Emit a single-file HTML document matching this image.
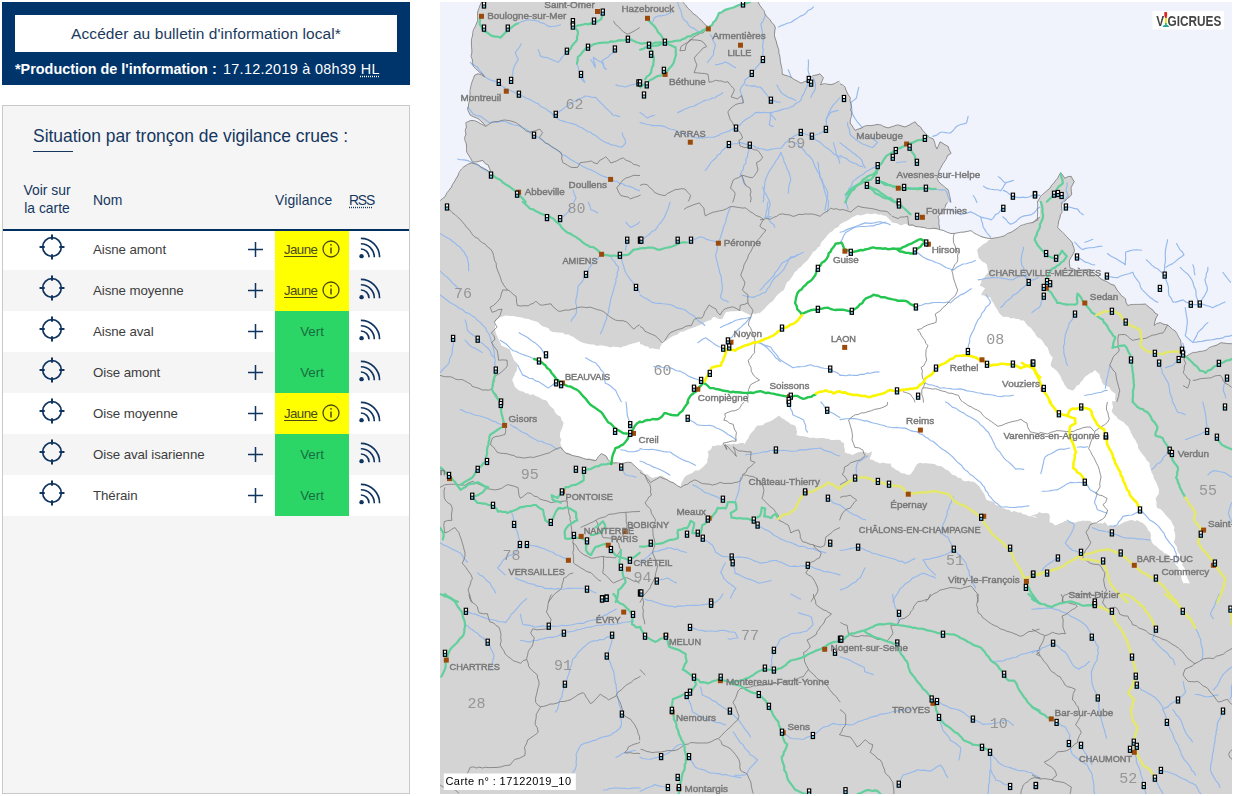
<!DOCTYPE html>
<html lang="fr"><head><meta charset="utf-8"><title>Vigicrues</title>
<style>
html,body{margin:0;padding:0;background:#fff;}
body{width:1234px;height:796px;position:relative;overflow:hidden;font-family:"Liberation Sans",sans-serif;color:#0a2f5c;}
.hd{position:absolute;left:2px;top:2px;width:408px;height:83px;background:#00356b;}
.btn{position:absolute;left:13px;top:13px;width:382px;height:37px;background:#fff;color:#1c3a5e;font-size:15.5px;line-height:37px;text-align:center;letter-spacing:0.08px;}
.prod{position:absolute;left:13px;top:58px;color:#fff;font-size:14.4px;line-height:18px;white-space:nowrap;letter-spacing:0.13px;}
.prod b{letter-spacing:0}
.prod abbr{text-decoration:underline dotted;text-underline-offset:2px}
.pan{position:absolute;left:2px;top:105px;width:406px;height:687px;background:#f5f5f5;border:1px solid #c9c9c9;}
.ttl{position:absolute;left:30px;top:19px;font-size:17.45px;line-height:22px;color:#16375f;white-space:nowrap;}
.bar{position:absolute;left:30px;top:44.5px;width:40px;height:1.5px;background:#16375f;}
.th{position:absolute;font-size:13.9px;line-height:18px;color:#16375f;white-space:nowrap;}
.hl{position:absolute;left:0;top:123px;width:406px;height:2px;background:#00305f;}
.row{position:absolute;left:0;width:406px;height:41px;}
.row.w{background:#fff}
.row .nm{position:absolute;left:90px;top:0;line-height:42px;letter-spacing:-0.08px;font-size:13.3px;color:#3d3d3d;white-space:nowrap;}
.row .vg{position:absolute;left:272px;top:0;width:74px;height:41px;text-align:center;line-height:42px;font-size:13.3px;}
.vg.j{background:#ffff00;color:#4a4a12;}
.vg.v{background:#2bd566;color:#176d3f;}
.vg.j u{text-underline-offset:2px;letter-spacing:-0.6px}
.row svg{position:absolute;}
</style></head><body>
<div class="hd"><div class="btn">Accéder au bulletin d'information local*</div>
<div class="prod"><b>*Production de l'information :</b><span style="margin-left:6.300px;letter-spacing:0.3px">17.12.2019 à 08h39 <abbr>HL</abbr></span></div></div>
<div class="pan">
<div class="ttl">Situation par tronçon de vigilance crues :</div><div class="bar"></div>
<div class="th" style="left:18px;top:76px;text-align:center;width:52px;white-space:normal;line-height:17.5px">Voir sur la carte</div>
<div class="th" style="left:90px;top:85px">Nom</div>
<div class="th" style="left:272px;top:85px;letter-spacing:0.15px">Vigilance</div>
<div class="th" style="left:346px;top:85px;text-decoration:underline dotted;text-underline-offset:2px;letter-spacing:-1.2px">RSS</div>
<div class="row w" style="top:123px"><svg style="left:35.800px;top:5.400px" width="26" height="26" viewBox="0 0 26 26" fill="none" stroke="#0f3460" stroke-width="1.7"><circle cx="13" cy="13" r="9.300"/><path d="M13 1.300v3.700M13 21v3.700M1.300 13h3.700M21 13h3.700" stroke-linecap="round" stroke-width="2"/></svg><div class="nm">Aisne amont</div><svg style="left:244px;top:12px" width="17" height="17" viewBox="0 0 17 17" stroke="#0f3460" stroke-width="1.5"><path d="M8.5 1v15M1 8.500h15"/></svg><div class="vg j"><u>Jaune</u> <svg style="position:relative;vertical-align:-4px;margin-left:1px" width="18" height="18" viewBox="0 0 18 18" fill="none" stroke="#4a4a12" stroke-width="1.3"><circle cx="9" cy="9" r="8"/><path d="M9 7.500v6" stroke-width="1.5"/><circle cx="9" cy="4.800" r="0.900" fill="#4a4a12" stroke="none"/></svg></div><svg style="left:354.500px;top:7.500px" width="23" height="23" viewBox="0 0 24 24" fill="none" stroke="#0f3460" stroke-width="1.700"><circle cx="3.700" cy="20" r="2.300" fill="#0f3460" stroke="none"/><path d="M3 12.500a8.500 8.500 0 0 1 8.500 8.500M3 7a14 14 0 0 1 14 14M3 1.500a19.500 19.500 0 0 1 19.500 19.500"/></svg></div>
<div class="row" style="top:164px"><svg style="left:35.800px;top:5.400px" width="26" height="26" viewBox="0 0 26 26" fill="none" stroke="#0f3460" stroke-width="1.7"><circle cx="13" cy="13" r="9.300"/><path d="M13 1.300v3.700M13 21v3.700M1.300 13h3.700M21 13h3.700" stroke-linecap="round" stroke-width="2"/></svg><div class="nm">Aisne moyenne</div><svg style="left:244px;top:12px" width="17" height="17" viewBox="0 0 17 17" stroke="#0f3460" stroke-width="1.5"><path d="M8.5 1v15M1 8.500h15"/></svg><div class="vg j"><u>Jaune</u> <svg style="position:relative;vertical-align:-4px;margin-left:1px" width="18" height="18" viewBox="0 0 18 18" fill="none" stroke="#4a4a12" stroke-width="1.3"><circle cx="9" cy="9" r="8"/><path d="M9 7.500v6" stroke-width="1.5"/><circle cx="9" cy="4.800" r="0.900" fill="#4a4a12" stroke="none"/></svg></div><svg style="left:354.500px;top:7.500px" width="23" height="23" viewBox="0 0 24 24" fill="none" stroke="#0f3460" stroke-width="1.700"><circle cx="3.700" cy="20" r="2.300" fill="#0f3460" stroke="none"/><path d="M3 12.500a8.500 8.500 0 0 1 8.500 8.500M3 7a14 14 0 0 1 14 14M3 1.500a19.500 19.500 0 0 1 19.500 19.500"/></svg></div>
<div class="row w" style="top:205px"><svg style="left:35.800px;top:5.400px" width="26" height="26" viewBox="0 0 26 26" fill="none" stroke="#0f3460" stroke-width="1.7"><circle cx="13" cy="13" r="9.300"/><path d="M13 1.300v3.700M13 21v3.700M1.300 13h3.700M21 13h3.700" stroke-linecap="round" stroke-width="2"/></svg><div class="nm">Aisne aval</div><svg style="left:244px;top:12px" width="17" height="17" viewBox="0 0 17 17" stroke="#0f3460" stroke-width="1.5"><path d="M8.5 1v15M1 8.500h15"/></svg><div class="vg v">Vert</div><svg style="left:354.500px;top:7.500px" width="23" height="23" viewBox="0 0 24 24" fill="none" stroke="#0f3460" stroke-width="1.700"><circle cx="3.700" cy="20" r="2.300" fill="#0f3460" stroke="none"/><path d="M3 12.500a8.500 8.500 0 0 1 8.500 8.500M3 7a14 14 0 0 1 14 14M3 1.500a19.500 19.500 0 0 1 19.500 19.500"/></svg></div>
<div class="row" style="top:246px"><svg style="left:35.800px;top:5.400px" width="26" height="26" viewBox="0 0 26 26" fill="none" stroke="#0f3460" stroke-width="1.7"><circle cx="13" cy="13" r="9.300"/><path d="M13 1.300v3.700M13 21v3.700M1.300 13h3.700M21 13h3.700" stroke-linecap="round" stroke-width="2"/></svg><div class="nm">Oise amont</div><svg style="left:244px;top:12px" width="17" height="17" viewBox="0 0 17 17" stroke="#0f3460" stroke-width="1.5"><path d="M8.5 1v15M1 8.500h15"/></svg><div class="vg v">Vert</div><svg style="left:354.500px;top:7.500px" width="23" height="23" viewBox="0 0 24 24" fill="none" stroke="#0f3460" stroke-width="1.700"><circle cx="3.700" cy="20" r="2.300" fill="#0f3460" stroke="none"/><path d="M3 12.500a8.500 8.500 0 0 1 8.500 8.500M3 7a14 14 0 0 1 14 14M3 1.500a19.500 19.500 0 0 1 19.500 19.500"/></svg></div>
<div class="row w" style="top:287px"><svg style="left:35.800px;top:5.400px" width="26" height="26" viewBox="0 0 26 26" fill="none" stroke="#0f3460" stroke-width="1.7"><circle cx="13" cy="13" r="9.300"/><path d="M13 1.300v3.700M13 21v3.700M1.300 13h3.700M21 13h3.700" stroke-linecap="round" stroke-width="2"/></svg><div class="nm">Oise moyenne</div><svg style="left:244px;top:12px" width="17" height="17" viewBox="0 0 17 17" stroke="#0f3460" stroke-width="1.5"><path d="M8.5 1v15M1 8.500h15"/></svg><div class="vg j"><u>Jaune</u> <svg style="position:relative;vertical-align:-4px;margin-left:1px" width="18" height="18" viewBox="0 0 18 18" fill="none" stroke="#4a4a12" stroke-width="1.3"><circle cx="9" cy="9" r="8"/><path d="M9 7.500v6" stroke-width="1.5"/><circle cx="9" cy="4.800" r="0.900" fill="#4a4a12" stroke="none"/></svg></div><svg style="left:354.500px;top:7.500px" width="23" height="23" viewBox="0 0 24 24" fill="none" stroke="#0f3460" stroke-width="1.700"><circle cx="3.700" cy="20" r="2.300" fill="#0f3460" stroke="none"/><path d="M3 12.500a8.500 8.500 0 0 1 8.500 8.500M3 7a14 14 0 0 1 14 14M3 1.500a19.500 19.500 0 0 1 19.500 19.500"/></svg></div>
<div class="row" style="top:328px"><svg style="left:35.800px;top:5.400px" width="26" height="26" viewBox="0 0 26 26" fill="none" stroke="#0f3460" stroke-width="1.7"><circle cx="13" cy="13" r="9.300"/><path d="M13 1.300v3.700M13 21v3.700M1.300 13h3.700M21 13h3.700" stroke-linecap="round" stroke-width="2"/></svg><div class="nm">Oise aval isarienne</div><svg style="left:244px;top:12px" width="17" height="17" viewBox="0 0 17 17" stroke="#0f3460" stroke-width="1.5"><path d="M8.5 1v15M1 8.500h15"/></svg><div class="vg v">Vert</div><svg style="left:354.500px;top:7.500px" width="23" height="23" viewBox="0 0 24 24" fill="none" stroke="#0f3460" stroke-width="1.700"><circle cx="3.700" cy="20" r="2.300" fill="#0f3460" stroke="none"/><path d="M3 12.500a8.500 8.500 0 0 1 8.500 8.500M3 7a14 14 0 0 1 14 14M3 1.500a19.500 19.500 0 0 1 19.500 19.500"/></svg></div>
<div class="row w" style="top:369px"><svg style="left:35.800px;top:5.400px" width="26" height="26" viewBox="0 0 26 26" fill="none" stroke="#0f3460" stroke-width="1.7"><circle cx="13" cy="13" r="9.300"/><path d="M13 1.300v3.700M13 21v3.700M1.300 13h3.700M21 13h3.700" stroke-linecap="round" stroke-width="2"/></svg><div class="nm">Thérain</div><svg style="left:244px;top:12px" width="17" height="17" viewBox="0 0 17 17" stroke="#0f3460" stroke-width="1.5"><path d="M8.5 1v15M1 8.500h15"/></svg><div class="vg v">Vert</div><svg style="left:354.500px;top:7.500px" width="23" height="23" viewBox="0 0 24 24" fill="none" stroke="#0f3460" stroke-width="1.700"><circle cx="3.700" cy="20" r="2.300" fill="#0f3460" stroke="none"/><path d="M3 12.500a8.500 8.500 0 0 1 8.500 8.500M3 7a14 14 0 0 1 14 14M3 1.500a19.500 19.500 0 0 1 19.500 19.500"/></svg></div>
<div class="hl"></div>
</div>
<svg class="map" width="792" height="792" viewBox="440 2 792 792" style="position:absolute;left:440px;top:2px;overflow:hidden;will-change:transform">
<rect x="440" y="2" width="792" height="792" fill="#d4d4d4"/>
<path d="M440 2 481.5 2 477.7 12.1 477.2 20.8 473.9 29.6 471.4 42.2 471.4 56 473.2 66.1 477.7 70.3 484.7 76.9 477.7 73.6 474.2 74.9 471.4 84.9 469.6 97.5 468.1 110 470.2 115.6 477.7 118.3 485.7 126.4 477.7 122.1 470.7 120.1 466.4 123.1 465.1 137.7 467.1 152.8 472.7 162.3 482.7 161 487.7 165.3 491 172.9 485.2 168.3 477.7 164.8 471.4 162.8 463.9 166.6 457.6 175.4 451.3 186.7 445 196.7 440 201Z" fill="#f0f3fc"/>
<path d="M682.7 2 690.3 10.8 699 18.3 707.8 27.1 715.4 20.8 719.1 13.3 727.9 9 739.2 5 750.6 2Z" fill="#f0f3fc"/>
<path d="M758.1 2 765.6 14.6 775.7 27.1 774.4 34.7 778.2 47.2 780.7 62.3 782 73.6 790.8 77.4 800.8 82.9 808.3 79.9 813.4 75.6 819.6 73.6 823.4 77.4 820.9 84.2 831 84.2 840 81.9 840 2Z" fill="#f0f3fc"/>
<path d="M840 2 1040 2 1040 202 950.6 202 948 189.2 940.5 184.2 936.7 177.9 940.5 167.8 945.5 159 950.6 152.8 948 146.5 940.5 141.4 936.7 149 933 138.9 926.7 135.2 922.9 130.1 915.4 122.1 905.3 126.4 897.8 125.1 887.7 127.6 877.7 124.4 863.9 126.4 855.1 130.1 850.1 122.6 851.3 112.6 850.1 97.5 845 87.4 840 83.7Z" fill="#f0f3fc"/>
<path d="M1032 2 1232 2 1232 202 1032 202Z" fill="#f0f3fc"/>
<path d="M1060.9 172.9 1064.7 177.9 1070.9 175.9 1074.7 181.6 1070.9 187.9 1072.2 194.2 1064.7 202 1037 202 1043.3 194.2 1049.6 187.9 1055.9 180.4Z" fill="#d4d4d4"/>
<path d="M494 322.6 496 320.7 497.6 319 500.6 317 503.5 316.2 505.5 315.6 508.1 315.8 509.9 316 513.6 315.9 515.6 316.6 517.2 317 520.8 317.3 523.2 317.9 524.6 318.4 528.5 318.9 530.9 320 533.4 320.8 535.4 321.2 538.2 322.2 539.9 324.2 542.9 326.5 546 327.3 548.8 328.6 549.8 330.6 552.6 331.9 556.3 332.3 557.6 332.5 560.7 332.7 563 332.7 564.9 334.6 568.8 334.5 570.7 336.1 573.7 337 576.4 339.2 578.4 340.6 580.8 341.9 583.2 342.8 585.5 343.6 588.7 344.1 591.1 344.6 593.9 344.6 596 345.7 598.2 345.7 600.1 345.2 602.6 345.4 606.5 346.2 608.2 346.8 610.5 347.5 613.3 346.6 615.8 346.9 618.5 347.1 620.3 347.8 624.1 346.1 625.1 346.2 629.1 344.5 631.1 343.9 632.8 343.5 636.9 342.6 639.8 341.4 640.1 344.2 642.3 344.4 645 346.3 648.2 346.5 649.4 348.4 652.9 348.3 655.6 349 657.9 348.9 660 349.7 659.8 346.9 661 346 662 342.1 663.5 340.8 666.6 340.5 667.6 339.4 669.5 338.3 672.5 336.3 675.3 335.3 677.2 334.7 679.9 332.1 683.4 331.4 685.9 330.4 687.1 329.8 689.9 328.7 693.4 327.5 695.9 326.8 698.4 325.6 700.4 324.8 703.1 324.1 704.6 322.3 708.3 320.8 710.9 319.9 713.1 317.1 715.7 317.3 718.2 318.7 720 319.2 722.3 319.1 724.3 315 726 312 729.8 311.4 732.1 311.3 734.7 311.2 738.4 311 741 310.7 743.5 311.7 745.6 313.1 748.3 313.9 751 315.8 753.1 313.5 756.1 313.9 758.3 312.8 759.2 313.5 762.7 310.5 765 308.3 766.6 306.3 768.4 304.5 770 302.9 772.3 301.6 774 299.5 775.7 297.1 777.5 294.7 779.4 293.2 781.8 291.3 783.7 290.2 785 287.6 785.9 284.6 787.1 281.9 789.1 280.7 791.1 278 793.4 274.7 794.2 272.6 796.4 271.1 798.7 268.2 801.1 266.8 803.2 263.9 805.1 262.4 807.7 260 809.9 257 811.2 255.1 812.9 252 816 250.2 817.7 247.5 820.2 246 820.8 243.3 822 241.5 824.4 238.9 826.7 236.3 827.1 235.4 829.7 232.7 832.8 230.9 834.7 228.6 836.2 228 838.9 226.6 839.7 224.4 843 222.5 845.4 221.5 847.5 220.4 850.5 218.4 852.3 217.2 855.2 215.9 857.6 214.7 860.3 215.5 863.7 214.7 865.6 213.9 867.9 213.5 870.9 214.3 873.3 213.7 875.4 213.5 878.3 214.8 881 214.5 883.6 215.7 885.6 215.7 888.1 218 889.3 219.3 892.3 222.4 893.6 222.8 897.3 223.4 900.7 225.5 903.5 224.4 905.4 223.7 909 225.2 910.2 225.8 913.6 226 916.5 227.3 918.9 226.8 920.1 227.1 922.7 228 926 228.1 928.9 227.9 930.1 228.2 933.5 228.9 937.1 229.3 938.9 228.8 938.7 229.2 942.7 230.1 945.6 230.8 948.1 232.3 949.8 233.6 952.5 233.4 955.8 233.2 957.8 232.2 960.9 231.7 963.3 232.4 965.9 231.9 967.4 231.4 970.7 230.8 972.4 231.8 975.4 233.4 978 234.7 979.8 235.9 981.7 237.3 984.3 238.1 987.3 238.3 991.4 238.7 988.3 240.6 986.3 242.7 983.5 244.1 981.2 245.9 978.4 248.2 977.1 249.9 977.6 252 978 254.4 978.7 258 979.8 259.1 982.2 261.6 984.9 262.7 986.8 264.6 987.5 267.7 987.9 269.9 988.2 272.4 986.4 274.6 984 278 981.3 279.6 981.3 282.8 979.6 285.6 982.6 287.1 985.1 288.2 982.5 292.1 981 294.9 984 295.4 985.4 296.3 987.5 297.2 990.3 297 991.3 300.2 993.4 302.7 994.5 305.3 996.1 307.8 997.7 310.3 998.8 312.6 1000.4 314.4 1003.3 317.1 1005.8 316.8 1008.8 316.9 1010.6 318.5 1013.6 318 1016 319.1 1018.8 319 1020.9 320.6 1024 320.4 1024.6 321.6 1026.7 324.4 1028.3 326.2 1031.1 328.1 1032.5 330.2 1034.9 333 1036 335.6 1038.1 337.7 1039.6 338.6 1039.9 338.3 1042.1 340.5 1044.1 343.5 1045.2 345.6 1047.5 347.2 1048.4 350.1 1049.5 353.4 1050.6 355.3 1052.6 357.6 1052.2 359.6 1050.9 363.2 1050.8 365.7 1051.7 366.9 1054.3 368.7 1056.4 370.4 1057.9 372.2 1059.9 375.3 1061.1 377.6 1061.9 379.9 1063.4 381.9 1064.3 384.4 1065.6 385.9 1067.1 388.6 1070.7 390 1073.1 390.5 1075.6 387.7 1076.2 386.1 1079.1 384.8 1080.7 382 1082.8 380.2 1083.9 378.1 1085.5 376.5 1088.3 374.4 1090.6 372.8 1092.6 372.4 1094.7 370.1 1096.8 371.8 1099 373.8 1099.6 374.6 1100.4 378.6 1101.5 379.7 1102.1 382.6 1103.8 385 1106.3 385.7 1109.3 387.3 1111.3 390.8 1113.4 392.3 1115.7 394.1 1115.2 397.4 1115 399.5 1116.1 401.3 1112 401.2 1112.5 404.6 1113.1 407.4 1111.8 410.1 1112 412.1 1114.3 415.1 1116.2 416.3 1118 419.1 1120.7 420.4 1123.8 422.3 1125.6 424.4 1128.3 426.4 1129 428.4 1130.3 430.6 1130.6 432.3 1132 434.4 1133.1 436.9 1135.4 440 1136.5 442.5 1137.9 444.8 1138.1 448 1139.5 450.3 1140.7 452.1 1143.2 455.3 1144.5 456.4 1145.6 458.2 1147.1 461 1149.4 462.4 1149.5 465 1150.1 468.1 1151.8 470.1 1151.2 472.1 1153.3 475.2 1153.7 477.9 1154.6 479.6 1156.5 483.1 1157 484.3 1158.6 488.2 1158.9 490.1 1158.8 493.7 1156.3 497.3 1155.6 499.3 1156.7 502.2 1156.4 504.6 1157.1 508 1160.4 508.9 1162.5 511.1 1164.9 513.9 1167 516.6 1169 518.4 1171.1 520.7 1172.1 523.3 1172.8 524.6 1174.5 527.6 1173.8 530.5 1174.8 532.6 1175.3 535.7 1175.1 538.3 1174.5 540.3 1173.9 542.2 1175.9 545.6 1177.2 547.3 1177.2 550 1178.6 553.3 1180.5 554.9 1180.5 558.1 1182 560.4 1182.6 563.2 1182.1 565 1184.6 568.3 1185.2 570.8 1185.8 572.7 1186.8 575.1 1187.4 578.6 1188.4 579.9 1189.8 583.4 1185.2 583.1 1183.6 583.6 1181.9 580.1 1181.3 577.3 1181 574.8 1179.8 573.5 1178.6 570.7 1178.4 567.6 1176 565 1174.9 563 1172.8 560.5 1170.8 558.4 1169 555.7 1166 553.6 1164.1 553.2 1162.4 551 1160.2 550 1157.6 547.6 1155.9 545.8 1154.3 545.2 1151.9 542.6 1151.6 541 1150.7 538.3 1151 535.2 1150.2 532.2 1147.9 530.1 1147.3 527.9 1144.8 524.8 1142.3 522.8 1139.9 521.7 1136.9 520.1 1135.6 521.2 1131.8 520.1 1129.8 520.2 1127.4 521.3 1124.5 521.8 1123.2 522.8 1120.3 524.2 1117 525.9 1114.3 524.8 1113.1 526.6 1110.6 526.6 1107.4 525.2 1105 522 1102.5 523.7 1100.4 523.1 1097.2 523.4 1095.2 523.6 1092.9 523.2 1090.4 521.1 1087.8 520.8 1084.2 520.7 1083 520.4 1080 521.2 1077.8 521.5 1074.8 522.7 1072.9 521.9 1069.2 522 1068 521.3 1065.1 520.8 1062.1 522.7 1060.3 523.3 1056.7 524.9 1054.6 525.3 1052.8 523.3 1049.9 522.6 1049.5 520.2 1049.9 516.3 1048.8 513.4 1046.7 512.9 1044.5 513 1041.8 513.3 1039.4 511.9 1036.8 514.1 1034.3 514.7 1031.2 515.8 1034.5 517.4 1037.1 517.4 1040.1 517.8 1037.6 517.5 1033.4 516.1 1030.8 516.2 1027.8 516.1 1026.5 514.7 1023 514.3 1020.8 512.4 1017.8 512.6 1016.5 511.8 1013.7 510.9 1011.5 511.9 1009.1 509.7 1006.3 509.4 1003.8 508.3 1001.5 507 998.7 505.7 995.4 504.7 994 502 990.4 500.9 986.3 499.7 985.3 496.8 984.2 493.8 982.8 491.9 981.1 489.4 979.4 486.5 977.4 484.7 976 483.2 973.2 481.6 971.2 481.8 968.5 480.7 965.8 481.4 962.7 480.5 961 477.9 957.8 477.7 956 475.7 952.3 474.8 950.3 472.4 948.3 470.5 945.7 469.4 942.5 467.1 941.2 466.2 937.3 465.8 935 464.2 933.6 464 929.9 463.5 928.2 463.5 925 463.1 923.5 463.4 919.9 462.7 917.2 464.1 915.4 466.7 913.6 470.3 912 472.2 910.9 474.2 907.6 475 904.9 473.4 902.8 473.4 900.6 472.8 898.8 470.9 895.7 469.7 894.5 468.6 891.6 466.9 890.5 463.3 888.2 463.8 885.8 463.2 882.6 462.5 879.9 463.4 878.3 462.6 875.7 461.8 873.1 460 869.5 459.3 871.3 454.9 872 451.5 870.4 452.3 867.6 453.5 865.4 452 862.1 451.7 860.6 451.7 858.3 452.2 854.9 453.8 852 455.2 850.7 454 847.5 453.5 844.7 452.2 844.9 449.4 844.1 446.9 844.2 443.3 841.6 441.9 840.3 440.2 840.6 439.9 836.7 439.8 834.1 440 830.6 439.9 828.7 438.7 826.2 438.8 823.3 437.9 821.6 438.1 818.7 438 816.3 438.5 813.5 437.4 810.7 438.1 807.7 437.3 805.4 436.5 803.6 436.3 799.9 436.1 796.3 435.1 797.1 431.9 796.5 429.5 795.9 426.7 793.9 425.1 790.5 424.3 789 422.5 785.6 420.6 784.2 419.2 782 418.2 778.8 415.4 777 417 773.4 419.4 770.5 421.3 768.1 422 764.8 423.3 763.1 425 760.7 425.5 757.4 425.4 755.3 427.8 754.2 430.1 752.5 431.4 750 434.6 748.7 437 748.6 438.3 746.3 440.8 744.8 444 743.5 443.1 740.6 442.8 738.7 443.7 735.9 444.3 733.7 443.5 730.8 444.5 728.2 444 724.8 445.1 722.4 444 720.4 445.7 718.6 445 714.7 445.9 712.5 445.8 711 449.2 707.7 451.6 708.3 453.3 708.5 456.6 707.3 459.6 707.3 462.8 705.6 464.3 703.5 466.6 700.6 468.9 698.4 470.4 695.2 470.4 692.7 472.7 690 473.9 686.6 475.6 684.4 477.3 682.7 480.7 680.9 483.7 680.8 486.8 676.9 485.4 675.2 483.5 672.9 482.1 670.5 481.6 668 479.4 665.8 478.5 661.9 475.6 660.5 476.1 657.8 476.8 655.4 477 652.9 478 649.8 476.6 647.9 474.4 644.5 473.9 642.7 471.6 640.5 469 639.6 471.1 638 469.2 635.2 467 634.2 465.4 630.5 461.8 629.1 462.5 626.3 462.3 623.7 462.8 621.1 463.2 618.5 464 616 462.3 613.1 462.5 610.1 463.1 608.6 459.7 607.5 457.4 605.6 455.6 603.9 454.7 600.3 453.6 599.8 455.6 597.9 457.4 595.9 460.1 593.7 458.9 590 458.6 588.9 458.2 585.7 458.7 583.5 458.6 581.3 457.3 578.6 456.6 576.5 455.9 573.8 455.7 570.2 453.8 567.6 452.6 565.2 452.3 563.3 449.7 562.5 448 560.3 444.1 560.5 442 561.3 439.6 560 436.9 560 434.5 560.2 432.3 561.5 429.7 562.6 426.7 562.9 425.4 563.6 422.8 561.7 420.2 560.5 416.5 557.6 415.3 555.3 412.7 553.7 409.1 551.1 407 549.2 405.1 547.2 401.2 551.2 401.9 547.6 401.7 545.5 399.9 542.6 399.4 539.8 397.7 537.9 396.8 535.6 396.1 533.4 394.2 529.7 394.9 528.3 393.3 526.2 393.5 522.6 391.2 520.6 391.2 518.4 389.9 515.2 387.2 514.4 385.8 513.2 382.3 512.2 380.5 513 377.7 514.8 374.8 514.7 373.6 516.9 370.5 517 367.3 518 365.1 516.9 362.9 514.3 360.5 512.6 357 512.1 355.5 510.9 353.1 509.8 349.5 506.8 348.1 504.1 346.8 501.6 345.7 500.2 342.6 498.6 339.3 496.6 335.1 495.8 332.7 494.9 329.5 495 326.9 495 324.9 494.6 322.9Z" fill="#ffffff"/>
<path d="M948 202 943 209.5 938 217.1 939.5 229.4 950.6 233.4 960.6 232.2 970.7 230.9 979.4 235.9 990.8 238.4 1000.8 237.2 1010.9 232.2 1020.9 225.9 1033.5 222.1 1040 217.1 1040 202Z" fill="#f0f3fc"/>
<path d="M1032 202 1037.5 202 1037.5 219.6 1032 223.4Z" fill="#f0f3fc"/>
<path d="M1062.2 202 1061.6 212.1 1057.1 227.1 1064.7 234.7 1072.2 242.2 1074.7 251 1069.7 259.8 1069.7 267.3 1077.2 271.1 1089.8 269.8 1099.8 277.4 1107.4 282.4 1114.9 284.9 1118.7 292.5 1125 298.7 1127.5 305 1137.5 305 1145.1 303.8 1150.1 307.5 1157.6 315.1 1153.9 325.1 1160.1 322.6 1167.7 325.1 1175.2 331.4 1180.2 340.2 1182.8 350.2 1185.3 356.5 1192.8 352.8 1202.9 351.5 1212.9 346.5 1220.4 342.7 1232 344 1232 202Z" fill="#f0f3fc"/>
<g fill="none" stroke="#95b9ec" stroke-width="1.15" stroke-linejoin="round" stroke-linecap="round">
<path d="M517.9 23.4 521.7 21.6 525 20.7 528.4 19.5 530.7 20.3 534.5 20.5 537.9 21 540.2 22.5 544.4 23.6 547.1 25.6 550.3 26.6 554 26.3 557.7 25.7 560.5 24.8"/>
<path d="M470.2 62.3 472.4 64.5 475.6 66 478.1 67.8 479 69.9 481.5 72.3 483.3 74.8 485.6 77.3 487.9 78.8 491.5 80.4 494.6 81.1 497.8 82.5 500.5 84.4 503.2 86.9 506.5 88.8 508.9 89.8 512.2 91.3 514.9 92.6 517.9 93.7 519.9 95.1 522.9 96.2 526.4 98.2 529.8 99.4 532.7 101.1 535.6 102.7 538.5 103.9 540.1 106 542.8 107.5 545.9 108.7 548.3 111.1 550.6 112.1 553.2 115 555.1 116.8 557.7 118.7 560.1 120.3 563.8 121.4 566.6 122.3 569.6 123 572.5 123.6 576 124.8 579 126.7 582.1 127.7 584.3 129.5 587.9 131.6 590.5 132.2 592.9 134.3 595.8 135.7 598.2 137.6 601 139.9 603 141.1 605.8 142.6 608.3 143.2 611.3 144.9 614.7 145.2 618 146.4 621.3 147.2 623.4 145.7 625.7 142.9 625 139.4 622.9 136.3 622.3 132.8"/>
<path d="M511.1 80.4 511.8 76.9 512.8 73.8 513.1 69.9 514.5 66 515.8 63.4 518.4 59.4 516.5 55.9 515.3 52.3 517.3 49.9 519.8 46.5 521.2 43.8"/>
<path d="M555.8 114.3 559.2 111.7 562.3 109.6 565.3 107.1 568.4 105.7 570.5 104.1 573.4 102 576.2 100.2 578.9 98.7 582.6 97.8 585.2 96 589.1 96.5 592.8 97.5 595.6 97.4 598.4 100.4 600.9 103 603.1 104.9 605.7 107.9 607.8 109.7 610.6 112.4 612.9 115 616.3 115.6 619.5 116.6"/>
<path d="M538 49.7 539.7 53.1 540.1 55.9 543.4 57.1 547.1 57.6 550.2 59 554.5 60.8 558.1 62.3 560.5 59.9 562.1 57.1 564.6 54.7 567.3 52.3"/>
<path d="M581 74.4 583.1 78.6 584.8 82.5 582.5 80.4 580.5 77.1 579.8 73.9 578.7 70.2 578.2 66.7 576.5 63.4"/>
<path d="M590.8 59.8 592.8 62.5 593.6 64.4 595.3 67.5 594.9 63.5 593.8 61.1 593.4 57.2 596 59.3 598.7 61 601.3 62.2 603 64.3 604.1 67.7 606.3 69.5 604 67 603.4 63.7 602 60.7 605.4 58.5 608.1 56.9 610.6 54.3 613.7 52.7"/>
<path d="M467.6 107.5 470.4 110.2 473.2 114.1 476.2 115.5 479.9 116.1 483.1 118.1 486.7 120.7 490.1 123 493 121.8 496.8 122.4 499.5 121.6 502.6 121.3 505.8 121.7 508.3 122.9 510.9 123.9 514.2 125 517.4 125.5 519.9 126.1 522.8 127.9 525.9 129 528.9 131.1 531.2 133.8 534.3 135.3 537.1 136.6 539.6 138.5 542.9 140.4 545.6 142.8 548.5 144.2 550.3 145.8 553.4 147.9 555.4 149 557.7 150.8 560.8 153 562.6 154.8 565.6 155.8 568.6 158 570.6 159.5 573.5 161.1 575.4 162.3 579.1 163.9 582.1 166.1 584.8 167.3 587.2 168.8 591.2 169.9 593.2 171.1 596.7 172.7 599.6 174.4 601.7 175.8 604.7 176.6 608.3 178.1 611 179.5 614.1 181.1 617.2 181.3 619.4 183.5 622.8 183.8 625.4 185.8 629.4 186.4 633.3 187.8 635.9 189.5 639.6 190.6"/>
<path d="M615.9 84.9 618.7 85.9 622.1 86.2 625.4 87 628.7 85.7 632.4 84.7 634.9 84.3 638.4 82.4"/>
<path d="M457.6 159 460.4 159.7 464.1 159.9 467.7 160.6 470.7 162.1 474.9 164 478 165.4 480.8 167.3 483.6 169.4 487.2 170.8 489.9 173.2"/>
<path d="M573.2 190.4 574.4 194.4 576.1 198 573.7 202.4"/>
<path d="M762.9 59.5 760.8 62.4 758.6 64.9 756.3 67.4 754 70.6 752 73.3 750 76 747.8 77.7 745.1 79.7 744.4 83.3 741.7 86.4 740.1 89.8 740.9 92.9 742.1 96.1 742.3 99.4 742.8 102"/>
<path d="M765.6 14.6 764.3 18 762.7 21.6 760.9 24.2 761.6 27.9 762.1 30.9 762.4 34.1 763.4 37.2 763.4 40.6 762.8 44.1 762.5 47.3 763.4 49.7 762.7 53.5 763.4 56.7 763.2 59.2"/>
<path d="M813.4 7 811 9.3 808 10.5 806.2 12.9 803.6 15 799.9 16.4 797 18.6 793.9 20.3 791.3 22.3 787.4 23.2 784.3 24.6 780.9 25.7 778.7 27.1"/>
<path d="M808.3 59.8 808.5 63 808.3 66.7 808.1 70.6 809.1 74.2 809 77.2 807.9 80 807.4 83.7 806.9 86.7 805.4 89.5 804 93.4 802 96.3 800.9 100.1 798.8 102 795.7 103.5 793.8 105.7 790.9 107 786.9 108.8 784.4 108.7 780.5 110.1 777.1 111.1 774.2 111.8 771 113 770.3 115.3 770.4 119.1 769.6 122.1 769.3 124.9 773.2 126.6"/>
<path d="M840 97.5 838.3 99.5 835.6 102.7 833.3 104.9 831.3 108 829.6 111.1 828.6 113.3 827.1 117.1 826.4 119.6 826.4 123.6 826.4 125.9 826.2 128.9 823.1 131.5 819 133.7 816.3 134.7 811.7 136 808 135 804.3 133.8 800.6 132.9 797.3 134.6 794.4 136.1 791.3 138 788.5 140.7 785.6 142.4 783.5 145.1 781.2 148.2 777.7 148.3 774.9 148.8 771.6 149.1 768.3 150.1 765.9 150.1 762.5 148.8 759.7 148.6 755.9 147.5 753.4 145.7 750.1 145.6 746.5 144.4 743.9 143.6 740 142.4 736.9 143.7 733.1 143.8 729.3 144.8"/>
<path d="M640 122.6 642.9 123.3 646.6 124.3 649.2 124.7 653.1 125.6 656.1 125.6 658.9 125.5 661.6 125.9 664.6 126.6 668.1 128.2 670.9 129.2 674.5 129.8 676.8 131.4 680.5 133.1 683.7 133.2 686.4 134.4 688.9 135.7 692.1 136.3 694.8 137.3 698.1 138.1 701.5 137.9 703.9 138 707 137.2 710.5 137.2 713.8 137.1 716.4 136.2 719 135.1 722.2 133.2 725.4 132.3 729 131.1 732.4 129.1 736.5 128.4 738.2 125.9 740.4 124.6 742.8 121.7 745.3 119.8 748.2 117.9 750.4 116.9 753.2 114.7 755.2 112.6 759 112.4 762 112.8 764.3 112.2 767.7 112.8 771.2 112.2"/>
<path d="M677.7 112.6 680.4 111.4 683.9 109.5 687.3 108.3 690 107 694 106.3 696.7 104.6 700 103 703.5 101.1 706.1 100 709.4 99.8 712.1 98.1 715.1 97.7 717.6 95.8 720.9 94.2 722.8 92.6"/>
<path d="M749.8 145.2 749 148 748.7 151.4 747.7 153.6 747.5 156.7 745.7 159.4 746 163.1 743.7 165.6 743.3 169.4 741.3 172 740.3 175 742.7 178.5 743.4 182.1 745.3 185.3"/>
<path d="M705.3 170.3 707.3 167.8 709.3 165.1 711 162.3 713.1 160.3 715.9 158.3 717.2 155.3 720.2 153.7 721.8 151 724.5 148.6 726.2 146.8 729 144.4"/>
<path d="M763.1 202 763.8 199.4 763.5 196.1 764.2 193.5 764 190.1 764.6 186.6 764.6 183.4 765.2 180.5 766.1 178 767.3 175.5 768.8 171.9 770.8 169 772.3 166.9 774 164.3 776 160.7 777.6 158.9 779.4 155.6 781.1 152.5"/>
<path d="M795.8 142.7 797.9 144.5 800 146.7 802.7 149 804.9 151.5 806.4 154 808.8 155.5 811.2 158.2 812.8 160.5 813.7 163.1 814.9 166.3 816.5 169.5 817.6 171.6 819.5 174.5 820.8 178.3 821.9 181.4 822.9 183.7 823.6 187 824.4 190.5 825.3 193.1 826.2 196.3 827.5 198.9 828.7 202"/>
<path d="M811.9 136.2 813.8 137.6 816.3 140.4 819.3 141.5 821.5 143.6 823.8 145.9 826.1 147.6 829.2 149.6 831.4 151.4 833.9 154.1 837.6 155.8 840.3 157.9"/>
<path d="M677.7 2 678.2 4.6 679.4 7.5 681.1 11.2 681.7 14.5 682.3 16.7 684.1 20.1 687 21.9 688.3 24.6 690.7 27.2 694 28.4 696.9 30.7 700.5 32.4"/>
<path d="M745.5 84.9 748.5 85.7 751.3 86.1 755 85.9 757.9 87.2 760.1 87 762.6 89.5 764.6 92.2 766.9 94.8 769 98.2 771.4 100.5 773.8 100.6 777.5 102.2 780.3 102.1"/>
<path d="M788.2 69.8 789.8 73.4 791.3 77.5"/>
<path d="M652.6 22.1 654.6 17.6 658.6 15.8 661.8 15.8 665.5 15 668.6 13.7 672.8 11.6"/>
<path d="M710.4 34.7 712.4 37.7 713.2 41 715.3 44.3 714.6 48.5 713.6 51.2 713.4 55 711.6 57.1 709.4 59.9 707.6 62.3"/>
<path d="M715.4 64.8 718.6 64.4 722.5 63.3 725 61.9 729.3 63.7 732.7 66.2 735.6 67.6"/>
<path d="M776.9 84.9 778.6 88.2 780.7 92 783.2 94.3 785.5 95.5 787.9 97.2 791.8 98.4 795.9 100.4"/>
<path d="M769.4 112.6 771.4 115 774 117.9 775.6 119.6"/>
<path d="M640 112.6 643 114.4 644.9 116.1 647.5 118 651.2 116.1 654.7 115.3"/>
<path d="M810.9 97.5 812.4 93.7 814.7 90.7 815.4 87.4 815.4 83.7 814.6 80.9 813.1 77.5"/>
<path d="M825.9 120.1 827.1 117.5 829.1 114.8 830.6 112.4 835 111.1 838.1 110.4"/>
<path d="M780.7 152.8 782.4 156.3 783.6 159 784.1 162 786 165.4 786.9 168.7 788.7 171.8 789.6 174.8 790.5 177.8 790.6 180.9 789.6 183.4 788.7 186.9 788.7 190.5 788.3 193.1"/>
<path d="M833.5 142.7 834.4 146.3 835.4 149.6 836.1 153.1 836.8 155.7 839.1 159.9 839.6 163.2"/>
<path d="M858.8 87.4 857.9 90.7 857.2 94.1 856.4 98 853.7 100.4 850.8 102.5 851.4 105.4 851.9 109.8 852.1 113.1 853.8 116.4 855.4 119 857.5 122.2 860 124.9 862.2 127.7"/>
<path d="M968.1 116.3 967.4 119.8 966.4 123 963.7 123.9 961.5 124.2 958.1 125.5 955.6 127.3 953.3 130.5 950.3 133 947.2 132.9 943.6 132.2 940.3 132.2 936.8 135.1 932.8 136.4"/>
<path d="M998.3 176.6 1000.5 178.2 1003.1 181.1 1005.7 183.3 1004.3 185.1 1003 187.6 1000.6 190.8 997.7 189.8 994.2 189.6 990.8 189.2 987.1 188.4 983.5 186.2"/>
<path d="M1003.3 190.4 1006.8 191.9 1009.5 194.3 1012.4 195.7 1016 197.1 1019.7 197.6 1022.8 197.1 1025.4 197.6 1029 197 1031.8 195.5 1034.7 194.9 1039.8 195.4"/>
<path d="M1013.4 180.4 1009.4 181.6 1005.6 182.8"/>
<path d="M973.2 195.5 975.2 198.5 976.9 202.5"/>
<path d="M840 142.7 842.9 145.1 845.2 146.5 847.2 148.5 850.2 150.5 852.3 152.5 855 154 857.1 156 860 158.1 862.2 160.8 862.9 164.3 865.4 167.8"/>
<path d="M840 155.3 842.6 157 846.5 158.5 849.3 161.1 852.9 162.9 856.5 163.8 858.8 165.7 862.8 166.8"/>
<path d="M847.5 122.6 847.6 125.3 849 128.5 849.8 131.8 850.2 134.7 852.9 137 855.4 139.4 857.3 140.6 860.5 142.8 863.3 144.2 866.2 145.2 870 146.8 872.6 147.5 874.8 145.3 877.6 142.4 874.9 140.5 872.4 137.7"/>
<path d="M896.5 162.8 900.8 162 905.8 161.7"/>
<path d="M935.5 189.2 938.9 189.8 942.6 189.8 945.4 190 947 193.1 947.9 196.1 949.1 199.1 950.8 202.4"/>
<path d="M1067.2 182.9 1066.9 187.1 1065.9 190.2 1068.2 196 1065.5 198.9 1062 202.5"/>
<path d="M440 233.4 443.6 235.8 447.2 237.7 450.4 239.5 452.7 241.6 455.3 243.3 457.9 245.8 460.3 247.2 461.6 249.5 464.4 252.3 465.3 254.6 467.2 257.2 467.7 260.6 468.6 264.1 468.5 267.7 468.7 270.6"/>
<path d="M440 271.1 442.9 273.7 444.9 275.6 448 277.8 450.4 280.3 452.2 282.9 455.1 285.2 457.5 287.5 460.1 289.9"/>
<path d="M440 295 443 297 445.1 298.8 447.3 300.2 449.9 302.5 453.8 304.4 456.7 306.2 459.2 308.4 462.6 309.5 465.4 312.4 469.1 313.5 472.5 316.1 475.1 317.8 477.3 320.1 480.3 322.4 482.8 325.4 485.3 327.6 487 331.5 489.1 334 490.1 337.3 491.1 341 492.2 343.5 492.8 346.6 494 350.5 494.3 353.6 494.5 356.8 495.2 360.4 494.7 363 495.3 366.7 495.8 370.5"/>
<path d="M465.1 320.1 466.2 323.3 466.9 327.3 467.5 330.1 469.9 332.8 472.9 335 475.1 336.6 477.5 339.1 479.7 341.5 482.5 343.4 485.5 346.1 487.9 348.2 490.2 350.8 491.4 354.8 494.2 357.4"/>
<path d="M453.1 338.4 453.5 342.4 453.1 346 452.3 348.9 452.2 352.3 451.6 355.5 449.7 358.5 449.3 362.2 447.6 364.9 445 367.4 442.4 370 439.7 373.1"/>
<path d="M465.1 340.2 467.8 343.2 469.7 345.5 472.6 347.2 476.5 349.1 479.8 351 482.2 352.5"/>
<path d="M560.1 218.6 563.1 216.8 565.7 214.2 568.1 211.8 571 208.2"/>
<path d="M588.2 202 589.9 205.9 590.9 209.8 594.3 210.9 597.8 213.1"/>
<path d="M601.6 254.3 599 256.6 597.8 259 594.6 260.7 593.1 263 591.3 265.2 588.8 268.5 587.9 271.6 585.5 274.6 584.4 276.8 583.4 279.6 581.4 282.7 579.4 284.5 577.9 287.1 577.8 289.9 577.2 293 576.9 296 576 299.4 575.6 302.7 576.6 305.9 576.5 309.3 576.4 312.8 574.9 315.9 572.4 318.5 571.1 321.2"/>
<path d="M610.9 257.3 612.5 259.8 615 262.2 616.1 264.7 618.6 266.9 618.3 269.8 617.1 272.8 617.2 276 615.9 278.9 615.9 282 614.5 285.9 614.1 288 612.9 292 612.3 294.4 611.1 297.6 610.4 301 610 303.7 609.2 307.1 608.7 309.8 608.7 312.2 607 315.4 606.6 319 605.1 321.9 604.5 324.1 603.3 327.3 602.3 330.4 600.4 333.8"/>
<path d="M627.2 240.2 627 243 626 246.5 625.5 250.2"/>
<path d="M619.9 255.3 620.8 258.1 622.1 260.9 622.7 263.4 623.9 266.7 624.4 269.6 625.6 272.3 627.3 275.3 629.3 277.9 630.7 280 632.7 282.2 634.7 285.4 636.2 287.8 638.4 289.6 639.6 292.7"/>
<path d="M519.1 332.7 522.5 334.7 525.5 336.3 528.3 338 530.1 339.5 532.8 341.6 535.4 343.1 537.7 345.1 540.4 347.7 542.3 350.3 543.6 352.8 546.1 355"/>
<path d="M500.3 340.2 503 341.9 505.8 343.8 508 345.8 510.6 348.6 513.2 350.7 515.8 351.2 518.9 353 522.2 354.3 525.9 355.6 528.2 356.2 531.4 357.8 534.5 358.6"/>
<path d="M517.9 365.3 519.2 368.4 521 371.7 522.6 374.9 526.5 376.6 529.1 378.2 532.7 378.6 535.5 380.9 539 381.8 542.2 384.1 544.5 385.5 548.2 388.1 550.4 386.4 553.8 384.1 556.5 382.4"/>
<path d="M585.7 357.8 589.4 359.9 592.6 361.7 596.2 363.2 597.4 365.1 599.5 367.4 601.1 370.3 603.6 372.4 604.3 375.8 604.5 379.1 605.4 383.3 608.4 384.5 611.4 386.8 613.6 388.7 615.6 390.3 616.9 393.3 618.3 396 619.7 398.7 621.3 401.7"/>
<path d="M625.9 222.1 628.1 224.9 630.9 227.5 633.6 225.9 637.3 224.1 639.6 221.8"/>
<path d="M691 240.2 694.4 239.6 696.8 238.3 700.6 236.7 703.8 237.7 706.6 239.4 710 240.2 714.8 241.3 718 243.6 717.3 246.8 717.3 250.2 715.7 254.1 715.9 256.8 716.6 259.8 717.6 263.7 717.9 265.6 719.1 269.4 719.5 272 720.6 275 721.5 277.7 721.4 281.3 722.2 284.6 722.4 287.6 722.1 291.2 721 294.2 720.4 297.1 722.7 299.7 725.3 300.4 728.2 302.1"/>
<path d="M670.2 202 669.1 205.3 668.2 208.2 666.9 211.6 665.8 213.8 664.8 216.8 662.8 219.6 661.6 221.8 658.7 224.7 657 227.6 655.3 229.9 652.1 231.4 649.6 234.2 646.4 236.4 644.1 238.2 641.6 240.5"/>
<path d="M730.5 207 729.2 210.2 728.1 212.9 727.2 215.7 726.3 218.7 725.8 222.2 724.6 224.6 723.2 227.8 722.4 231.5 721.4 234.5 720.5 237.5 719.1 240.6 718.1 243.2"/>
<path d="M640 295 643.5 297.4 646.4 298.5 650 300.9 652.1 302.4 655.9 303.2 660.2 303.4 662.7 303.8 666.3 304 670.7 304.7 673.1 305.6 675.9 307.4 679.1 308.4 682.4 309 684.8 309.7 688.3 312.6 689.7 313.7 693.2 315.5 695.6 317.6 697.5 320 700 322.1 702.8 323.6 704.8 325.5"/>
<path d="M803.3 252.3 800.5 253.7 797.1 255.3 794.4 256.6 790.8 256.8 788.5 260.1 787 263.5 785.2 266.4 783.5 269.9 780.6 272.8 778.6 274.9 775.8 276.8 773.1 279.9 770.9 283.5 769.8 286.3 767.2 288.9 765.7 292.3 762.2 293.2 759.7 294.7 756.5 296 753.3 297.4 749.4 296.9 746.3 296.2 742.8 295.2"/>
<path d="M697.8 342.7 699.9 341.2 702.9 339 705.8 337.8 708.3 339.8 710.5 341.1 713.2 343.1 715.3 344.7 719.1 346.8 723.3 347.8"/>
<path d="M720.4 327.6 723.8 325.8 726.4 324.7 730 323.1 732.5 322 735.7 320.3 738.1 319.8 741.4 318.9 745.1 318.5 747.5 318 750.8 317.1 747.6 320.3 745.9 322.7 743.3 324.8 740.4 327.6 737.9 329.7 736.2 331.5 733.7 334.3 732.4 336.7 729.8 338.6 728.2 341"/>
<path d="M758.1 342.7 761.4 343.4 764.4 345.1 768 346.1 771 347.2 772.9 350.7 774.5 352.4 777.1 355.3 778.3 357.6 780.7 360.1 783.5 361.9 787.4 364.2 790.6 366.2 793 367.8 797.3 366.8 799.9 366.8 804.4 366.5 807.9 365.4 810.9 364.8 814 366.2 817 366.2 820.6 367.6 824 368.2 827.4 368.5 830 369 833.1 371.2 837.1 372.8 840.3 375.1"/>
<path d="M653.8 366.6 657 367 660 366.8 663.2 367.5 666.5 368 670.2 367.9 673.2 368.9 676.2 370.7 679.9 371.1 682.5 372.4 685 373.6 687.8 375.8 690.8 377.1 693.8 378.4 697.6 379.5 701.1 380.7"/>
<path d="M768.1 202 767.2 205.3 767.4 208.3 766.2 211.5 766.1 214.2 765.1 217.4 770.9 216.6"/>
<path d="M828.4 202 828.4 205.2 828 208.7 827.3 211.9"/>
<path d="M840 232.2 843.6 231.5 846.1 229.9 849.2 228.6 853.1 227.4 856.1 226.3 858.7 225.2 861.7 224.1 865.2 222.9 868 223.1 870.6 223.4 874.1 222.9 877.4 222 880.5 221.8 883.2 222.6 887.5 223.4 890.2 224.8"/>
<path d="M914.9 251 918.1 253.2 920.2 254.8 922.6 256.8 925.8 258.6 929.2 259.9 932.2 260.7 935.8 262.5 939.3 263.5 942.3 265.2 945.7 267.5 949.6 268.8 953.1 270.2 955.9 268 957.7 266.7 961.1 265 963.1 264 966.2 263.7 969.2 262.7 972.2 262 975.4 260.5"/>
<path d="M915.9 307 919.4 305.5 921.7 305.3 925.5 303.5 928.5 303.8 931.4 302.9 934.3 302.5 937.2 302.5 940.4 302.5 943.6 302.7 947.6 302 950.7 302.8 953.4 300.2 955.3 298.4 958 296.8 960.6 294.9 964.2 293.4 967.5 291.2 971.2 288.7"/>
<path d="M967.9 351.5 968 347.9 968.7 344.5 969.7 341.5 969.6 338.4 971.1 334.7 972 332.7 974.2 328.9 975 326 976.3 323.3 978.1 319.6 980.5 317.2 981.6 313.7 984.3 310.7 985.8 307.2 988.8 305.1 990.6 302.4 989.5 300 987.5 297.2 986.1 294.7"/>
<path d="M840 375.4 842.5 375.4 846.4 375.8 849.3 374.9 851.7 375.2 854.7 375.4 857.7 375.4 860.7 374.3 864.2 374.3 867.2 372.9 870.1 373.2 874.6 372.1 879.1 371.9"/>
<path d="M922.9 382.9 925.4 383.2 928.5 384.6 932.1 385 935.1 386 938.1 386.9 940 388.2 943.8 387.8 946.7 388.3 950.7 388.6 953.4 389.3 957.2 389.1 960.4 388.9 963.7 389.6 966.9 390.9 970.8 391.3 974.5 392 977.1 392.7 980.2 393 983.9 394.1 987.3 394.4 990.5 394.7 994.2 395.3 997.2 396.3 1001.1 396.7 1003.8 395.9 1006.8 396 1009.7 395.9 1013.4 395.2"/>
<path d="M950.6 209.5 953.7 211.7 957.5 212.4 960.9 214.8 963.5 213.3 967.5 212.9 970.5 211.9 974.4 213.5 977.7 215.5 981.1 217.1 984.1 217.9 987.7 218.5 991.2 219.9 993.5 217.9 995.3 214.6 998.6 213.2 1000.3 210.5 1003.7 207.9"/>
<path d="M980.7 217.1 981.5 220.7 982.7 223.9 983 226.7 984.9 229.6 986.6 232.5 988.4 234.7 990.8 237.1"/>
<path d="M1040 207 1037.1 209 1034.5 212.6 1031.5 214.6 1027.7 215.4 1024.2 215.9 1021.1 217 1018.8 218.7 1016.4 221.2 1013.7 222.9 1010.6 224.3 1008.2 222.5 1006.3 219.7 1002.8 216.8"/>
<path d="M978.2 279.9 981.8 279.3 985.6 278.4 988.5 278.3 992 277.4 995.3 277.7 998.9 277.8 1002.4 278.4 1006.3 278.7 1009.4 279.7 1013 279.7 1016.3 277.7 1020.6 276.3 1023.5 274.8 1025.7 277.5 1027 279.6 1028.3 282.3 1031.6 280.3 1035.5 279.1 1038.3 277.5"/>
<path d="M1023.4 247.2 1023.2 250.2 1022.1 253.1 1021.7 256.1 1021 259.4 1021.4 261.9 1021.7 265.1 1023.6 267.5 1023.9 271.2 1025.9 274 1027 276.8 1027.3 279.3 1028.2 282.8"/>
<path d="M1000.8 307.5 1003.1 305.5 1005.5 302.1 1008 300.3 1011.4 297.6 1013.1 295.1 1016.3 293.7 1018.5 291.8 1020.6 289.5 1023.4 287.5 1026.5 284.5 1029 282.5"/>
<path d="M840.4 242.4 842.5 238.9 843.5 236 845.7 232.4 849.2 230.5 852.1 228.8 855 227.2 858.9 226.8 861.7 226.5 864.9 226.5 867.1 226.2 871.1 225.8 873.8 225.8 877 224.4 879.2 224.1 882.7 222.7 885.4 222.1"/>
<path d="M762.5 187.1 763.8 190.1 765.1 192.7 767.2 196.6 768.6 199.6 770 202.5 770 205.7 768.7 208.5 768.9 211.3 768.4 214.5 767.8 217.7 769.1 220 770.8 222.6 773.7 224.5 774.8 227.4"/>
<path d="M817.8 162 818.6 165.3 818.5 168.2 819.2 170.6 819.7 173.6 819.8 177.3 822.1 179.6 823 183.4 824.6 186.3 826.7 189.7 827.5 191.9 827.7 195.8 826.8 199.3 826.4 202.4 825.6 205.8 825 210.1"/>
<path d="M878.1 165.8 874.5 167.2 871.8 168.4 868.6 170.2 865.8 171.8 863.2 174.3 860.5 175.8 857.6 177.7 855.2 179.6 852.5 181.6 851.6 185.5 849.5 188.1 847.5 191.9 845.1 194.5 846 197.2 846.4 200.3 846.4 204.1 847.5 206.8 848.1 209.4"/>
<path d="M760 290.1 762.4 288.1 764.6 285.2 767.4 282.4 770 279.7 771.7 277.9 773.9 275.5 775.2 272.3 777.5 270.2 778.8 267.9 780.6 265.2 782.3 262.9 785.7 261.1 788.7 259.4 791.4 257.7 794.9 256.9 797.5 254.5"/>
<path d="M760 342.9 762.4 344.5 765.6 346.5 767.7 348.3 770 350.9 771.6 352.5 774.2 355.6 775.6 357.7 777.9 359.3 780.4 361.6"/>
<path d="M1065.9 207 1070.1 207.3 1074 208.4 1077.7 209.1 1079.9 212.4 1083.2 214.8"/>
<path d="M1074.7 242.2 1076.8 244.3 1079.7 247.5 1082.4 249.6 1085.7 248.4 1089.3 247.8 1092.8 247.6 1095.1 247.2 1099.1 246.4 1102.1 246.3"/>
<path d="M1084.8 242.2 1088 241.3 1092.8 239.3"/>
<path d="M1077 257 1079.9 258.5 1082.7 260.2 1084.6 261.9 1088.6 263 1091.8 264.5 1094.6 264.9"/>
<path d="M1106.9 276.1 1110.2 276.7 1113.6 277.4 1117.8 277.6 1120.7 276 1124.6 274.7 1128.8 273.7 1132.8 272.2 1133.7 274.8 1135.3 277.4 1137.5 280.4 1139.6 283 1140.4 287 1142.1 289.6 1145.2 292.7 1147.4 294.9 1150.5 297.7 1152.8 299.3 1155.1 301.1 1157.9 302.2"/>
<path d="M1107.4 253.5 1110.7 256 1113.8 257.4 1117.5 259.6 1119.6 260.9 1122.7 262.7 1125.3 264.8 1125.3 261.2 1125.8 258.8 1125.5 255.9 1125.7 252 1129.4 250.9 1133 250 1136.9 249.7 1141.6 250.2"/>
<path d="M1146.3 259.8 1149.3 262.4 1151.8 265.1 1155.2 267.7 1158 269.1 1160.2 271.2 1162.5 273.1 1164.3 274.6 1165.4 278.8 1166.7 281.6 1167.8 284.5 1168.5 287.9 1168.4 291.2 1169 295.4 1171.3 298.3 1172.8 302 1175.8 302.1 1179 301.1 1183 299.9 1185.8 302 1187.9 302.7 1191.1 304.4 1193.9 304.6 1196.9 304.6 1200.1 303.5 1203.1 304.4 1206.7 305.6 1209.1 306.2 1212.8 307.7 1215.7 306.1 1219.1 304.7 1222.2 303.3 1225.1 302"/>
<path d="M1167.7 239.7 1166.9 243.3 1166.2 245.9 1165.8 248.7 1165.3 252.2 1165.3 255.9 1165.5 259.1 1165.4 261.9 1164.6 265 1164.6 268.2 1164.4 272 1164.6 275.4"/>
<path d="M1176.5 243.5 1178.3 246.8 1179.8 249.6 1182.4 252 1184 254.7 1181.6 256.8 1177.8 259.3 1175 261.9 1172.3 263.9 1169 265.3 1166 267.3"/>
<path d="M1180.2 267.3 1183 270.1 1185.2 272.1 1188.2 274.5 1190.4 277.7 1192.1 280.2 1193.3 283.8 1194.2 287.1 1195.8 290 1196 292.9 1196.1 296.1 1197.4 299.3 1197.6 303"/>
<path d="M1192.8 264.8 1194 268 1194.2 271.6 1194.9 274.9"/>
<path d="M1207.9 267.3 1207.7 270.9 1206.4 273.2 1206.1 276.8 1204.9 279.7 1205.7 283.2 1207.1 286.4 1207.4 290.1 1206.1 292.7 1204.5 295.8 1202.5 298.6 1201 301.5 1199.7 304.1"/>
<path d="M1223 272.4 1224.9 275.2 1226.9 277.7 1228.7 280 1230.5 282.2"/>
<path d="M1185.3 307.5 1185.6 310.2 1186.2 314 1186.6 316.3 1187.1 319.1 1187.4 322.7 1186.8 326.1 1186.6 328.7 1186.2 331.6 1185.2 335.6 1187.7 338.1 1190.2 340.2 1192.7 342.4 1195.8 342.3 1198.4 341.6 1202.2 341.4 1204.7 340.6 1208.4 340.1 1210.7 340 1214.3 339.4 1216.9 338.6 1219.6 338.6 1222.9 337.9 1225.5 336.3 1228.5 336.4 1232 335.3"/>
<path d="M1207.9 322.6 1205.1 324.9 1202.5 328.2 1200.2 330.2 1197.6 332.9 1196.7 335.6 1194.7 339.1 1192.8 342.5"/>
<path d="M1185.3 352.8 1184 349.2 1183.8 346.4 1182.8 343.2"/>
<path d="M1075 314.1 1073.4 317.4 1071.9 320.2 1069.2 323.1 1068.7 325.2 1067.8 328.3 1066.3 331.8 1065.2 335.1 1065 338.2 1064.4 340.7 1064.7 343.3 1063.5 346.4 1063.8 350.2 1063.9 353.3 1064.7 356.2 1065.7 359 1066.1 362.3 1067.5 365.3"/>
<path d="M1032 312.6 1034 311 1036.6 308.9 1039 307.7 1040.8 304.9 1041.4 301.3 1043.1 299.5 1043.8 295.9"/>
<path d="M1159.1 363.1 1160.3 366.7 1161.8 369.2 1162.2 373.2 1164.7 376.7 1166 379.4 1168.2 383 1168.9 386.1 1169.5 389 1169.8 392.8 1170.8 395.2 1172.1 398.5 1172.5 402.2"/>
<path d="M1178.7 359.5 1175.5 362.4 1173.2 365.2 1168.6 366.6 1165.3 367.7"/>
<path d="M1227 378.1 1226 381.1 1224 384.8 1223.5 387.9 1223.4 391.1 1224.9 394.5 1225.8 397.9"/>
<path d="M1084.8 395.5 1088.3 394.7 1092 394.2 1094.5 393.5 1097.9 392.8 1101.3 392.2 1104.8 390.6 1107.2 390.4"/>
<path d="M1109.9 365.3 1109.4 368.4 1108.2 371.9 1108 374.9 1107.2 378.3 1106.2 380.8 1106.1 384.6 1105.3 388.3"/>
<path d="M460.1 409.5 463.5 410.9 466.8 412.6 469.5 412.8 472.8 414.3 476.3 415.5 479.3 415.7 482.4 416.7 484.8 417.5 488.5 418.7 491.6 420.6 495.6 421.8 498.2 423.5 501 424.5 504.3 425.3"/>
<path d="M510.4 424.6 513.3 426.6 516.8 428.1 519.6 430.6 522.7 432.5 526.4 433.6 529.6 436.3 532.5 438.1 535.4 439.6 538.3 441.2 541.7 441.2 544.2 442.8 547.5 444 550.1 444.4 553.2 446.4 555.4 448.3 557.8 449.5"/>
<path d="M514.1 524.4 513.9 521.6 513.4 517.9 512.7 515.4 510.8 510.8"/>
<path d="M514.1 524.4 515.4 527.5 516.5 530 517.6 532.7 518.4 536.9 519.8 540.7 519.8 544.8 518.2 547.2 516.6 550.5 515.4 553.3 512.5 554.4 509 555.8 505.8 557.8 503.1 560.2 501.6 562.5 500.1 565 497.4 567.8 499.9 570.1 502.4 572.3 505.1 574.9"/>
<path d="M526.9 544.5 530.8 545.3 534.2 545.9 537.5 546.4 540.3 547.6 543.4 548.5 546.4 549.7 550.1 551.5 552.9 552.3 555.9 554.8 559.7 555.7 561.9 557.1 565.6 558.5 567.9 560.6"/>
<path d="M440 542.7 443 544.6 447 546.2 449.8 547.8 453.9 549.9 456.3 551.1 460.2 552.9 462.5 555.8 463.4 557.6 465.4 560 467.6 562.3"/>
<path d="M515.4 577.9 519 579.7 522.2 580.9 524.6 581.4 528.1 583.3 531.1 583.9 533.4 584.1 536.3 585.9 539.5 586.4 542.5 586.8 545 588.4 549.1 588.6 551.4 588.4 554.2 589.2 557.7 588.6 561 589 564 589.2 567.2 588.2 569.8 588.4 572.9 588.3 577 588.2 580.1 588.2 583.1 588.3 586.8 589.4 590.1 590 592.9 591.7 596.1 592.7"/>
<path d="M625.9 402 626.5 405.5 626.8 408.4 626.9 411.1 627.3 415.1 628.3 418.5 629.3 420.9 630.6 425.1"/>
<path d="M621.2 467.1 622.9 470 624.1 472.8 625.6 474.8 629.6 475.7 632.7 476.1 636.2 477.2"/>
<path d="M640 449.7 637.5 450.9 634 451.7 630.7 451.8 627.5 451.6 624.7 450.2 620.5 449.8"/>
<path d="M477.7 572.9 480.1 575.2 482.9 576.4 485.2 578.8 487.3 581.1 490 582.9 491.7 586.8 494 589.4 495.6 592.9"/>
<path d="M687.7 418.3 690.6 420.5 694.4 422.5 697.3 424.9 700.7 425.2 704.1 425.5 706.3 425.5 709.8 425.4 713 426 715.7 427.8 718.7 428.7 722.4 430.6 725.7 432.7 727.7 434.4 730.9 435.9 733.1 437.4 735.8 439.9"/>
<path d="M640 448.5 642.8 449.2 645.7 449.5 649.2 449.6 652.3 449.2 654.6 449.7 658.2 450.4 661.2 451 663.6 451.6 667.4 451.9 670.3 452 673.2 454.3 676.9 456.6 679.3 458.1 682.8 459.7 686 461.1 688.6 461.8 692.1 463.4 695.4 465.3"/>
<path d="M640 461 643.9 462.2 646.8 464 650.4 465.2 653.1 466.9 656.8 468.2 660.5 469.8 663.9 471.6 666.5 473 669.8 475.1"/>
<path d="M788.2 402 789.8 405.6 790.5 408.6 792.3 411.8 792.8 414.8 796.3 416.5 799.8 418 803.6 419.9 804.2 422.2 805.7 425.5 805.8 429.5 807.5 432.1"/>
<path d="M820.9 402 823.5 404.8 824.7 407.9 826.7 410.2 830.6 412.2 833.4 413.5 836.9 415.8 839.9 417.5"/>
<path d="M745.5 454.8 748.9 454.3 751.6 454.1 754.1 453.7 757.4 453.3 760.1 452.7 764 451.7 766.7 451.9 770 450.5 772.8 450.3 775.6 450.3 779.8 450.7 783.2 450.3 787.5 450.7 790.9 451.2 793.7 451.2 796.9 451 799.7 449.9 802.9 449.9 805.4 449.9 808.6 449.4 811.5 448.9 814.4 448.7 818.2 448.3 820.4 448 823.6 450.1 827 451.1 830.9 452.1 833.2 453.5 836.8 455.2 839.7 456"/>
<path d="M740.5 477.4 740.3 480.5 739.7 483.8 739.2 487.1 739 490 738.1 493 736.9 496.5 735.9 499.2 735.1 502.4"/>
<path d="M692.8 484.9 696.3 486.4 699.2 488.3 702.6 490.5 705 492.6 707.9 493.3 710.8 494.6 713.8 495.6 717.3 497.1 720.1 498.4 722.7 499.2"/>
<path d="M702.8 538.2 705.6 540.5 708.3 542 710.4 543.7 712.5 545 714.5 549.3 715.6 552.3 719 554.3 722.4 556.4 727.5 556.7 732 557.2 735.6 557.3 738.9 556.9 741.5 557.2 745.7 557.6 748.9 558.3 751.3 559.5 755 561.1 757.2 561.7 760.5 563.3 763.6 562.6 767.2 562.3 769.7 561.1 772.5 560.7 776.1 560.2 778.6 561.7 781.5 562.4 784.4 563.7 788.1 565.7 790.9 566.5 794.5 566.1 797.8 566.5 801.1 565.8 804.4 566.1 807.4 565.3 811.5 566.5 814 568 817.1 569.1 821.1 570.3 824 571.7 827 571.6 830.2 572.3 834 573.3 837.3 574.1 840 575"/>
<path d="M757.6 525.1 760 526.4 762.8 528.3 765.9 529.9 768.1 530.7 770.9 532.5 773.5 535 777.2 536.7 780.4 538.9 783.4 540 787.2 541.7 790.1 542.2 793.2 543.6 796.3 544.9 799.1 546.4 802.1 546.2 804.9 546.7 807.5 548.2 810.7 548.8 813.4 548.6 816.3 550.5 819.4 551.1 823.3 552.1 825.9 553"/>
<path d="M732.7 562.8 733.3 566.1 734.6 569.3 735.1 573.4 738.7 574.4 742.5 576.5 745.3 578 748.9 579.1 751.8 580 755.3 581.4 758.6 583.1 761.1 582.7 764.8 582 768.1 581.3 771 580.5"/>
<path d="M725.4 562.8 723.5 566.2 721.9 569.7 720.6 572.4 722.8 575.4 723.7 578.2 725.8 580.4 728.1 582.6 730.4 584.1 732.6 585.7 735.9 588.4 734 590.9 731.9 595.1 730.5 598.2"/>
<path d="M827.9 498.2 830.7 499.9 833.1 502.8 836.2 503.9 839.6 505"/>
<path d="M640 562.8 643 561.2 645.3 558.6 648 556.6 650 554.5 652.2 552.5 655.6 551.3 658.3 551.1 661.1 549.9 664.7 549.1 667.9 547.9 671.1 548 674.4 549.5 677.1 549.1 679.9 550.7 682.8 551.5 686.3 552.5"/>
<path d="M656.8 581.1 660.4 579.8 664.1 579 668 578 670.6 579.9 673.4 581.5 676.5 583"/>
<path d="M840 419.6 843.5 419.1 845.9 418.7 848.6 418.8 851.6 418.5 854.7 418.6 858 419.2 861.2 420 864.5 420.9 867.1 420.9 870.2 422.1 873.1 423 877.1 423.7 880.5 424.7 884.1 425.5 886.9 426.7 890.3 427.3 893.5 427.8 896.8 427.4 899.3 427.7 902.2 428.1 905.1 428.1 908.1 429.4 911.2 430.9 913.9 431.4 917.6 431.9 919.9 433.7 922.7 434.6 925.6 437.2 928.4 438.6 930.5 440.7 933 441.3 935.8 443.8 937.6 445.3 940.1 447.6 942.8 449.4 945.2 450.7 948.2 453 950.2 454.9 952.6 456.8 954.6 459 956.8 461.6 959.5 463.7 961.7 465.5 963.2 468 965.2 469.9 967.9 471.8 970.2 474.5 973.4 476.3 975.2 478.1 978.3 480.7 980.6 482.4 982.7 485.3 984.4 487 985.6 490.5 987.7 492.4 988.8 495.4 990.7 497.4 993 500.1 995.3 502.4 997.9 504.1 1000.7 506.7 1004.3 507 1006.6 506.8 1009.7 507.5 1012.9 507.5 1015.7 507.4 1019.2 506.7 1022 506.9 1025.4 506.3 1028.9 505.9"/>
<path d="M945.5 402 948.1 403.3 950.2 405.1 952.6 407.4 956.1 408.2 958.3 410.3 960.9 411.8 964 413.1 966.3 415.2 969.2 416.6 972.8 418.5 975.4 420 978.6 422.4 980.5 424.9 983.7 427.3 986 430.2 988.6 432.5 990 435.6 991.5 437.9 992.9 441 994.4 444.1 995.6 447 997.6 449.8 1000 452.2 1001.4 454.5 1003.7 457.7 1005.9 460.1 1008.7 462.1 1011.4 464.5 1013.7 466.9 1015.6 469.1 1019.5 468.7 1023.8 469.4"/>
<path d="M855.1 478.1 855.7 474.8 856.4 472.1 856.1 469.1 856.6 465.7 857.8 462 861.3 460.3 864.4 457.9 867.7 456"/>
<path d="M840 505 843 507.3 845.6 509.3 847 510.3 850 512.6 853.3 514.5 856.6 515.6 858.9 516.7 861.6 518.7 865.5 519.8"/>
<path d="M840 550.2 843.3 550.2 846.3 549.5 849.4 548.9 852.4 548.1 854.6 547.6 858 546.7 861.5 548.3 864.1 549.4 867.2 550.9 869.8 551.7 872.6 553.2 875.6 553.7 878.8 554.7 881.2 555.6 884 556.3 887.4 557.2 890 558 893.1 558.8 896 559.7 899.1 561.3 902 561.3 905 563.3 908.6 561.9 912.2 559.8 915 558.6"/>
<path d="M953.8 549.2 952.5 546.5 950.9 543.4 949 540.1 948.1 537.3 945.4 536.1 943.4 534.5 940.4 532.9 941.3 530.2 942.2 526.6 943.5 523.4 944.9 520.5 945.8 518 947 515 947.2 511 948.9 508.4 949.4 505.1 951.1 502.3 953.4 497.1"/>
<path d="M953.8 549.2 951.2 551.4 948.2 553.3 945.1 554.8 942.4 555.5 939.1 556.6 936.5 557.4 932.9 558 929.4 559.1 926 559.4 922.9 560 925 562.6 926.5 565.7 928.4 568.2 930.1 569.8 933.3 572.8 935.3 575"/>
<path d="M953.8 549.2 956 551.3 957.3 553.6 960.2 555.5 961.8 558.2 963.9 560.2 965.8 563 966.5 565.4 967.4 568.3 969.1 571.4 969.4 575.3 971.1 577.9 972.3 581.6 973.8 584.6 975.6 587.9"/>
<path d="M865.1 567.8 863.4 571.1 861.9 574.4 860.4 577.8 857.8 579.3 855.5 582.1 853.1 583 849.6 585.5 847.3 587.3 843.6 588.7 840.4 589.9"/>
<path d="M892.8 602 893.9 599.2 895.7 596.3 897.3 593.9 899.2 590.5 900.5 588.4 903 586.4 905.5 583.6 908.4 582.2 910.5 580.4 912.7 577.9 916.6 576.5 919.9 574.6 923 573.2 925.8 573.9 929.6 575.8 932.9 576.6 935.3 577.9"/>
<path d="M1040.8 473.6 1041.8 470 1042.6 466.5 1043.3 463.6 1043.9 460 1045 457.1 1047.8 455 1051 453.8 1054.2 452.1 1057.2 450.1 1060.2 449 1063.6 449.4 1066.5 448.7 1069.7 448"/>
<path d="M1042.1 491.2 1045.5 491.2 1048.5 491 1050.9 490.6 1054.2 490 1056.8 489.9 1060.6 487.9 1063.5 486.3 1067 483.9 1070.2 482.4 1073.1 482.6 1075.8 482.7 1078.6 482.3 1081.8 482.6 1084.3 482.2 1087 484.6 1088.4 486.9 1090.1 489.8 1093.3 491.6 1097.2 493.3 1096.3 496.8 1095.1 500.1 1094.4 502.6 1096.3 506.1 1097.3 509.7 1101 511 1103.6 512 1106.9 513.1"/>
<path d="M1140 510 1137.6 512.2 1135.2 513.2 1132.1 515 1129.2 515.2 1126.4 515.6 1123 516.4 1120.8 519.6 1118.8 521.9 1117.2 524.7 1114 526.3 1109.9 525.9"/>
<path d="M1140 510 1142.9 512.5 1145 514.6 1147.7 517.7 1149.7 519.9 1152.9 521.8 1155.4 523.5 1157.9 525.6 1159.6 527.6 1161.5 530.3 1164.1 533.4 1165.5 537.3 1167.5 539.8 1169.9 543.2 1171.4 544.9 1173.9 547.6 1174.7 550.2 1176.1 553.2 1176.4 556 1177.4 559.8 1177.2 562.9"/>
<path d="M1077.2 447.2 1081 446.8 1083.7 447.4 1087.7 446.7"/>
<path d="M1151.3 469.8 1154.2 467.6 1156.6 464.3 1160 462.6 1162 460.3 1163.5 456.9 1166.3 454.9 1167.4 452.5 1169.8 450.3"/>
<path d="M1185.3 439.7 1188.6 438.5 1191.4 437.5 1194.9 436 1198.2 435 1200.6 433.9 1203.9 432.2 1207 431.8"/>
<path d="M1172.7 402 1174.6 405.5 1176.1 409 1177.7 412.2 1181.8 413 1185.2 414.8"/>
<path d="M1202.9 402 1203.5 405 1204.2 408.3 1205.3 412.6 1205.6 414.8 1206.2 418.8 1206.2 422.1 1207 425.1 1206.4 428.1 1207.2 431.5"/>
<path d="M1207.9 474.9 1210.4 472.6 1213.4 470.7 1215.8 470.9 1218.8 471.5 1222.9 472.2 1225 472.8 1228.5 475.3 1231.5 477"/>
<path d="M1232 502.5 1230.3 506.1 1229.6 508.9 1228.3 513.1 1229.3 516.3 1230.5 519.1 1232.2 522.4"/>
<path d="M1092.3 527.6 1096 529.1 1098.7 530.4 1102.5 530.9 1105.6 531.5 1108.3 531.9 1112 533.4 1115.9 534.5 1119.3 535.9 1122.6 537.3 1125.4 537.9 1128.8 538.1 1131.8 538.1 1134.4 538.2 1137.9 539.1 1140.8 538.7 1144 539.5 1146.8 539.6 1149.8 540.1"/>
<path d="M1067.2 520.1 1069.3 521.6 1071.9 522.9 1074.4 524.9 1073.4 528.7 1071.7 532.2 1070.1 535.2 1068.5 537.8 1066.8 540.4 1065.2 543.2 1067.2 545.3 1069.4 547.7 1072.5 550.2 1074.8 550.8 1077.6 552 1081.1 552.1"/>
<path d="M1057.9 558 1055.2 559.4 1052.2 561.7 1050 563 1047.2 564.9 1044.3 567.4 1041.9 570.5"/>
<path d="M465.9 611.3 469 612.4 471.9 613.6 474.5 613.9 477.7 615.1 481 616.6 483.6 617.4 487 618.7 490.6 619.6 492.9 619.8 496.6 620.8 499 621.7 502.4 621.8 505.5 622.6 507.5 620.2 509.5 617.9 510.6 615.1 513.4 612.5 515.4 610.3 517.9 607.3 520.4 604.4 523.1 601.6 526.7 598.5"/>
<path d="M465.1 624.2 467.8 626 469.8 628.4 472.4 629.7 474.9 631.7 477.9 633.5 479.9 636.1 483.2 638 485.4 640.5 487.9 641.8 489.6 644.8 490.8 648.5 492.2 651.3 493.9 654.7 493.7 657.8 492.9 660.1 492.3 663.3 491.3 666.7 490.6 669.3"/>
<path d="M520.4 614.1 521 617.4 521.8 620.4 522.8 624.5 525.6 624.9 529.5 625.4 532.2 626.1 535.4 627.2 538.3 626.6 542.4 625.9 545.5 626.3 548.9 626.7 551.7 626.1 555 626.4 558.9 626 562.4 625.3 565.1 625.8 569.2 625.2 572.4 624.8 576.2 623.8 579.6 623.3 583.3 623.4 586.3 621.6 589.5 620.8 592.2 620.2 595.3 619.6 597.4 619.3 601.3 617.5 603.4 615.9 607.1 614.4 609.3 612.6 612.6 611.2 616.2 608.9"/>
<path d="M520.4 640.5 523.8 640.7 527.5 641.8 530.2 641.8 533.7 640.5 536.9 640.5 541 639 543.2 639 546.1 637.7 549.6 637.3 552.2 637.4 555.7 636.7 557.9 636 561.2 634 564.2 633.6 567.2 631.9 570.6 631.8 574.1 631 577.3 629.7 580.2 629.2 584.2 628.3 586.8 627.2 589.8 627.1 592.9 626.5 595.7 625.5 598.6 625.3 602 625.2 604.3 624.3 608.3 624.1 611.3 624.6 614.4 624.3 617 624 620.1 623.4 623.6 622.2 626.9 622.2 629.8 621.6 633 621.6"/>
<path d="M564.9 684.2 566.5 681.4 567.4 678.1 568.2 675.4 569.4 672.1 569.9 668.3 571.4 665.2 571.9 662.5 572.7 659.1 575.5 657 576.6 654.6 579.1 651.4 581.1 649.7 583 647.8 586.2 645.2 587.8 643.4 591.1 641.5 594.1 640.9 597.4 640.8 599.8 639.5 603.6 639.7 606.2 637.4 609.3 636.6 612 635.3"/>
<path d="M564.9 684.2 564.2 687.1 563 690.7 562.2 693.7 561.9 696.9 560.1 699.5 559.1 702.6 558.6 705.3 557.4 709.5 555.4 712.2"/>
<path d="M606.8 656.1 608.2 652.9 608.9 650.7 609.9 647.4 611.1 644.2 611.8 641.8 611.9 637.9 612.1 635.2"/>
<path d="M606.8 656.1 608.7 659.2 610.3 662.7 611.5 666.6 613 669.8 614 672.9 614.3 676 614.6 678.4 615.1 682 616.1 684.7 616.3 688.2 616.9 692.5 616.7 695.6 618.4 699.4 618.5 702 619.6 705.4 620.6 708.4 621.4 710.5 622 713.6 621.1 717.5 621.2 720.5 621.5 724 620.7 727 618.9 729 616.2 731.5 613.6 732.7 611.3 734.8 608.4 735.9 604.8 736.6 602 737.2 599.1 738.4 595.9 740.1 592.8 740.6 589.9 741.9 586.4 742.9 584.1 743.4 580.9 745 579.4 747.7 577.5 751.1 576 754.7 576.6 758.7 576.1 761.4 576.4 765.2 575.5 768.9 572.9 772.3"/>
<path d="M615.9 757.3 619 756 622.3 753.5 625.9 752.6 629.4 751.6 632.1 751 635.5 750.3"/>
<path d="M603.3 790 606.8 789.8 610.1 788.5 612.4 788.2 616 787.8 618.7 788.2 622 788.1 625.7 788.5 628.8 788.8 632 788.1 635.9 787.8 640.2 788"/>
<path d="M645 599 647.9 600.4 651 600.5 654 601.7 657.2 602.7 659.8 603.7 663.5 604.9 666.5 605.6 668.8 605.9 672.7 606.5 674.9 607.1 678.1 606.1 681.4 606.1 684.4 606 687.5 605.2 690 605.5 693.4 605.3 697.7 605.3 700.5 605.1 704 604.5 707.7 604.1 710.6 603.8 714.4 602.9 717.6 600.7 719.9 598.6 722.9 594"/>
<path d="M690 627.4 692.7 627.9 696.6 629.5 698.9 630.2 702.4 630.4 704.8 631.4 707.9 631 710.8 631 714.4 631.3 717.4 631.1 720.2 630.5 723.4 630.4 726.9 631 729 631.9 732.6 632 735.3 632.5 737.8 638 734.1 638.3 730.8 639.3 728.1 638.7"/>
<path d="M790.8 594 794.5 596.1 797.4 597.8 800.6 599"/>
<path d="M798.3 612.8 801 613.6 805 614.9 807.3 615.2 811.3 617 812.1 620.4 813 624.6 810.8 627.2 808.4 629.3 806.3 631.3 802.4 632 799.6 632.9 797.1 633 793.6 633.4 790.9 633.8 787.1 636.3 783.6 637.4 780.2 639.3 778.7 642.3 777.6 644.7 775.8 647.7 773.6 650.6 773.4 653.3 772.1 657 771.5 660.7 771.8 664.1 770.4 666.9"/>
<path d="M700.3 687 701.5 690.5 702.3 695 705.4 696.3 709.4 698 712.6 700.6 715.9 701.6 718 704 721.3 706.1 723.7 707.8 726.6 709.5 729.4 710.9 732.1 713.6 735 716.3 738.1 719.5 740 721.9 742.2 725 743.9 727.6 745.1 729.4 747.7 732.4 749 734.4 750.6 737"/>
<path d="M686.7 695.5 687.9 698.4 689.4 701.9 690.6 704.1 691.8 708.1 692.3 711.7 695.3 713.5 698.6 715.5 702.1 716.9 705 718.5 707.6 720 711.1 720.2 713.2 721 716.4 722.7 719.5 722.6 722.3 723.8 725.5 724.9"/>
<path d="M733 732.2 735.2 734.4 736.8 737.6 738.4 739.3 740.1 742.5 743.1 744.6 744.6 747.8 746.6 749.9 748.8 752 750.1 754.7 753.3 756.2 755.6 758.5 757.7 759.8 755.2 762.6 753.1 765 750.5 767.4 748.5 770.1 747.6 772.8 745.9 774.6 742.3 775.1 738.8 775.3 735.1 775.2"/>
<path d="M689 756.6 690.3 759 692.4 762.4 693.6 764.4 695.1 767 698.5 768.7 701.8 769.4 704.5 770.1 707.1 771.7 710.4 772.9 713.2 773 716.7 773.6 719.4 773.5 722.4 774.9 725.9 774.5 728.2 775.5 731.7 776.2 733.9 776.4 737.5 777.1 741 777.6"/>
<path d="M661.1 756.6 664.2 754.7 667.4 753.8 670 751.8 672.7 749.9 674.7 747.6 677.7 745.2 680.5 744.3 683.6 744.7"/>
<path d="M640 757.3 642.9 758.5 646.3 759 650.5 759.3 653.6 758.3 657.8 757.4 660.8 756.1"/>
<path d="M782 732.2 785.4 734.3 787.9 736.1 791 738.5 794.6 738.7 797.4 738.8 800.8 739.3 804.3 739.1 807 737.3 810.3 736.2 812.9 735.2 816.1 733.2 818 731.6 820.7 729.1 823.8 726.9 827.2 726.5 830.1 724.9 833 723.4 836.8 724.2 840.3 724.6"/>
<path d="M640 791.2 643 790 645.7 788.5 648.8 787.2 652.2 786.2 654.6 784.6 658.3 785.9 661.8 786.5 664.2 786.8 668.2 787.5"/>
<path d="M892.8 594 892.8 597.3 894 601.2 894.3 604.2 895.2 607.7 897.8 610.8 899 613 898.7 616.4 898.1 620.7 898.1 623.7"/>
<path d="M840 656.8 842.7 657.8 846.7 659 849.6 660.1 853 662 856 663.5 858.1 664.6 861.3 665.9 864.1 667.2 864.8 671.6 869.4 673.3 873.2 674.6"/>
<path d="M840 724.7 842.7 724.5 846.8 724.5 849.3 724.9 853.1 724.6 855.3 723.5 858 721.6 861.3 720.8 864.9 719.5 867.8 718.8 870.3 717.3 873.3 716.6 876.9 715.9 880.4 714.1 883.5 713.9 887.1 713.3 890.6 712.5 893.8 711.2 896.8 711.1 900.6 710.5 903.5 710.3 906.8 710.1 909.9 709.5"/>
<path d="M937 701.5 940.1 702.7 942.3 704.3 945.5 705.6 947.9 706.8 950.9 708.4 953.8 708.8 957.2 709.5 960.8 710.9 963.5 712.4 966.4 714.9 969.6 717.4 972.8 719.3 976.1 720.6 980.1 722.6 983.2 724.6 985.8 724 990 723.9 992.9 723.5 996 723.1 999.5 722.2 1003 720.6 1005.3 719.7 1008.8 721.3 1010.7 723.3 1013.4 725.2"/>
<path d="M939 717.4 939.6 721 940.7 723.5 941.9 726.5 942.9 730.1 944.5 732.1 946.9 734.8 948.9 736.8 950.1 740 953.2 741.9 955.5 743.2 957.9 745.3 960.5 747.5 960.8 750 960 754.1 959.7 756.2 958.9 760"/>
<path d="M990 752.3 992 755 993.8 757.2 996.5 759.8 998.4 762.6 1001.3 764.4 1003.4 765.7 1007.4 767 1009.5 767.4 1012.7 768.6 1015.8 769.6 1018.8 770.8 1021.5 770.5 1025 771 1028.4 772.3 1031.3 772.6 1034.3 775 1036.9 776.1 1040.5 778.9"/>
<path d="M990 752.3 990.5 755.3 990.5 759.2 990.8 762.5 990.8 766.8 990.8 769.8 992.2 773.5 994.5 776.9 995.9 780.2 998.9 780.8 1001.3 782.1 1004.2 784.2 1007.6 784.7 1010 786.2"/>
<path d="M898.8 784.2 900 781.5 901.4 778.3 902.9 775 906.2 774.3 908.9 773.2 911.5 772.3 915.2 771.1 917.5 769.7 921.1 770.4 923.9 770.1 926.8 770.6 930.4 771.1 933.5 769.2 937 766.8 940.6 765 942.4 767.6 944.6 771.4 945.8 774.6 947.8 777.3"/>
<path d="M1040 650.5 1036.4 650.9 1032.5 651.2 1029.9 652.3 1026.1 653.5 1022.3 654 1019.4 655.3 1016.3 657.3 1012.4 657.8 1009.3 658.9 1005.9 659.2 1003.7 661 999.5 661.1 996.1 661.2 993 662.2"/>
<path d="M990 769.9 989.8 773.3 989.9 775.6 989.3 779.1 989.6 782 988.5 785 988.6 788.4 988.3 791.1 987.7 794"/>
<path d="M1032 609.1 1034.5 609.2 1038.6 608.4 1040.9 608.6 1044.3 608.3 1047 608.1 1050.6 608 1053.3 608.8 1056.4 609.6 1059.7 610.4 1061.9 611.9 1065.7 613 1068 614.1 1070.7 616.2 1074 617.8 1077.2 619.4 1080.2 621.1 1082.4 622.8 1084.9 624.5 1086.9 626.6 1088.6 629.7 1090.8 633.3 1092.1 637.4 1094.5 640.1 1096.2 644 1098.4 647.1 1097.7 649.9 1098.3 653.5 1097.2 656.3 1097.2 659.7 1095.8 662 1094 665.1 1092.4 669.2 1091.3 672.3 1091.5 674.7 1091.6 678.2 1091.7 681.1 1092.2 684 1093.6 688.2 1095.1 691.4 1096.9 694.2 1097.3 697.6 1098.1 701 1098.9 705.2 1098.8 708.1 1100.2 711.8 1100.2 715.2 1101 718.2 1101.7 721.2 1102.6 724.2 1103.5 727 1104.7 731.2 1105.5 734.7 1106.5 738.1"/>
<path d="M1032 653 1035.1 650.9 1039.2 650.2 1041.8 648 1044.4 647.2 1047.1 646 1050.8 644.4 1053.3 643.7 1056.1 645 1059.1 647 1061.6 650 1064.9 651.9 1067.1 654.5 1068.7 657.7 1070.5 660.7 1072.3 664.3 1075.1 667.3 1078.9 669.3 1081.7 667 1084.7 666 1087.3 663.4 1089.3 661.5"/>
<path d="M1155.9 629.2 1154.7 632.5 1154 635.6 1152.2 639.2 1155.2 641.6 1157.7 644.7 1160.4 647.3 1162.4 649.2 1165.4 651.5 1168.1 654 1169.9 657 1173.1 659.4 1175 664.7"/>
<path d="M1136.8 685.2 1139.1 687.2 1141.9 690.3 1145.6 691.8 1148.3 693.4 1151.6 695.2 1155.1 697.5 1157.2 699.6 1159.4 702.1 1161.3 705 1162.8 707 1163.1 710 1164.7 713.2 1165.5 715.7 1166.6 718.9 1166.7 722.5 1168.5 724.9 1170 728.9 1171.7 732 1172.9 734.7 1174.1 738.3 1175.7 741.7 1178 745 1178.9 747.9 1180.6 751.1 1181.3 754.5 1182.9 757.1 1184.6 760.2 1187 762.5 1188.7 764.7 1190.5 767.3 1191.6 770.3 1194 771.9 1195.4 775.1"/>
<path d="M1162.7 709.6 1165.7 707.6 1168.2 706.6 1169.9 704.5 1172.4 702.7 1175.8 701.1 1177.6 699.9 1180.8 697 1183.4 694.9 1185.6 691.9 1184.5 688.5 1183.9 685.3 1183.2 681.5"/>
<path d="M1172.7 709.6 1174.5 711.7 1176 714.5 1178.8 717.2 1180.3 719.3 1181.8 722.3 1183 726 1183.9 728.6 1185.5 732.2 1186.8 734.2 1188.8 737.2 1191.4 740 1192.4 742"/>
<path d="M1195.3 627.9 1196.4 630.2 1198.3 633.4 1199.1 636.5 1200.8 639.3 1200.7 642 1201.3 645.5 1202.5 648.3 1202.5 651.3 1202.8 655.1 1201.9 659.6"/>
<path d="M1219.2 594 1217.9 597.4 1216.1 601.1 1214.9 604.6 1213.9 607.1 1212 610.3 1210.4 614.1 1213.3 618.7"/>
<path d="M1223 711.1 1221.4 713.8 1220.7 716.5 1219.5 719.3 1217.7 722.4 1217.2 724.6 1217.2 727.9 1216.1 731.6 1216.1 734.2 1215.1 737 1215.1 741.2 1214.5 743.7 1213.7 747.5 1213.4 751.6 1212.4 754.3 1212.2 757.7 1211.9 760.3 1211 763.4 1210.6 767.3 1210.4 769.6 1211.6 773.4 1213.7 776.9 1215.7 780.3 1217.5 782.4 1219.3 785.1 1219.9 787.5"/>
<path d="M1232 666.9 1228.9 669 1225.9 671.9 1223.2 674.4 1220.8 678 1219.7 680.8 1217.8 684.8 1215.7 687.5 1213.3 690"/>
<path d="M1195.3 694.5 1198.6 694.6 1201.7 695.5 1204.4 696.6 1208.2 696.8 1211.4 696.4 1214.9 695.4 1218.1 694.9"/>
<path d="M1056.6 722.4 1059.5 723.8 1061.9 725.9 1065.1 726.8 1066.6 729.3 1068.1 732.5 1069.9 734.8 1069.3 738.7 1069.2 744 1070.2 747.3 1071.1 751.3 1072.3 754.4 1074.7 756.3 1076.7 757.9 1080 760.2 1082.1 761.5 1084.8 763.3 1087.6 765.4 1088.7 768.6 1091 772.1 1092.4 774.7 1092.3 777.7 1093.3 780.9 1093.7 784.1 1094.1 787.7 1093.9 791.1 1094.7 793.8"/>
<path d="M1081 745.3 1082.2 748.4 1084.4 751.8 1086.4 754.7 1087.9 758.4 1090.5 761.7 1092.1 764.7"/>
<path d="M1134.3 752.3 1135.3 755.2 1136.4 758.1 1136.3 762.1 1137.5 764.4 1139.1 767.9 1140.4 771.3 1140.9 774.9 1142.5 778.7 1142.7 782.2 1144.2 785.1 1145 790.1 1146.1 794.4"/>
<path d="M1160.9 770.4 1163.7 771.1 1167.2 771.7 1169.4 772.5 1173.1 773.7 1176.4 775.3 1179.4 777 1182.7 778.8 1185.5 779.6 1189.1 782 1191.7 783.1 1195.8 785.3 1197.1 787.6 1199.1 791.5 1200.6 793.6"/>
<path d="M1154.9 778.2 1156.2 781.3 1158.1 784.6 1159.5 787.9 1161.3 790.6 1163.1 793.7"/>
<path d="M1232 684.5 1231.3 688 1231.6 690.2 1231.5 693.5 1231.2 696.6 1230.1 699.1"/>
</g>
<g fill="none" stroke="#727272" stroke-width="0.75" stroke-linejoin="round">
<path d="M481.5 2 479.8 5.9 478.9 8.5 477.5 12.2 477.6 16.2 477.7 20.4 476.3 24.1 475.1 26.8 473.4 29.7 472.8 32.4 472.5 36 471.5 39.1 471.4 42 471.5 46.2 471.8 49.5 471.9 52.3 471 56.3 472.4 59.8 472.4 62.3 473.4 66.5 475.3 68.4 477.8 70.6 479.6 72.5 483 74.6 484.4 76.7"/>
<path d="M484.7 76.9 481.2 74.8 478 73.7 474.5 75.4 473.4 78.5 472.2 81.4 471.1 85.2 470.5 88 470 90.6 470 94.8 469.7 97.7 469.7 100.5 468.7 103.5 468.3 107 467.5 109.5 470.2 115.1 473.8 116.9 478 118.6 480.8 120.9 483.3 123.2 485.3 125.8"/>
<path d="M485.7 126.4 483.4 125.1 480.8 123.8 477.2 121.7 474.2 120.6 470.8 120.5 465.8 122.6 466.4 127.1 465.2 130.4 466 134.4 464.7 137.1 464.9 140.6 466.2 143.2 466.6 147.2 466.5 149.3 466.7 152.2 468.8 155.5 470.9 158.8 472.5 162.1 476.1 162 478.9 161.3 482.8 160.4 485 163.5 488.2 165 489.7 168.8 491.4 173.2"/>
<path d="M491 172.9 488 170.8 484.7 168.8 480.9 167 478.1 164.4 474.4 163.5 471.2 163 467.6 164.4 463.6 167 461.5 169 459.2 172.2 457.8 175.9 456.3 178.2 455 180.7 452.6 184.3 451.4 187.2 449.1 190.1 446.9 192.9 444.9 196.9 442.9 198.3 440.2 200.6"/>
<path d="M485.7 126.4 488.4 124.6 491.1 122.7 494 121.8 498.4 121.5 501.8 120.4 504.9 120 509.2 120.6 511.9 121.3 515.3 122.4 517.5 123.7 520.9 126.2 522.3 127.4 525.6 130.7 529.4 132.1 534.6 131 539.8 129.1 542.6 132.6 539.6 137.3 542.4 140.2 545.6 143.1 548.8 144.4 551.5 146.5 553.9 147.9 557.8 150.3 560.9 152.6 562 155.8 561.7 159 562.9 162.6 567.5 165.2 570.5 167.1 574 167.6 577.7 167.3 580.4 162.6 583.8 162.2 587.4 161.8 591.3 161 594 162.9 597.5 163.7 599.4 160.6 603.1 158.7 605.7 156.8 608.3 159.4 610.8 163 616.2 161.2 619.9 159.1 623.4 157.8 625.4 160 628.5 161.1 631.4 162.3 633.7 164.5 636.6 164.9 640 166.4"/>
<path d="M640 175.4 637 175.5 634 175.2 629.2 177.1 625.6 178.2 623.2 179.9 621.1 182.4 618.7 185.8 616.7 187.5 618.5 191.9 620.9 195.6 623.9 196.3 627.9 197 630.5 198.9 634.4 197.3 636.8 196.7 640.6 195.1"/>
<path d="M613.4 20.8 615.4 24.3 618.5 26.6 620.6 29.2 623.6 31.8 627.2 34.2 630.1 33.2 634.2 31 636.7 29.5 639.7 27.6"/>
<path d="M682.7 2 685.6 4.9 687.6 8 690.4 10.3 693.3 13.8 696.5 15.7 698.4 17.8 701.7 20.7 703.2 22.4 705.6 25.1 708 26.5"/>
<path d="M758.1 2 759.9 5.4 762.4 8.8 764.1 10.9 765.1 14.5 767.1 16.8 770.1 19.8 771.5 22.2 773.8 24.5 775.3 27.5 774.8 30.7 774.4 35.3 775 37.8 776.2 41.2 776.8 44.1 777.8 47 778.8 49.9 778.9 53.3 779.8 55.9 780.2 59.9 780.4 61.8 781.4 66.2 782 69.5 782.3 74.2 784.9 75.2 788.3 76.1 791.3 77.4 794.3 79.5 797.7 81.2 801.1 83.2 804.5 81.6 808.4 80.5 810.9 77.2 813.3 75.5 816.8 75 819.9 73.9 823.4 77.7 822.2 80.7 820.5 84.7 824.3 83.6 827.3 84.2 831.1 84.6 834.4 83.7 837 82.1 839.4 81.3"/>
<path d="M707.8 27.1 705.2 29.9 703.4 32.7 700.2 33.3 696.4 35.4 693.5 36.9 691.3 39.9 687.6 42.3 684.7 44 681.1 46.4 679.9 50.8 685.2 50.3 686.1 44.7 688.3 42.5 689.9 39.7 693.7 39.9 697.9 40.2 701.3 40.9 704.2 43.1 706.6 46.6 703.1 48 700.5 51.1 697.6 53.8 694.3 57.9 695.3 61.4 696.9 64.8 695.7 68.6 694.1 72.7 697.7 72.9 701.2 73.3 704.3 73.5 707.9 74.2 708.5 77.4 709 82.3 712.5 81.6 715.7 80.2 718.5 80.9 721.7 81 724.4 82.2 728 81.8 730.7 85.5 734.3 89.1 733.7 91.9 732.5 94 731.1 96.9 734.3 97.9 737.5 98.9 741.4 95.6 742.6 98.4 743.6 102.8 739 103.5 735.7 104.5 732.6 106.8 730 109 727.9 111.9 728.3 113.9 729.5 117.4 730.2 119.6 732.4 122.3 733.7 125.5 735.9 128.1 738.3 130.6 740.5 133 742.7 138 738.9 140.5 739.4 142.9 740.1 146 744.8 147.6 748.1 147.2 751.8 148.6 754.2 149.7 757.6 150.3 759.3 152.2 761.6 155.7 762.6 157.6 759.9 160.9 756.5 162.6 757.1 166.3 758 169.8 756.6 172.5 754.4 175.7 752.5 177.7 748.9 177.2 745.1 176 741.7 175 743.1 178.7 744.3 182.5 746.1 185.8 750.2 188.2 751 192 750 194.8 751.2 198.1 750.4 202.3"/>
<path d="M640 185.4 643.4 184.2 647.1 184.5 649.5 187.4 652.5 189.6 654.6 192.5 658.5 194.2 661.3 195 665 195.6 667.9 193.2 672.3 191.2 675.3 189.6 678.1 189.4 681.6 188.7 685.1 189.1 687.9 192.5 690.6 195.3 689.5 199 688.1 201.5"/>
<path d="M741.8 175.4 738.7 177.6 735.4 178.7 733.4 179.9 731.6 184.6 730.5 188.3 733.4 190.6 735.2 193.5 734.5 196.5 733.7 199.6 732.5 202.5"/>
<path d="M840 83.7 842.8 85.2 844.9 86.8 846.3 90.9 848.1 94.6 850.3 97.8 850 100.8 850.9 103.7 851.3 107.1 850.5 110 851.8 112.1 851.4 116.5 850.4 119.6 850.1 123 851.7 125.1 853.2 127.5 855.2 130.4 858.3 129.1 861.2 128.2 864.1 126.3 867.7 125.4 870.3 125.7 874.4 125.1 877.1 124.4 881.4 125.1 883.8 126.6 888.2 127.9 891.5 126.8 893.9 126 897.7 124.8 901.9 126.1 904.9 127 908.8 125.3 912.2 123.3 915.2 121.8 917.5 125.1 920.5 126.9 922.5 130.4 925.1 132.8 926.6 134.6 929.5 137.4 933.2 138.9 934.5 141.9 935.3 145.4 936.8 149 938.5 145.6 940 141.8 942.4 143.2 945.8 145.2 948.3 146.6 949.1 149.5 951.1 153.4 947.7 155.4 945.9 159.5 943.8 162.5 942.2 165 940.6 168.2 938.8 171.3 938.5 174.7 936.9 178 938.5 181.4 940.9 184 942.9 185.4 945.8 188 948.1 189.6 948.7 191.8 949.6 195.7 950.3 198.5 950.8 202.1"/>
<path d="M1037 202 1038.6 200 1040.7 196.2 1042.9 194.2 1046.9 190.7 1049.9 188.3 1051.7 185.2 1054 182.8 1055.8 180.1 1057.6 178.4 1058.8 175.7 1060.7 172.5 1063.3 175.8 1064.7 178.3 1068.2 176.5 1071.3 176.4 1072.5 179.1 1074.2 181.4 1072.7 184.5 1071.1 187.5 1071.3 191.2 1071.8 194 1069.9 196.7 1066.8 198.9 1064.2 201.9"/>
<path d="M447 207 450.1 210.1 452 212.5 455.2 214.7 458 217.5 460.2 219.3 463.1 222.7 464.7 224.5 466.7 227.5 469.1 229.5 471.1 232.6 472.7 234.9 474.8 237 478.3 238.6 479.7 240.7 482.5 242.8 485.4 244.2 487.4 246.9 490.4 248.9 492.6 252 493.6 255.6 494.5 260.3 496.2 263.3 496.4 267.2 497.9 271.1 499.4 274.6 500.3 277.2 501.6 281.3 503.7 285 505.6 287.6 507.8 290.2 502.7 289.9 501.2 294.3 500.5 297.5 498.5 300.6 497.1 302.1 493.4 305.5 490.1 307.3 492.2 312.3 495.8 311.1 498.2 309.7 502.1 309.2 501.1 311.8 500.3 314.9 498.2 317.9 495.8 319.8 494.4 322.4 497 327.1 493.9 330.3 491.4 333 493.9 335.7 495 339.4 491.6 342.3 493.3 345.3 494.7 347.4 497.1 350.4 497.8 353.5 498.3 357 498.6 360.2 503 359.9 507.1 360.2 507.3 365.8 505.6 368.4 502.6 370.8 500.5 373 496.1 375.5 493.6 378 493.1 380.7 493.4 384.3 492.2 388.1 491.7 389.1"/>
<path d="M507.8 289.9 510.3 291.4 513.3 294.5 515.8 296 516.5 298.9 516.5 302.2 517.4 305.5 521.3 306 525 305.6 528.1 305.9 530.9 304.1 533.5 303.3 535.8 301 538.4 303.6 540.8 305.1 543.6 305 547 304.3 551 303.8 552.9 306.6 555.9 309 558.4 311.2 561.4 311.1 565.1 310 568.6 310.2 571.4 309.3 574.5 308.9 577.7 307.5 581.1 307 584.5 307.3 587.1 307.7 590.3 307.1 593.8 308.4 597.5 309.7 600.7 310.3 603.8 311.8 606.1 313.7 608.4 315.6 610.4 317.2 615.5 320.1 618.7 320.7 623 320.7 626.5 321.9 629 324 630.5 326.1 633.9 329.1 636.8 326.4 639.8 324.7"/>
<path d="M440 375.4 443.4 376.4 445.9 376.8 449.7 376.7 452.8 377.5 455.3 379.1 458.4 379.7 462.4 379.6 464.7 380.8 467.3 382.3 470.6 384.1 472.2 386.4 475.7 387.4 479 388.3 482.4 390.1 485.2 389.9 488.7 390.2 491.4 389.3 493.8 392.3 496.2 394.7 497.5 398.1 501.6 402.4"/>
<path d="M684 209.5 687 207.3 690.6 206 693.4 204.8 696.5 203.8 699.3 202.9 701.8 206.1 703.9 208 704.4 212.5 705.3 215.9 708.7 214.1 713.3 212.1 715.7 211.8 719.6 210.8 722.4 210.4 726.3 208.9 730.4 206.6 734 206.7 736.9 207.2 739.7 207.6 742.7 208.1 745.2 207.8 747.6 209.5 750.1 211.6 753.2 213.3 755.9 215.4 760.3 217.1 763.6 219.5 761.7 222.4 759.8 226.1 762 228.1 765.8 230 764.4 232.3 762.6 234.1 760.3 237.3 758.3 239.4 755.9 242.3 753.7 245.3 752 249 750.4 252.3 748.5 254.9 747.6 258.3 745.9 261.4 743.9 265.2 743.4 268.4 742.1 271.3 740.7 275.1 742.5 278.3 744.9 282.3 744.2 285.7 742.4 289.8 745.1 292.9 747.9 294.6 747.8 298.5 747.8 302.3 749.1 305.1 751.1 307.6 753.1 310.5 751.9 313.7 750.9 317 749 321.3 748.4 325 750.3 327.4 751.5 330.1 752.7 333.3 753.9 336 754.8 339.6 755.2 342.3 754.9 345.5 754.4 349.9 754.8 352.7 752 355.4 750.6 358.1 748.1 360.2 749.4 364.5 751 367.5 751.3 371.4 753.5 375 756 377.7 759.5 380 756.4 381.6 753 383.3 750.5 384.8 748.7 389.3 747.6 393.3 748.1 396.5 747.5 398.9 748 402.6"/>
<path d="M640 326.4 643.1 328.3 644.7 331.1 647.9 332.6 651.3 334.1 655 335.6 657.4 337.6 660.2 340.5 662.2 342.9 665 340.4 666.8 337.3 667.9 335.5 669.9 332.9 674.2 331 677.6 329.6 682 328.5 685.3 326.5 688.2 325.7 691.3 325.6 693.1 321.7 694.4 319.3 697.8 317.9 701.7 318.2 703.7 315.2 704.5 312 706 309.9 709.1 304.9 712 307 715.8 308.9 717.4 312.2 720.1 315 721.9 312 724.5 309.1 727.7 307.9 729.7 307.5 732.7 306.8 736.1 308.3 739.7 310.6 740.2 305.2 744.8 304.3 748.2 302.6"/>
<path d="M954.3 233.4 953.3 237.2 953.5 242.6 955.2 246 955.9 249 958.2 252.3 957.6 256 957.8 258.8 957.4 261.8 954.8 264.7 952.9 268.6 951.8 270.6 952.8 273.9 953.2 276.6 954 279.9 955.3 283.6 956.3 286.9 957.7 289.9 956.7 292.7 955.3 295.5 953.7 297 950.2 300.1 948 302.8 945.9 305.4 942.7 307.7 940.6 310.6 938.4 311.9 935.2 314.1 936.4 318.2 936.1 322.4 934.3 323 930.4 324.1 927.8 324.9 924 326.7 921.1 328.9 917.4 329.5 919.9 332.5 921.2 335.3 922.4 337.2 925 340.5 925.7 343.3 928 345.5 926.2 349.5 925.8 353.3 925.9 356.5 926.7 360 925.3 362.6 923.8 365.8 921.1 367.4 922.5 371.2 921.9 374 922.7 378.2 924.9 382.5 923.7 386.6 921.8 389.9 921.8 394.7 923 397.6 923.5 402.6"/>
<path d="M892 216.1 894.8 217.4 898.2 218.6 900.6 217 904.3 217 907.7 216.1 908.1 220.4 908.7 225.2 912.6 224.9 915 226.3 918.2 226.8 921 227.1 924.3 227.6 927.5 228.6 930.9 228.7 932.9 228.2 937 228.7 939.9 229.8 943.1 230.3 947.2 232.3 950.9 233.5 954.4 233.4 957 233 960.9 232.2 963.7 232.1 967.8 231.3 971 230.6 973.8 232.9 976.7 234.4 979.4 235.7 982.9 237.1 986.5 238.1 991.4 238.5 994.4 238 996.9 237.7 1000.2 237 1004.2 235.9 1007.6 233.5 1011.4 232.1 1014.7 230 1017.3 228.2 1020.4 225.7 1023.6 224.7 1027.7 223.4 1030.2 223 1033.9 222 1036.3 219.2 1039.9 217.1"/>
<path d="M939.5 229.4 939.3 226.1 938.8 223.7 939 219.9 938.2 216.7 939.4 215.1 941.5 211.8 942.7 210.1 944.9 207.4 946 204.4 947.5 202.5"/>
<path d="M902.8 391.7 906.4 392.6 910.7 394.4 911.8 396.5 913.9 399.1 915 402.4"/>
<path d="M922.9 387.9 926.2 387.8 929.5 388.5 932.7 389.1 935.6 388.7 938.8 389.9 942.3 391.1 945.3 391.6 948.2 393.1 951.9 393.3 954.2 394.2 958.7 395.5 960 398.9 962.6 402.1"/>
<path d="M760 219.8 762.9 219.5 766.2 218.5 770.5 219.1 773.3 217.5 776.7 216.3 779.2 214.4 782.4 213.9 786.5 214.7 789.3 214.8 793.1 216.4 795.7 215.7 799 214.3 801.9 214.6 805.5 213.9 807.8 214.1 811.6 213.9 814.1 214.4 817 215.2 820.1 216.3 822.8 213.8 825 212.4 827.8 210.9 830.8 208.1 833.2 209.2 836.6 208.7 839.3 209.9 843.2 209.6 847 210.7 850.9 212.1 852.9 210 855.1 208.3 858.1 206 860.9 207.1 864.1 207.6 867.8 208.1 871.3 208.5 874.3 209.1 877.9 210.1 881.2 211 884.9 211.1 887.6 211.9 891.4 215.6"/>
<path d="M1062.2 202 1061.4 205.6 1061.8 208.8 1062 212.6 1060.5 214.5 1059.7 218.7 1058.7 220.9 1058.2 224.7 1057.6 227.3 1059.1 229.1 1062.6 232.4 1064.9 234.5 1066.6 236.6 1070.1 240.2 1072.1 242.5 1072.9 245.2 1073.9 247.7 1074.5 250.8 1073.4 253.4 1071.7 256.5 1069.5 260.1 1069.3 263.1 1070 267.9 1073.6 269.1 1077.2 271.3 1080.7 270.2 1083.5 270 1086.6 269.8 1090.1 269.4 1092.5 271.5 1094.9 274.1 1097.8 275.7 1099.8 277.8 1101.9 279.6 1105 280.8 1107.8 282.2 1110.9 284.2 1114.4 285.4 1116.6 289.3 1119 292.4 1121.4 295.6 1125.4 298.6 1126.1 302.4 1127.7 305.5 1130.3 304.7 1133.7 304.4 1137.9 304.4 1141 304.3 1145.5 304.1 1147.8 306.2 1149.6 307.7 1153.1 310.2 1154.8 313 1157.9 314.6 1155.9 318.2 1154.7 322.3 1154.2 325.4 1156.7 323.5 1160.4 322.6 1163.3 324.2 1167.6 325 1170 326.9 1172.4 329.3 1175.2 330.9 1177.1 333.9 1179 337.8 1180.5 339.9 1181 343.4 1181.5 347 1182.4 350.1 1183.8 353.4 1185.5 356.9 1189.2 354.4 1193.3 352.4 1195.8 352.4 1199 351.6 1202.9 351.1 1206.4 350.1 1209.2 347.6 1212.8 346.3 1217.2 345 1220.9 342.7 1223.7 343 1227.8 343.6 1232.1 343.7"/>
<path d="M1037.5 202 1037.8 205 1037.5 209.5 1037.7 213 1037.4 216.5 1037.9 220 1034.2 221.4 1032.4 223.3"/>
<path d="M1167.7 325.1 1165.8 328 1164.8 330.6 1162.8 333.1 1159.9 333.3 1155.6 334.8 1152.5 335.2 1149.6 336.4 1146.3 338.1 1142.6 338.8 1139.7 338.8 1135.8 339.7 1132.5 340.3 1129.5 338.1 1127.7 336.3 1125.2 334.5 1121.7 334.6 1118.5 334.8 1117.9 339 1118 343 1118.1 346.9 1119.4 350 1117.4 353 1114.5 355.3 1113 357.4 1111.3 361.8 1109.7 365.1 1111.8 368.2 1113 370 1115.5 372.6 1116.2 376.6 1116.8 380.1 1117.6 382.8 1118.5 386.2 1119.8 390.9 1119.1 392.9 1118.6 396.6 1117.7 399 1116.8 401.8"/>
<path d="M1182.8 350.2 1183.4 353.7 1184.4 356 1184.1 359.9 1185.7 363.3 1184.4 366 1184.2 369.6 1183.2 372.9 1185.5 375.1 1187.4 378.3 1190.1 379.9 1189.3 383.8 1187.6 388.2 1183.1 385.6"/>
<path d="M1192.8 380.4 1196.2 380 1199 379.1 1201.5 378.5 1205.2 378.3 1208.4 378 1211.4 377.8 1214.2 376.2 1217.8 375.5 1220.5 375.4 1222.4 378.3 1223.3 380.8 1225.2 383.2 1228.7 385 1231.6 387.4"/>
<path d="M505.3 427.1 505.8 430.4 505 434.5 502.6 435.1 499.3 436.1 495.9 436.4 492.7 437.8 491.3 440.9 490.5 444.6 493.3 446.8 495.5 449.8 497.3 452.4 500.5 453.2 503.9 453.5 507.3 453.8 510.6 454.9 513.9 455.5 516.7 457.2 519.3 457.2 523.3 458.1 526.9 457.6 530.5 457 533.5 457.5 537.3 456.3 540.4 455.5 543.2 454.6 546.2 453.6 549.5 452.8 551.5 451.4 555.1 449.5 557.3 448.3 560.7 447.6 563.4 450.6 566.1 453.4 568.6 453.9 572.6 455.5 575.8 456.2 579 456.8 583 458.2 586.3 459.4 589.3 459.5 592.1 460.1 595.8 460.7 598.2 456.8 601.3 453.7 605.8 455.7 607.8 459.3 611 462.6 614 463 617.5 462.8 621.4 463.6 624.3 463 627.7 462.2 631.1 462.5 634 465.3 636 467.1 640.5 471.2"/>
<path d="M440 487.4 444.7 484.8 448.2 484.4 451.5 484.3 454.6 484.2 458.7 484.7 461.6 484.9 464.8 485.3 468.6 482.9 472.8 481.3 475.8 483.2 478.6 484.1 481.8 485.6 485.3 487.2 487.2 488.7 491.2 489.3 494.5 489.9 498.1 489.4 501.7 488.3 504.7 486.2 507.7 484.6 511 485.4 514.8 486.4 518.1 487.7 518.5 491.7 519 495.3 520.4 498.3 523.2 496.5 525.9 494.1 527.9 492.8 531.4 493.6 533.9 496.1 537.6 496.9 540 499.1 544.1 500.3 547 500.9 551.1 502.7 554.1 502 557.5 501.5 560.1 501.6 564.2 501 567.5 501.1 567.2 504.2 567.9 507.4 568.6 510.5 568.9 513.5 570.2 516.9 569.9 519.7 571.1 522.7 571.1 525.6 571.7 529.8 571.7 533.1 572.1 536.1 573.3 539.5 572.6 542.7 575.4 544.7 577.4 547.7 578.6 550.3 580.7 552.3 583.8 554.7 587.2 556.2 591.2 558.4 593.9 558 596.6 557.5 600.5 556.7 603.3 556.4 603.7 560.1 603.4 563.7 603.7 565.9 603.2 569.3 602.8 573.2 606 575.3 608.6 578.1 611 581 613.6 583 617.1 581.3 619.7 580.3 622.4 578.9 626.3 577.6 629.2 578.7 633.1 580.9 636.7 581.6 639.6 583.2"/>
<path d="M445 487.4 444.1 490.3 444.1 494.4 444.3 497.6 445.7 500.5 448.1 503 450.7 504.4 452.2 507.9 452.1 510.6 451.5 514 451.5 516.9 451.9 520.3 447.9 520.5 444.3 521.6 443.8 525.5 444.3 529.2 444.8 533 448.8 531.4 451.7 529.3 455 527.5 456.7 529.9 458.8 532.5 459.8 535.5 460.9 538.2 461.9 541.6 462.5 543.8 463.5 546.6 464 549.5 465 552.4 464.9 556.4 463.8 560 462.2 563.1 464.5 565.7 466 567.6 467.7 570.3 469.8 573.1 471.3 575.3 472.4 578.5 471.1 580.7 470.5 583.8 469.1 587.2 468.1 590 469.1 593 470.2 596.3 470.9 599.3 472.1 601.8"/>
<path d="M580.7 527.6 583.6 526 586.6 524.9 589.9 523.2 593.1 521.9 596.4 519.9 598.8 518.6 602.1 517.5 605.4 516.8 608.4 514.6 611.1 514.1 614.2 513.9 617.5 513.1 620.2 512.7 622.5 512.6 625.9 512.3 629.3 512.1 632.7 511.7 636 511.7 640 511.3"/>
<path d="M595.8 520.1 597.4 522.8 598.2 526.2 599 529.2 601.4 531.9 601.6 534.4 603.2 537.8 606.3 537.8 609.4 538.1 612.2 538 615.9 538.6 617.2 541.4 618.9 544.2 619.4 547.2 620.7 550.1 619 553 617.6 554.7 615.7 557.8 612.7 557.7 609.9 557.2 606.5 557.3 603.2 556.5"/>
<path d="M625.9 512.6 626 515 626.3 518 626.2 521.9 627 524.5 626.8 527.7 626 530.4 624.1 533.3 621.9 536.6 620.6 539.4"/>
<path d="M573.2 572.9 569.2 574.2 566.6 576.7 563.7 578.2 563.1 581.7 562 584.7 561.8 588 559.3 590.4 555.5 593.2 552.7 596 550.8 599 548.1 602.1"/>
<path d="M573.2 542.7 573.5 546 573.8 549.1 572.9 552.2 573.5 556.3 573.6 559.7 573.6 563 575.3 564.4 578.1 566 580.3 567.6 584 569.7 587.1 571.7 591 572.7 593.6 575.3 595.9 577.7 598.6 580 601 581.1"/>
<path d="M744.3 402 741.7 404.4 740.1 407.6 738.5 409.1 735.2 410.7 731.6 411 728 412.4 724.8 413.7 725.4 416.7 723.8 420.2 727.1 421 729.5 423.3 733.3 424.3 734.3 429 736.4 432.4 735.8 436.9 736.1 441.2 731.8 441 728.2 442.1 723.1 443.2 725.3 446.8 726.8 449.6 725.2 444.6 728.4 447.3 730.1 449.6 732.8 452.1 736.3 456.4 735.4 453.4 734.8 450.4 733.3 446.8 736.1 449.3 738.9 451 742.7 451.1 746.9 451.8 751.2 451.8 750.6 456.5 750.7 460.7 755.1 462.3 752.9 464.5 750.5 466.7 747.8 468.3 745.9 472.3 742.7 474.8"/>
<path d="M640 472.4 645 475.3 646.6 477.9 648.4 479.7 650.5 482.7 653.1 480.9 656.3 479.3 659.8 476.8 663 478.4 666.7 479.5 669.9 481.6 673.1 482.7 674.9 483.9 677.2 485.6 680.8 487.5 683.9 485.3 687.4 484.3 690.1 482.2 694.5 479.9 697.4 480.9 700 482.5 702.5 483.6 705.9 483.9 709.1 484.1 712.4 485.1 716.7 484 720 482.4 724.1 483.5 728.1 483.3 731 483.5 734.4 482.6 737.5 482.2 740 481.1 742 478 742.6 474.8 746.5 475.2 749.4 476.1 752.9 476.5 755.5 477.7 758.2 480.2 760.1 481.9 763 486.2 764 490.4 763.4 493 762.8 496.3 761.9 498.3 766 502.3 768.1 504.7 771.1 507.2 773.8 509.3 775.7 512.3 778.3 515.2 779.1 520.5 782.9 522 785.3 523.6 788.4 525.2 789.7 528.9 790.8 532.9 794.3 531 798.7 529.8 800.2 534.4 800.3 537.7 802.6 541.7 806 542.5 809.2 544 813.4 544.8 815.4 548.2 817.9 549.9 821.3 553 819.5 557.9 816.9 559 813.8 561.3 810.5 562.4 809.5 566.6 808 569.4 805.8 573.1 808.4 575 810.8 576.1 812.8 578.2 814.8 581.4 816.1 584 817.9 588.5 817.7 591.8 815.6 595.3 813.1 598.4 811 601.6"/>
<path d="M840 527.6 836.8 529 833.7 530.6 831.5 532.8 828.8 534.9 825.6 537.2 825.3 541.4 824.5 545.4 820.9 547.3 816.8 546.3 812.9 544.8"/>
<path d="M645 474.9 646.3 478.6 648 482.1 649.9 484.7 650.8 488.7 650.4 491.9 651.4 495.2 648.8 497 647.3 499.8 645.2 502.5 646.6 505.5 648.9 507.4 650.7 509.6 651.4 513.3 653.9 517.1 655.5 519.9 654.7 522.9 653.4 526.6 652.7 529.6 653 532.6 653.2 536.1 654.2 539 655 543.2 654.6 546 653.2 549.7 652.6 553.2 654 556.1 655.3 559.3 656.1 561.6 657.9 564.8 657.1 568 656.1 571.6 655.4 575 654.9 577.9 653.1 581.4 651.2 585 650.2 587.8 648.1 590.3 645.4 593.6 642.9 596 642.1 598.5 639.9 602.6"/>
<path d="M887.7 402 887.1 405.4 884 406.9 881.2 408 878 408.8 874.4 409.4 871.4 410.7 868 411.6 864.2 412.9 861.4 412.9 858.1 414.5 855.3 414.7 852 416.8 848.6 419.9 849.5 422.9 850.4 426.1 851.6 430.1 852.2 433.5 852.5 435.9 852 439.9 853.6 443.7 854.8 447.4 859.1 447.9 863.1 450.3 863.7 453.4 865.3 455.5 862.3 458.2 860.4 459.9 857.5 460.5 853.9 461.7 850.5 462.9 848.1 465.1 844.5 467 844 471.3 842.3 474.5 845.2 476.9 847.3 480.5 845.6 481.6 842.1 483.4 840 484.7"/>
<path d="M963.1 402 965.9 403.8 968.1 405.6 971.2 406.8 973.9 408.6 977.1 410 980.3 411.7 982.7 415 985.2 417.5 988.8 419.8 991.6 421.7 994.4 423.8 997.9 426.3 1002 425.3 1004.7 424 1008.1 422.8 1011.1 421.9 1014.4 421.1 1017.3 420.7 1020.9 419.3 1024 421.6 1027 423.1 1027.5 426.6 1029 429.6 1030.1 431.8 1032.6 432.4 1036.3 433.2 1040.2 433.8"/>
<path d="M840 497.5 843.2 496.3 846.9 496.1 850.1 495.1 853.2 497.5 856.7 500 854.4 502.3 852.7 504.6 850.2 508.1 847.2 508.9 845.4 510.3 842.7 512.9 841 516.2 839.6 520.3"/>
<path d="M925.4 602 928.5 598.6 930.5 596 934.3 593.4 936.7 592.6 940.2 590 943.3 589.4 946.9 588.4 950.7 587.5 953.7 587.8 956.9 588.2 960.3 588.9 963.6 587.7 967.9 586.7 970.7 585.8 972.4 587.4 975 591 977.3 593.3 977.1 596.1 977.9 599.4 977.9 602.3"/>
<path d="M1107.4 402 1106.5 406.3 1106.5 409.9 1107.8 412.3 1108.4 415.8 1109.3 419 1107.5 422.3 1104.5 424.8 1101.4 426.6 1098.1 428.9 1094.9 431.1 1094.5 433.9 1092.7 436.9 1091.7 439.7 1090.5 442.9 1089.6 446.1 1088.6 448.4 1090.6 451.7 1092 454.8 1093.9 457.7 1095.5 461.1 1096.8 463.8 1098.4 466.8 1099.4 470.4 1100.4 474.6 1101.1 477 1100.2 480.9 1099.7 484.1 1100.1 486.9 1097.8 490.7 1095.6 493.3 1099.3 495.1 1102.3 495.7 1107.1 498.5 1105.6 502.4 1103 504.5 1105.1 507.6 1107.6 509.9 1106.7 513.2 1104.7 517.3 1102.2 519.4 1099.3 520.8 1096.4 522.9 1093.2 523.3 1090.2 524.7 1088.5 528.7 1085.9 532.1 1087.9 536.4 1089.2 539.9 1090.9 542.2 1089.5 545.2 1087.5 547.8 1085.4 550.5 1083.9 554.3 1082.8 558.1 1084.6 559.8 1086.8 560.7 1090.2 563.2 1093.6 564.2 1097.1 564.4 1099.8 565.1 1101.9 568.1 1102.8 570 1104.9 572.7 1104.5 576.2 1103.6 579.6 1104.1 582.9 1104.9 587 1106.6 590.4 1104.7 592.8 1104.5 596.4 1103.7 599.7 1102.6 602.3"/>
<path d="M1039.5 432.2 1043.2 433.1 1047.4 434 1050.8 432.3 1054 431.6 1056.9 430.6 1060.3 430.8 1063.1 431.1 1066.7 431.6 1069.7 431.6 1073.6 431.4 1076.8 429.7 1080.1 428.9 1082.6 427.8 1087 427 1090.3 427 1092.2 429.1 1094.2 431.3"/>
<path d="M1062.2 602 1062.5 598.7 1063.8 595.4 1067.1 594.4 1069.8 592.8 1072.8 592.9 1076.5 594.1 1079.2 594.4 1081.9 593.7 1086 594.4 1088.5 594.4 1091.8 594.8 1094.3 595.4 1097.7 594.8 1100.2 593.9 1103.2 593.4"/>
<path d="M468.9 594 469.6 597.9 471.1 601.7 474.2 603.6 477.4 606.7 478.1 610.3 479 612.7 483.4 613.8 487.4 613.7 488.6 618.4 489.8 621.8 493.7 623 496 625.5 498.8 627.1 500.1 630.4 501 634.5 500.7 637.8 501.2 640.6 500.2 644.8 502 648.1 504 651 505.2 654.1 507.9 656.4 510.3 658.2 513.4 660.8 516.4 661.7 520.5 663.3 523.3 660.6 526.3 659.8 527.5 655.4 528.3 651.5 529.5 649.3 531.5 647.1 532.8 644.5 533.4 640.8 534.3 637.9 531.8 634.9 530.7 632.9 532.7 628.8 536.9 629.8 540 629.5 545.4 629.1 549.8 628.3 549.7 623.6 551.2 619.6 548.8 615.9 546.4 611.8 547.5 608.8 548 604.3 548.6 602 549.9 597.7 551.4 594.5"/>
<path d="M526.7 659.3 528 662.7 528.7 666.3 530.7 669.2 533.7 671.8 537.3 674.9 537.5 677.8 538.8 681 539.1 684.6 537.8 688.4 537.3 691.1 536.4 694.8 535.5 698.5 535.7 702.4 537.6 704.8 540.3 706.6 543.3 706.4 547.1 705.4 550.1 704 553.5 704 557.2 703 560.6 701.5 563.8 701.5 567.4 700.7 571.1 699.5 573.3 697.8 575.5 696.6 578.1 694.6 583.2 692.6 584.6 694.1 586 697 587.9 699.5 590.5 703.7 593.7 701.6 595.3 699.5 597.9 697.1 600.3 694.1 602.9 696 606.1 697.8 608.6 699.9 611.8 698.2 616 696 617.8 692.3 621.4 689.9 623 688.1 625.4 685.8 628.2 683.9 631.5 682.2 634 679.5 637 678.3 640.5 676.2"/>
<path d="M540.5 707.1 538.3 710.9 536.3 714.2 536.1 718.3 535.4 721.5 535.1 724.3 537.3 727.9 538.2 732.2 535.3 734.7 533.3 736 530.1 738.4 527.7 739.9 526.4 744 524.5 747.3 525.2 751.3 525 755.3 522 757 518.8 758.5 514.8 759.3 512.5 762 510 765.1 507.7 765.3 504.5 765.7 501.4 766.8 498.3 767.3 495 767.5 491.6 767.5 488.2 767.6 485.2 767.2 482.7 768 478.8 767.1 476.6 768 473.5 766.9 470.2 767.3 468.6 771 467.4 773.4"/>
<path d="M617.1 695.8 618.1 698.7 619.6 701.2 620.8 704.3 622.1 708.4 622.5 711 623.2 714.3 625.8 716.7 627.9 717.8 630.9 719.5 632.6 722.1 634.7 724.7 635.9 727.3 637.3 729.8 638.1 733.5 639.5 736.3 639.7 740.3"/>
<path d="M640 742.2 637.6 743.4 634.4 744.1 631.6 745.4 628.4 746.8 627.2 750.1 624.6 752.5 627.4 753.1 630.2 752.6 633.7 753.5 637.1 753.3 640.1 753.6"/>
<path d="M440 785 443.4 787.2 447.2 788.8 451.2 788.8 455.5 790.1 459.1 793.6"/>
<path d="M750.6 687 747 687.4 744.2 687.6 740.4 688.6 738.1 690.9 736.9 694.5 735.4 698.5 732.9 702.6 735.1 705.9 736.4 709.7 737.8 713.3 739 716.7 737.6 720.1 734.9 722.2 733.2 724.2 729.9 727.4 726.2 730.7 724 732.9 721.2 735.7 718.4 738.8 720.9 741.3 722.4 745 726.7 746.7 730.1 748.5 732.9 751.5 735.5 754.5 737.1 756.9 738.9 759.7 740 763.7 739.8 767 740.5 770.4 742.6 771.8 745.7 773 747.4 774.4 749 778.6 750.8 782 751.5 786.8 752.3 790.4 753.3 793.7"/>
<path d="M717.9 738.5 714.5 739.8 711.8 741.4 707.5 743 703.9 742.9 701.5 743 696.9 743 693.7 742.7 690.5 742.6 688.5 744 684.7 744.5 682.2 746.5 679.7 748.3 678 749.5 674.1 750.6 671.7 750.7 668.2 750.5 665.1 751.2 661.8 751.9 658.3 752.1 655.7 752.1 652.6 752.7 649.5 751.9 646.8 751.5 643.6 750.1 640.6 749.2"/>
<path d="M813.4 594 813.7 596.9 815.6 600.8 815.8 604.2 818.1 606.3 820.5 607.9 823 609.6 826.3 610.8 827.9 612 831.5 614 828.7 616.4 825.6 618.6 824.4 622 822.7 624.5 820.3 627 818.9 629.7 817.2 631.3 816.1 634.7 813 636.7 809.6 638.8 807 640 809.2 644.2 810.3 646.9 808 649.3 806.2 651.1 803.5 652.6 804.3 657.2 804.5 661.5 806.4 665.4 808.5 669.4 806.3 672.3 804.7 674.5 803.7 676.5 800.5 677.3 797.5 678.8 794.2 680.3 791 680.6 787.1 680.9 784.1 681.7 781.5 682.2 778.7 683.4 774.7 683.3 771.6 683.5 769.3 684 766 684.3 763.1 685.2 759.1 685.1 756.8 685.8 753 685.9 750.8 687"/>
<path d="M808.3 669.4 810.8 672.2 813.5 674.2 816.1 677.2 817.9 679.2 820.5 680.8 823 682.6 826.4 684.9 827.7 686.5 829.4 689.4 831.7 692 833.1 694 836.2 696.5 838.2 699.7 840.3 702.1"/>
<path d="M640 594 642.5 597.2 643.5 601.9 643.4 604.8 642.6 607.4 643.4 610.8 643 614 643.1 617 644.3 620.7 644.8 624.3"/>
<path d="M640 669.4 642.5 672.4 645.4 675"/>
<path d="M930.5 594 928.3 599.1 924.5 600.1 921.5 601.2 917.7 601.6 915.7 604.2 914.1 606 912.8 609.5 910.9 611.5 909.8 614.1 907.9 616 904.2 618.4 899.9 619.2 898.8 622.3 896.1 625.4 893.8 625.3 890.9 625 891.4 628.4 892.4 630.8 892.9 633.6 890.4 637 887.2 640.8 884.3 639.8 881.3 639.2 877.8 639.6 873.9 637.7 870.4 636.3 867.4 635.9 864.4 635.9 861.5 635.5 858.2 636.6 855.5 636.6 851.8 635.7 848.6 634.1 847.7 629.4 847.2 625.4 843.6 624.3 840.4 622.4"/>
<path d="M978.2 594 978.2 596.9 977.8 600.3 976.6 604.5 977.7 608.7 978 612.8 981 614.6 982.6 617.6 985.8 619.8 988.2 621.7 991.5 624 994.3 625.5 997.6 626.7 1000.2 628.8 1004.3 630 1007 631.3 1010.5 632.2 1013.2 633.2 1017.7 635.1 1020.4 636.4 1023.6 635.2 1025.3 633.9 1028.8 631.6 1032.6 631.3 1036.6 629.9 1039.6 629.1"/>
<path d="M840 709.6 843.3 711.9 845.7 714.6 845.7 717.8 845.8 721.5 845.5 725.2 842.8 728.3 841.6 731.9 839.4 734.7 843 735.6 847.2 736.5 850.3 737 852.1 739.3 853.7 741.7 856 745.1 857 747 860.2 745 862.4 742.4 865.4 739.7 867.6 741.9 869.8 743.7 872.7 744.6 872 748.2 870.2 752.3 872.5 753.9 875.5 756 877.1 758.5 880.2 759.9 881.9 762.5 882.7 765.6 884.4 769.1 885.1 772.7 886.5 774.5 889.5 776.8 890.7 779.4 892.8 782.2 893.2 785.9 893.9 790.7 893.9 794"/>
<path d="M1040 651.8 1036.3 654.3 1040.4 656.3"/>
<path d="M1020.9 794 1021.2 790.8 1022.4 787.9 1023.1 785.3 1025.4 783.1 1028.2 781.4 1030.5 778.9 1034.3 777.7 1036.5 778 1040.2 777.6"/>
<path d="M1102.4 602 1104.9 605.8 1107.1 609.1 1111.5 608.4 1114.8 607.1 1117.2 608.6 1118.7 611.4 1119.7 614.3 1124.1 615.9 1127.8 616 1129.6 619.7 1131.2 621.1 1132.5 624.7 1136.4 625.8 1138.8 628 1143 629.4 1146.2 630.8 1148.8 633.6 1152.9 635.1 1155.4 636.2 1159.8 637.7 1162.1 639 1166.6 640.4 1169.8 642.6 1173.2 644.8 1175.6 646.1 1178.3 648 1179.9 649.5 1182.4 651.5 1184.5 654.4 1186.4 656.6 1188.2 658.9 1192 661.6 1194.8 663.7 1199.5 661.3 1203.2 658.9 1206.4 658.4 1209.2 658.1 1213.5 658.6 1216.3 656.2 1219.1 655.6 1223.3 654.2 1226.3 651.6 1228.7 650.4 1232.1 648.4"/>
<path d="M1195.3 663.1 1192.4 665.8 1188.7 667.5 1185.1 669.1 1183 674.7 1184.3 676.7 1186 679 1188.3 681.5 1191.6 681.7 1194.4 681.8 1197.7 681.4 1200.3 683.2 1202.7 685.7 1205.9 687.1 1208.4 689 1210.1 692.1 1212.9 694.6 1214.5 697 1216.2 699.4 1218.2 702.1 1221.6 701.4 1224.6 700.1 1227.7 699.4 1229.6 702.5 1232.3 704.6"/>
<path d="M1060.9 594 1062.7 597.6 1062.9 602 1066.7 602 1070.9 603.7 1075.2 604.4 1077.3 606.3 1074.4 608.7 1072.5 609.5 1069.5 611.6 1067.6 613.2 1064.8 615 1062 616.1 1063.2 620 1063 623 1062.9 626.9 1064.3 630.9 1065.4 633.8 1062 633.3 1059.5 634.1 1055.9 633.5 1052.5 632.3 1048.4 634.7 1044.5 635.8 1044.1 638.2 1043.2 640.9 1041.6 644 1039.8 647 1039.1 649.5 1037.3 651.5 1039.1 653.8 1040.7 656.5 1042.5 659 1044.2 661.7 1047 664.4 1048.6 667.1 1050.2 669.8 1052.3 672 1055 673.3 1056.7 675.4 1060.1 676.8 1061.4 679.3 1063.3 681.5 1064.8 684.8 1067.6 686.7 1071.3 687.5 1075.3 689.3 1073.4 693.3 1072.8 696 1072.5 699.9 1074.6 701.5 1075.9 704.5 1078.1 706.9 1079 710.9 1079.3 713.8 1080.1 716.6 1078.2 720.5 1075.5 724.9 1077.5 726.6 1079.8 729.5 1081.2 732.5 1079.5 735.5 1077.9 739.2 1077.5 742.5 1074.5 744.3 1072.2 746.8 1069.3 749.3 1066.8 750.6 1063.1 751.4 1059.8 751.6 1057.3 751.9 1054.7 755.1 1052.6 756.7 1049.4 759.4 1044.2 762.1 1046.7 764.3 1049.6 765.8 1051.7 767.3 1054.3 769.6 1055.7 772.1 1056.6 775.5 1054.1 777.3 1052.1 780.1 1054.7 781 1058.9 781.7 1061.3 782.1 1064.1 782.6 1067.8 784.9 1071.2 786.9 1070.8 790.9 1070 794.1"/>
<path d="M1032 629.2 1036.8 631.8 1040.6 633.9 1044.5 635.4"/>
<path d="M1032 774.9 1036 777.1 1040 779.1 1042.3 778.6 1046.2 778.8 1048.7 779.3 1052.4 779.5"/>
<path d="M1232 749.8 1229.7 751.8 1228.6 754.8 1230.2 757.8 1232.6 759.7"/>
</g>
<g fill="none" stroke="#62cf9d" stroke-width="2.2" stroke-linejoin="round" stroke-linecap="round">
<path d="M480.2 18.3 479.7 21.8 479.8 24.6 481.6 26.8 482.4 29 483.7 31.3 486.6 32.2 489.3 34.2 491.2 35.6 494.9 36.6 496.9 36.5 500.7 37.6 502.8 35.3 505.4 32.6 508.3 30.7 510 28.6 512.8 26.3 515.6 24.3 517.9 23.5"/>
<path d="M603.3 13.3 602 16.4 601.2 19.2 598.1 21.2 596 21.9 593.3 23.7 590.8 23.4 587.8 24.4 585.5 23.8 583.4 24.5 580.5 25.1 577.8 25.5 574.2 27.4 576.4 29.2 578 31.7 577.8 34.2 577 36.9 577.1 39.7 575.5 42 573.9 43.5 571.7 46.2 571 48.2 569.4 50.3 567.7 52.5"/>
<path d="M576.9 63.6 577.7 60.5 577.8 57 580.4 55 581.5 53.3 583.5 51 586 48.3 588.6 46.8 590.4 46.4 593.4 44.4 595.7 43.8 598.1 43.2 600.8 42.8 602.9 42.5 605.5 42.6 608.4 42.5 611 41.3 613.5 41.7 615.8 41.2 618.6 40.4 621 40.2 623.4 40.3 626.2 39.7 628.2 40 630.6 39.5 633.5 40.8 636.5 42.3 639.5 43"/>
<path d="M490.3 172.9 492.6 174.5 494 176.2 496 177.8 497.8 178.8 500.7 180.1 502.5 182.3 504.1 183.3 506.3 184.8 508.5 185.9 510.8 187.7 513.2 189.4 515.2 191 517.4 192.6 519.6 195.1 521.7 197.6 523.7 199.6 525.7 202"/>
<path d="M640 43.5 642.5 43.7 644.9 43 648 43.4 650.1 43.4 652.1 43.8 655.2 42.7 657.5 42.7 660.2 42.4 662.3 42.7 665 42.1 667.9 42.1 670 41.8 672.2 41.6 674.7 41 677.4 40.7 680.6 40.4 682.4 39.2 685.1 38.3 687.7 36.4 690.7 36.3 692.8 34.6 695.2 33.8 698.2 32.6 700.3 32.6 702.3 30.6 705.4 29.4 708 28 709.3 26.7 712.1 25.1 713.3 22.3 715.5 20.5 716.7 18.2 717.9 15.8 718.9 13.1 722 12.2 724.6 10.1 727.6 9.1 730.8 8.2 733.4 7.5 736.7 6 739 5 742 4.2 744.6 3.7 747.4 2.9 750.3 1.7"/>
<path d="M647.5 19.6 649.5 21.3 651.2 23.4 653.7 25.3 655.4 27.5 656.7 29.4 658 32.3 660.5 34.6 662.1 36.8 663 39.2 665.1 41.1"/>
<path d="M665.1 42.2 667.7 43.9 670.3 45 672.8 46.2 675.5 47.3 675.8 50 675.7 52.5 676 55 675.3 57 674.3 60.3 674 61.9 672.4 65.1 670.6 67 668.5 69.3 667 71.6 665 74 662.8 75 660.3 75.7 657.2 76.2 655.5 77.1 652.6 79 649.9 80.3 647.2 82.7 645.4 83.8 642.1 85.5 640.4 87.5"/>
<path d="M649 45.2 650 47.6 651 49.4 652.5 52.1 652.6 54.9 653.7 56.8 653.9 59.4 653.4 62.8 653.3 65.1 652.2 67 651.4 70 651.1 72.5 649.4 74.9 646.6 76.9 645.2 79.5"/>
<path d="M640 49.7 643.3 48.7 646.2 47.2 649.1 45.9 651.4 46.1 655 45.6 657.2 45.6 660.4 44.4 662.2 43.5 665.4 41.9"/>
<path d="M927.9 136.4 925.1 138.5 922 139.9 918.2 140.1 915.7 141.3 912.9 142.6 909.5 143.6 906.8 144.5 903.8 145.9 901.8 147.4 898.6 148.4 896.6 149.9 893.6 151.3 891.6 152.8 889 154.4 886.6 155.8 885.3 157.4 883.4 160.2 882 162.7 879.7 165.2 877.9 167.7 877.1 170.2 875 172.6 873 174.5 869.7 175.5 867.5 176.6 865.5 178.2 862.8 179.7 861.7 181.5 859.6 183.9 857.6 185.4 855.5 187 854.1 189.5 851.5 190.9 850 193.3 849 194.9 847.6 197.5 846.3 200.1 845.3 202.4"/>
<path d="M877.7 180.4 879.7 181.2 882.5 183 884.7 184.7 888.3 185.2 890.7 185.4 893.1 186.7 895.3 187.1 898.6 188.5 901.2 188.8 904 188.3 907.4 188.6 910.4 188.6 912.8 188.9 915.6 188.9 918.1 189.3 920.3 188.7 923.5 188.7 926.1 188.5 929.2 188.4 931.8 189.2 935.6 188.9"/>
<path d="M866.9 185.4 868.7 187.6 871 188.9 873.6 190.8 875.2 193.2 877.7 194.3 880.2 195.4 882.4 197 885.6 198.5 887.6 198.5 890.2 199.6 892.4 201.2 895.3 202.2"/>
<path d="M909.6 147.2 910.9 149.7 912.2 152.4 914.5 155.2 915.2 157.5 915.5 160.7 917.2 162.4"/>
<path d="M1060.9 174.1 1061.3 176.9 1062.5 179.8 1062.8 183.3 1060.5 185.3 1058.5 186.7 1056.6 189.5 1055.3 192.2 1053.5 195.1 1051.3 197.5 1049.1 199.5 1046.8 201.7"/>
<path d="M522.9 202 525.7 204.4 527.7 206.2 530.1 208.7 533.3 209.4 535.3 210.9 537.8 211.9 540 213.3 543 214.4 545.2 215.1 548.3 215.9 550.5 217.3 553.5 218.8 556.1 221.7 558 223.1 560.1 224.8 561.5 227.5 563.4 229.2 565.8 231.3 567.8 232.8 570.8 233.9 573.3 235.6 576.1 237.1 578.1 238.6 580 239.7 581.6 241.4 583.3 242.8 585.2 244.2 588.1 245.6 590.3 247 593.4 247.2 595.4 248.6 598.2 250.7 599.8 252.7 602 254.5 604.3 254.8 608.1 255.3 611.2 255.8 613.6 255.5 616.6 255.9 620 255.7 623.1 255.1 625.8 255.1 628.8 254.5 631.4 251.9 633.7 249.6 636.3 249.4 639.7 248.5"/>
<path d="M495.8 370.1 495.2 372.4 495.4 375.1 494 378 494 380.6 492.9 383.3 492.4 386.7 491.9 389.4 493.1 391.8 495 394.6 496.3 396.8 498.5 399.8 501.2 401.6"/>
<path d="M640 248.5 643 248 645.3 248.2 647.9 247.5 650.6 247.6 652.3 247.5 655.2 248.5 657.2 249.4 659.8 249.8 662.8 248.7 665.3 248 667.9 247.5 669.8 247.2 672.7 246.2 675.7 245 678.1 243.8 680.7 242.7 683.7 242.4 686.9 242.5"/>
<path d="M866.8 185.9 869.5 186.7 872.5 188.3 875.4 189.3 878.2 190.7 880.4 192.6 883.5 194.6 885.6 196.1 887.3 197.6 890.4 198.2 892.5 199.6 893.9 201.3 896 202.1 898.7 203.5 901 205.3 903.5 207.7 905.5 209.5 908.3 212.3 910.6 214.3"/>
<path d="M878.1 180.1 880.4 181.6 883 182.2 885.8 183.5 887.9 184.5 890.9 185.5 893.1 186.1 896 186.9 898.4 187.2 900.9 187.8 903.7 187.7 906.1 188.2 908 188.2 910.9 188.7 912.8 188.5 915.5 188.6 918 188.4 920.6 188 923.6 188.3 925.8 188.2"/>
<path d="M878.1 165.8 878.1 168.1 876.8 171.2 876.9 172.9 874.3 175.4 872.3 178 870.8 179.7 868.2 180.1 866 181.2 863.3 182.1 860.8 183.8 858.1 184.4 855.1 186.1 853.5 187.2 850.8 189.3 848.7 191.7 846.4 194.6"/>
<path d="M1040.8 202 1041.7 204.3 1042.2 206.8 1042.6 209.3 1042.3 211.9 1043 214.1 1043 217.2 1042.2 219.8 1041.1 222 1039.8 224.7 1040 226.8 1038.7 229.7 1037.1 232.5 1037 234.2 1035.5 237.2 1034.7 239.7 1035.8 241.8 1037.6 245.1 1039 246.8 1041.4 249.6 1043.6 251.7 1045.6 254.2 1047.1 256 1049.3 256.6 1051.7 257.7 1054.1 258.2 1057.6 258 1058.4 255.5 1060.3 253.7 1062 250.6 1064.3 253.6 1066.8 256.3 1065.4 258.3 1063.7 260.8 1061.7 262.1 1059.1 264.8 1057 265.9 1054.8 267.8 1052.6 268.3 1050.5 270.9 1049.4 273.2 1048.5 274.8 1047.1 277.1 1046.5 280.4 1046.2 282.3 1045 285.1 1044.7 287.2 1046.9 289.6 1049.9 291.4 1051.6 293.3 1053 295.7 1054.3 297.9 1056.2 300.2 1057 302.8 1059.3 302.8 1062.4 303.7 1064.4 304.2 1067.1 304.7 1069.8 304.5 1072.6 304.5 1075.1 304.7 1077.1 303.6 1077.4 301.8 1076.8 298.4 1077.2 296.5 1077.4 293.7 1079.2 295.1 1080.9 297.3 1082.6 300.7 1084.4 302.6 1086.4 305.6 1088.4 308 1090.1 309.8 1091.9 312.7 1094.7 314.1 1096.5 315.6 1098.2 316.8 1100.4 318.5 1102.8 319.6 1103.9 322.5 1105.5 323.7 1107.3 326 1108.1 327.9 1109.5 330.5 1111.7 333.1 1112.8 335.3 1115.4 337.4 1114.3 340 1113.3 343.1 1113.1 345.5 1112.7 347.5"/>
<path d="M1112.4 347.7 1114.9 347 1117.6 346.8 1120.2 345.8 1122 345.6 1124.5 345.3 1126.7 347.8 1127.5 349.8 1129 353.1 1130.4 354.8 1130.3 357.7 1130.8 359.8 1132 362.7 1131.8 365.5 1132.4 368.1 1132.4 370.4 1132.8 372.5 1133.3 375.2 1133.2 377.9 1133.8 380.4 1133.6 383 1134.1 385.3 1133.6 388.6 1132.9 390.9 1133 393.5 1133 396.4 1132.6 399 1132.9 401.6"/>
<path d="M1185.3 356.5 1187.7 358.1 1190.1 360.3 1192.8 363 1194.3 364.8 1196.6 366.1 1198.2 368.2 1199.8 370.7 1203.2 371.2 1205.6 372.9 1207.7 370.8 1210.5 369.9 1212.5 368.1 1214.4 366.4 1217.3 365.2 1218.9 363.7 1221.9 362.9 1224.5 361.7 1226.4 360.5 1229.2 360.2 1232.5 358.7"/>
<path d="M611.4 463.6 608.6 463.6 605.7 464.5 603.7 464.3 600.9 464.7 598.5 466.2 596.2 466.3 593.7 467.5 590.6 469.1 587.1 469.4 584.1 470.6 583.3 474.4 583.8 476.8 583.6 480.4 580.9 482 578.4 483.5 575.3 484.9 573 485.1 570.6 485.8 568.6 487.1 565.6 487.2 564.4 489.2 562.5 491.9 559.9 494.8 557.6 497.9 554.8 496.7 551.7 495.2 552.2 497.6 552.9 500 555.8 501.1 558.3 501.5 560.8 502.7"/>
<path d="M440 467.3 442.4 469 444.2 471.3 446.9 473.7 449.5 475.2 451.3 477.6 452.8 479.9 455.3 482.3 456.6 484.5 458.9 487.5 460.6 489.9 462.8 488.3 465.5 487.1 467.8 484.8 470 483.9 473 483.7 475 483.1 477.8 482.3 480.5 483.7 483.1 485.3 484.7 486.3 488.2 487 485.2 489.1 483.1 492.1 480.4 493.6 477.6 495.3 474.5 496.2 472.2 498 474.7 499.7 477.6 502.9 480.2 503 482.7 503.6 485.5 503.7 488.1 504.8 490.2 505.1 493.1 505.5 494.7 507.1 496.7 508.8 497.9 511.7 500.5 511.2 502.8 512 505.2 511.8 507.6 513 510.4 511.5 512.7 511 515.2 510 517.4 509 520.3 507.2 522.7 507.1 525.2 506.3 527.6 506 530.7 506 533.3 505 536 505 538.2 507.1 540.6 508.7 542.9 509.7 543.6 512.8 543.8 514.8 544.9 517.8 545.2 520.1 548 522.3 551.1 524.3 551.8 520.8 553.2 518 554.2 515.4 556 511.6 558.1 508.4 560.1 508.1 563.4 508.6 566 507.3 567.9 507.8 570.3 508.8 573.5 510.7 576 512.3 576.2 514.7 576.1 517.3 577.3 520.4 575.2 521 572.5 523 570.4 524.1 568.5 525.4 566.8 527.5 565.3 529.7 564.6 532.3 565 535.3 565.2 538.5 568.1 538.9 571.3 538.4 573.9 537.5 577.3 537.9 580.5 537.9 583.8 539.2 587.4 541.2 587 544.4 586 546.7 586 550.2 587.9 553.2 591 555 591.8 553.4 592.9 551.2 594.1 549.1 595.6 546.8 598.8 546.2 600.7 545.3 603 544.5 606.1 543.9 607.4 545.7 609.6 547.3 610.6 549.6 612.4 551 614.1 553.5 615.6 555.3 618.6 556.5 620.7 557.3 623.7 558.2 626.2 558.9 629.9 560.4 631.4 558.6 633.6 557.5 635.6 556.1 638.4 554 639.7 552.7"/>
<path d="M500.8 404.5 501.5 406.7 500.9 409.9 501.4 412.5 501.6 414.1 502.5 416.9 503.2 419.9 503.8 422.5 504.3 425.7 502.2 427.1 500.5 427.9 497.9 429.5 495.3 431.4 492.9 433 490 435 489.4 436.9 489.3 439.4 488.5 442.6 488.6 444.4 487.3 447.5 487 450.2 487.1 453.2 486.5 455.7 485.9 458.6 485.3 461.8 482.8 463.8 481.5 465.8 479.1 467.6 477.8 469.7 475.7 471.8 474.5 474.5 472.3 477.6 470.4 478.7 467.4 480.5 464.7 481.9 462.3 483.8 460.6 484.8"/>
<path d="M440 527.6 441.5 530.1 443.5 533 443.6 536.2 442.8 539.4"/>
<path d="M440 594.2 442.8 594.9 444.9 596.5 447.1 596.6 450.6 597.9 452.6 599.4 455.2 600.8 457.9 601.8"/>
<path d="M590.8 535.2 593.1 534.9 595.5 534.1 598 533.3 600.4 532.6 602.9 530.1 604.6 528.5 605.3 526.5 604.7 524.3 603 521.3 601.1 523 598.7 525.3 595.6 527.4"/>
<path d="M620.9 550.2 620.7 552.5 620.8 555.4 620 557.4 619.6 560.6 619.3 562.6 620.3 565.6 620.9 567.6 622.4 570.4 622.7 573.2 623 575.5 624 577.8 625.5 580.7 625.4 582.5 623.8 584.4 622.2 586.5 620.7 588.3 618.3 590 618.1 593 617.6 596.3 616.8 598.9 615.7 602.1"/>
<path d="M640 546.5 642.9 546.6 645.8 546.3 647.7 546 650.8 544.8 653.9 544.3 656.3 544 659.2 543.7 662.9 543.1 665 541.9 668.1 540.6 669.8 539.9 672.8 539.7 675.6 539 678 537.9 678 535.1 677.5 532.8 678 530.1 680.3 529.6 682.4 529.1 684.7 528.1 687.2 528.1 689.2 524.8 690.5 520.8 694.2 523.1 694 525 693.5 527.6 692.6 530.6 692.3 533.1 695.8 533 697.6 533.5 700.5 533.5 701.2 531.3 701.7 527.9 702.4 525 705.1 523.8 706.9 522 709.2 520.1 711.6 517.8 713.2 515 715.9 512.1 716.8 509.7 717.6 507.9 720 508.3 722.9 507.9 725.6 508.5 727.1 505.4 727.7 502.2 730.3 502.2 733.1 502.2 735.5 502.7 736.2 505.5 736.5 507.7 736.4 509.6 733.8 511.2 730.7 512.9 731.3 515.6 731.5 517.6 734.1 517.8 737.6 518.5 739.6 518 742.9 518.6 746 518.5 748.3 518.8 750.8 520 753.9 519.7 755.8 518.3 758.4 516.8 760.3 515.3 761 512.7 761.4 510.4 761.7 507.5 765.3 508.6 764.8 510.9 764.8 513.4 764.1 516.4 767.8 516.7 771.2 518 772.8 515.7 776 513.6 776.9 516.5 778.3 518.6"/>
<path d="M1026.4 582.9 1027.3 585.2 1029 588.3 1029.8 590.2 1031.3 592.9 1033.2 595.4 1034.5 597.3 1036.7 600.2 1038.3 602"/>
<path d="M1132.5 402 1135.3 404.5 1137.2 406.8 1140.1 408.6 1142.8 409.1 1144.8 411.2 1147.1 411.9 1149.5 414.6 1151.2 417.6 1152.1 419.9 1154.4 422.1 1156.2 424.8 1157.5 426.9 1156.9 430 1155.8 432.2 1155.3 435.2 1157.2 436.4 1160.5 436.9 1162.8 438.3 1163.7 440.7 1165.6 443.5 1167 445.1 1168.2 448.2 1169.7 450 1170.2 452.5 1171.1 455 1171.8 457.1 1172.4 459.8 1174.2 462.6 1176.2 465 1178 467.6 1177.9 469.6 1177.2 472.2 1177.1 475.3 1176.1 477.7 1177.5 479.9 1178 482.8 1179.2 484.5 1179.9 487.4 1181.4 490.2 1182.4 492.7 1184 494.7 1184.9 497.3"/>
<path d="M1217.9 439.7 1219.4 441.7 1221.4 444.3 1223.2 445.6 1226.3 447.1 1228.5 448.1 1232 449.5"/>
<path d="M445 594 446.9 595.8 448.7 597.2 451.2 598.8 453 600 454.9 601.2 456.5 604.5 458 606.9 459.6 609.1 461.9 612 462.4 614 462.9 617 463.7 618.8 464.7 621.4 464.9 624.3 465.1 626.6 464.3 629.2 464.4 631.6 463.7 634.5 462.3 636.7 459.7 638.8 457.8 641.7 456.2 643.5 454 645.5 451.9 647.5 450.1 649.5 448.9 652.5 448 654.5 447.4 657.1 446 659.6 445.7 663.5 445.7 666.4 444.7 669.6 443.5 672.2 442.4 674.8 441.3 676.5"/>
<path d="M613.4 594 615.4 596.3 616.8 599.1 617.9 601.6 620.2 603.5 622.6 604.2 624.8 606 627 608.2 629.2 610.4 630.8 612.8 633.2 615.9 632.6 618.2 632.2 620.9 632 624.3 634.5 625.6 636 627.4 640.4 627.2"/>
<path d="M640 626.7 641.2 629.5 642.6 631.9 644.1 633.7 644.6 635.9 647.4 637.5 650.5 639.4 652.5 640.6 655.6 641.9 658 640.6 660.3 638.8 662.8 638.2 665.9 637.1 667 638.9 667.7 641.3 668.5 644.6 669.1 646.8 671.5 647.6 674.5 648.6 677.8 649.6 679.8 650.5 683 652.6 685.7 654 685.7 657.3 686.3 659.7 686.6 662.1 684.8 664.2 684 666.6 682.7 669.6 685.6 671 687.8 672.6 690.7 674.9 693.8 677.6 696.4 679.1 698.5 679.9 700.3 682.3 703.3 682.2 705.7 682.6 707.9 683.4 710.7 682.3 712.8 681.1 715.6 680.5 718.3 679.9 720.6 679 722.5 680.4 725.5 680.9 728.2 681.4 730 682.4 733.1 681.6 735.3 681.2 737.6 681.5 740.1 680.6 743.1 679.8 745.9 678.6 748.6 677.7 750.4 676.6 752.7 675.5 755.4 673.4 757.7 671.8 761.4 670.3 764.4 669 767.5 669.8 770.7 669.6 773.9 670.9 775.8 670 778.4 668.7 781.2 668.1 783 666.9 786 664.8 788.3 662.3 790.7 660.5 792.9 660 796.2 659.3 798.7 658.6 800.7 658.2 803 657.1 805.5 656 808.6 654 811.1 652.9 813 652.3 815.4 650.9 818.1 649.9 821.1 649 823.7 647.5 825.8 646.2 828.7 644 831.6 642.8 834.4 641.9 837.6 641.5 839.6 641"/>
<path d="M730.5 683.2 733.4 683.8 735.1 684.6 738.2 685.3 740.5 685.8 742.8 687.4 745.6 689.2 748.1 690.8 750.9 692.1 753.4 692.9 755.9 693.3 759.1 694.3 761.1 696.3 763.7 699.1 765.8 700.8 767 703.6 768.5 707.2 770.3 710 772 711.7 772.8 714.5 774.8 717.3 776.2 719.5 778.3 721.8 778.9 724.9 780.1 727.4 780.7 730.1 782 732.1 782.6 735.1 782.9 737.6 783.6 739.3 784.9 742.5 787.2 744.4 786.4 747.2 785.1 750.3 783.9 752 783.3 755.3 781.7 756.9 782.1 760 782.7 762.4 783.8 765.2 784.4 767.7 784.1 769.8 785.9 772.3 786.7 774.9 787.1 777.2 788.1 780.1 789.4 781.8 791.1 784 792.4 785.9 794 788.2 795.6 789.9 797.8 790.8 800.8 792.4 803.1 793.2 805.4 793.8"/>
<path d="M694 678.2 694.8 681 696.1 684.2 694.6 686.8 693.6 688 692.1 690.3 690.3 691.8 687.6 692.9 684.8 694.2 682.8 694.7 680.7 696.1 677.6 697.2 675.4 698.2 672.9 699.1 672.5 701.9 672 704.6 672 707.6 671.7 710.2 672.2 713 673.8 715.9 673.9 719.4 675.5 721.9 676.4 724.4 676.5 727.2 677.8 729.8 678.6 732.1 679 734.5 680.6 737.4 681.3 739.7 683 742.2 684 744.4 684.6 747.2 684.6 749.7 685.2 752.1 686 755.2 686.5 757.6 685.8 760.1 685.8 762.8 684.6 765 684.8 767.4 684.4 770.1 683 772.1 682.3 774.4 681.6 777.7 681.4 780.1 680.3 782.8 680.3 785.1 679.2 788.3 679.5 790.7 678.5 794"/>
<path d="M840 641.7 841.8 640.1 844.1 639.1 846.2 636.8 848.4 635.6 849.6 633.8 852.6 633.3 855 633.3 857.8 632 860.4 631.4 862.4 630.9 864.6 630.3 867.9 628.9 870.4 627.8 872.8 627 875.5 625.2 877.7 624.6 880.1 624.1 882.8 624.4 884.9 624.3 887.5 623.7 890.6 623.7 892.9 624 895.8 624.7 897.4 624.8 900.5 625.5 903 625.6 905.3 626 907.7 626.6 910 626.7 912.6 627.8 915.1 627.7 918.3 628.7 920.8 628.5 922.8 628.9 925.4 629.6 928.3 630.7 930.4 630.7 932.9 631.5 935.3 632 937.7 633.2 941 633.4 943.4 634.5 945.2 634 947.9 634 950.9 634.5 953.4 634.3 955.8 635.2 958.4 636.5 960.5 638 962.6 638.8 965.5 640.3 968.5 642.2 970.2 642.7 973 644.8 975.2 645.6 978.1 646.5 981.1 647.7 982.7 649.8 984.9 652 986.4 654.8 988.5 656.6 989.8 659 991.5 661 994.2 662.8 996.2 664.2 997.9 666 999.6 668.9 1001.2 670.2 1002.6 672.5 1004.2 674.5 1005.3 676.9 1006.7 679 1008.5 680.4 1011.6 680.7 1014.2 680.7 1016 682.7 1017.1 685.3 1018.1 687.9 1019.3 690.2 1021.3 693 1022.4 694.7 1024 697.2 1025.9 699.1 1027.6 702.3 1030.3 704.7 1032.3 706.9 1034.6 708.6 1037 709.5 1039.7 710.8"/>
<path d="M865.1 631.7 867.4 633.4 870.6 634.8 872.8 636.4 875.2 637.3 877.8 638.2 879.7 638.5 883.2 639.9 885.1 640.7 887.4 641.5 889.9 642.1 892.1 643.1 894.5 643.9 897.5 644 897.9 647 899.6 649.4 900.1 652.1 901.1 654.3 903.5 656.8 905 659.7 906.8 661.4 908 664 908.2 666.9 909.1 668.9 910.2 672.1 911.7 674 913.2 676 914.7 677.5 916.3 680.1 917.7 682 919.3 683.6 921.2 686 923 688.8 925.7 690.9 927.2 692.7 929 694.9 930.2 696.6 931.3 699.1 933.4 701.4 934.7 704.4 935.7 706.8 936 709.7 937.5 712.7 937.9 715.1 938.8 717.9 940.8 719.5 943 722.5 945.2 724.7 947.8 726.3 949.5 727.4 951.3 729 953.3 730.8 955.4 732.5 957.9 733.6 959.8 735.7 961.7 737.5 963.4 740.1 966 741.2 968.5 742.2 971 743.3 972.7 744.7 976.4 745 979.2 745.3 982.4 746.4 984.6 748.1 987.5 749.8 989.6 750.7"/>
<path d="M1028.4 594 1031.3 596.5 1033.9 599.1 1036.1 600.8 1038.2 602.8 1040.2 603.8"/>
<path d="M857.6 794 860.1 793.4 862.8 792 864.9 790.9 867.1 790 869.8 790.2 872.5 791 874.9 790.4 877.3 790.8 880.7 794.2"/>
<path d="M1032 599 1034.4 600.6 1037.3 601.5 1039.4 603.1 1041.7 604 1044.6 604.3 1047 605.8 1049.5 606.3 1051.9 607.1 1054.8 605.3 1057 604.5 1059.2 603.4 1062 603.1 1064.9 602.5 1067 602.1 1069.9 601.4 1072.5 601.9 1074.9 602.7 1076.8 603.3 1079.4 604.1 1082.2 605.6 1085 605.7 1087.6 605.1 1090.2 605.3 1091.9 604.9 1094.7 605.3"/>
<path d="M1032 707.1 1034.6 708.5 1037.1 710 1039.8 712.5 1041.9 713.9 1044.9 715 1047 717.2 1051.4 719.2"/>
</g>
<g fill="none" stroke="#e4e76e" stroke-width="2.5" stroke-linejoin="round" stroke-linecap="round">
<path d="M1096.1 315.1 1099.5 313.8 1101.9 312.5 1104.5 311.5 1108.6 311.3 1112.4 310.8 1115.3 312.1 1119 313.4 1120.9 315.8 1122.4 318.4 1124.1 320.2 1125.3 321.9 1128.2 323.1 1129.8 325.4 1132.7 326.5 1135.1 327.3 1137.5 328.6 1140.4 330.2 1140.6 333 1140.9 335.5 1141.1 337.6 1141.7 339.9 1140.5 342.3 1140.4 345.6 1142.8 347.9 1144.7 349.7 1147.2 351 1150 352.1 1152.1 352.3 1155.1 352.9 1157.1 353.5 1160.5 353.7 1162.3 354.4 1164.8 353.2 1167.3 352 1170.1 351.8 1172.9 351.7 1176.5 351.2 1179.3 352 1181.7 351.7"/>
<path d="M778.2 518.8 780.3 516.8 783.6 514.7 785.3 514.3 788.6 513.9 790.5 512.3 793.7 510.2 796 507.7 796.7 505.2 798.3 502.9 799.5 499.6 801.1 497.4 803.1 495.2 805 492.5 807.5 491.8 811 491.9 813.6 490.9 815.8 490 818 488.3 820.5 487 823.6 486.1 826.4 483.8 828.1 482.5 830.7 484 833 484.5 835.8 486.9 837.7 487.8 840 489.5"/>
<path d="M840 487.4 842.4 485.9 845.4 484.5 847.5 482.6 850 481.4 852.2 479.9 854.8 478.1 858 477.9 859.9 477.4 862.8 477.6 865.2 477.3 867.7 478.2 870 478.7 872.8 480.2 875.3 481.3 878.1 481.8 881 482.3 883.9 483.4 886.4 484.4 889.1 484.4 891.7 485.1 894.8 486 897.3 486.1 900.7 486.3 902.2 487.8 904.5 489.8 906.1 492 908 493.4 911.8 493.1 914.3 493.6 917.8 493.1 920.2 492.2 923.2 492.2 925.7 492.5 927.5 492.3 930.2 491.6 933.2 491.4 935.6 491.1 938 491.6 940.1 492.2 942.8 493.1 945.6 493.6 948.3 494 949.7 495.7 952 497.9 953.4 500.5 956 502.1 957.9 503.4 960.5 504.4 962.9 505.5 965.2 505.9 968.4 508.3 970.7 509.5 973.3 511.5 975.4 513 977.1 514.8 979.5 516.6 980.8 518.2 982.9 520.3 984.3 522.8 985.8 525.3 987.6 527 989.1 529.4 990.6 531.6 991.7 533.3 993.5 535.1 995.5 536.9 998 539.1 1000.7 541 1003.1 542.7 1004.3 545 1006.7 547 1007.7 548.3 1010.6 550.7 1011.6 552.5 1012.4 555.4 1013.9 558.1 1014.4 560.1 1015.5 562.5 1017.5 565.2 1019.1 568 1020.9 570.1 1022 572.8 1023.1 575.7 1024.4 578.5 1026.1 581.6"/>
<path d="M1026.4 577.9 1030.1 576.6 1033.1 575.5 1036.3 575 1040.4 574.3"/>
<path d="M1185.3 497.5 1187.3 500.2 1188.6 502.4 1190 505.3 1192.1 507.1 1193.5 509.7 1195.6 513.1 1195.2 514.7 1194.4 517.2 1194.3 520 1195.6 522.5 1197.9 524.3 1198.8 526.1 1200.5 527.7 1200.6 530.6 1200.7 532.7 1200.8 535 1199.4 537.5 1198.9 539.9 1198.1 543 1199.9 544.9 1201.3 547.9 1203.3 550.5 1205.2 551.8 1206.7 553.9 1208.5 555.9 1210 558.3 1212 559.8 1213.8 561.6 1214.9 564.4 1216.7 566.8 1217.6 568.4 1218.9 570.5 1220.2 572.4 1222.7 575.3 1225.2 578.2 1224.9 580.6 1224 583.3 1224 585.3 1223.3 588.3 1222.1 590.2 1221.3 593.4 1220.2 596 1218.4 599.6 1217.8 602"/>
<path d="M1032 575.4 1034.2 574.8 1036.6 574 1040 573.5 1041.7 573 1044.8 572.2 1047 571.4 1049.7 570.9 1051.7 570.3 1055 569.2 1057.2 568.7 1059.4 567.6 1062.3 566.9 1064.5 565.1 1067 563.3 1069 561.9 1071.5 560.6 1073.7 559.7 1075.8 557.8 1078.3 557.2 1081.4 555.4 1084.2 555.1 1087 553.7 1089.6 553.5 1092.8 552.6 1095.3 551.8 1097.1 551.1 1100.1 550.5 1102.9 550 1104.5 549.9 1107.5 549.2 1110.1 550.1 1112.4 550.6 1115 552.1 1118.5 552.7 1120.9 553.8 1122.4 555.4 1124.7 557.5 1126.6 558.3 1128.6 560.7 1130.7 562.4 1132.2 563.7 1134.7 565.7 1136.4 567.4 1138.3 569.2 1140.4 571 1142.2 572.6 1145.7 573.7 1147.9 575.5 1150.1 576.6 1153.5 578.3 1155.7 579.2 1157.5 580.7 1159.1 582.9 1161.3 584.4 1163.5 586.5 1164.9 588.1 1166.5 590.4 1167.8 591.5 1169.5 594.1 1171.2 595.6 1172.2 597.6 1174.9 599.7 1177.5 602.3"/>
<path d="M1081 559 1084.1 559.6 1086.3 559.4 1089 559.5 1092.3 560.4 1095.2 560.5 1098.2 561.5 1100.3 562.2 1103.5 562.5 1103.8 565.2 1105.5 568.1 1106.4 570.3 1107.4 573 1107.8 575.2 1108.5 577.5 1108.8 580 1110.1 582.7 1111.3 585.3 1113.3 587.3 1114.5 589 1115.7 590.6 1117.7 592.7 1119.2 594.6 1121.9 596.2 1123.8 598.5 1125.1 600.3 1127.4 602.3"/>
<path d="M1094.8 605.3 1097.5 606.7 1099.9 607 1102.6 608 1105.1 609 1107.6 610.2 1109.7 612 1111.7 613 1113.3 615.4 1113.8 618.7 1115.4 621.6 1116.6 624 1119.1 626.9 1121.1 629.3 1122.4 631.9 1124.1 634.5 1124.7 636.9 1126.3 639.6 1127.6 642.1 1128 644.7 1128.6 646.6 1130 649.1 1130.4 652.4 1131.8 655.6 1132.1 658.1 1133.1 661.1 1133.6 663.6 1135 667.3 1135.4 669.8 1135.8 671.9 1135.3 674.8 1136 677.2 1134.9 679.6 1133.7 682.1 1132.9 685 1131.3 687.7 1129.7 690.5 1128.2 693.1 1130.5 695.7 1131.8 697.2 1134.1 699.1 1133 702.4 1132.3 704.5 1132.3 707.5 1130.8 709.3 1131.1 711.8 1131.7 714.3 1132.2 716.8 1132.4 720 1134 721.8 1135.4 724.3 1137.7 727.7 1136.6 730 1135.8 732.4 1135.3 735.1 1134.9 736.7 1134.8 740.2 1134.5 742.4 1134.6 744.7 1135.2 747.5 1135.9 749.7 1136.3 752.6 1137.3 754.5 1138.8 757.5 1140.1 759.7 1141.7 762.2 1142.4 764.6 1145.1 766.7 1147.7 768 1150.4 770.1 1151.5 772.7 1153 774.6 1155.1 777.8"/>
<path d="M1123.7 594 1127.1 595.1 1129.3 596 1132 597.3 1134.7 599.6 1136.7 601.4 1138.8 602.7 1140.3 605.1 1143.1 606.7 1144.6 608.8 1145.2 610.3 1147 612.8 1149 614.4 1149.7 616.6 1151.7 619.6 1152.6 621.2 1153.9 624.1 1154.9 626.7 1156.1 628.9"/>
<path d="M1165.2 594 1167.2 595.7 1168.8 597.4 1171.6 599 1173.5 600.4 1174.8 601.9 1177.1 604 1179.3 606 1181.2 609.1 1182.6 611.7 1184.3 613 1186.9 614.9 1188.1 617.4 1190.7 618.9 1191.4 620.9 1192.7 623.2 1194.5 626.1 1195.3 628"/>
<path d="M1230.5 609.1 1230.6 611.1 1231.5 614 1231.3 616.8 1232 619.2 1231.5 621.3 1231.7 624.2"/>
</g>
<g fill="none" stroke="#25c552" stroke-width="2.4" stroke-linejoin="round" stroke-linecap="round">
<path d="M534.2 359 536.3 359.6 538.9 360.7 541.7 362.3 543.8 364.2 545.4 365.3 547.1 368 550 370.1 551.7 373.2 553.4 375 554.7 376.8 556.6 379.5 558.3 380.4 560.2 382.4 562.9 384.3 565.4 385 567.5 386.1 570.5 386.5 573.7 388.4 576.6 389.6 579.1 391.4 581.3 394.1 583.6 396.7 585.8 398.8 587.8 401.7"/>
<path d="M702.8 382.9 701.4 385.2 699.3 387 698.3 389 696.6 391.1 694.1 392.6 692.5 394 690.8 395.4 688.5 398.8 687.4 402.1"/>
<path d="M702.8 382.9 705.8 384.2 708.1 386.2 709.9 388 713.4 388.1 715.6 389 717.9 389.3 719.9 389.7 722.5 390.5 725.7 391 728 391.2 730.2 392.3 733.3 391.7 735.6 392.3 738 392.3 740.9 392.5 743.1 392.9 745.8 392.9 747.6 393.2 750.5 392.5 753.5 393 755.7 392 757.7 391.6 760.4 391.2 763.3 392.1 765.5 393 768.2 392.7 771 393.4 773.2 393.6 776 394.3 777.9 394.8 780.8 395.4 784.3 396 786.5 396.2 789.6 396.2 792.4 396.4 794.4 395.9 797.5 395.9 800.1 397.6 803.4 398.9 805.4 398.4 808.2 397.1 811.4 396.7 813.1 395.4 815.5 394.7"/>
<path d="M924.6 241.1 920.7 239.1 918.6 239.7 916 241.1 913.8 242.2 911.3 243.7 907.8 244.9 905.8 246.1 903 247.1 900.7 248.7 897.9 248.7 896.1 248.9 893.6 248.5 890.5 249 887.7 249.2 885.4 248.3 883.1 248.7 880.1 248.3 878 248.2 875.9 248.2 873.4 247.4 870.8 248 868.2 248.9 865.1 249.5 862.8 250.3 860.7 250 857.5 251 854.6 251.7 851.5 251.7 849.3 250.5 846.7 250.1 844.2 249.1 843.1 245.7 841.6 242.6 838.6 243.3 835.5 243.8 834.2 246.2 831.6 249.2 830.7 251.5 828.6 253.4 828.3 255.9 826.5 259 824.3 261.4 821.8 262.8 820.5 265.4 817.7 267.3 816.8 269.7 816.2 272.6 815.2 275.2 813.7 277.2 812 279.6 809.9 281.4 807.3 282.9 805.4 285.2 803.3 286.9 801.6 289.4 799.2 290.7 797.4 293.2 796.7 295.6 796 298 795.6 300.5 795.1 303 796.8 306.2 797.2 309.1 799.7 311.6 801.8 314.2"/>
<path d="M924.6 242.4 922.2 244.5 920.2 247 917.9 248.2 915.6 250.8 913.3 253.5 910.5 253.5 908.8 252.9 905.3 252.7 903.3 252 899.5 251.3 896.5 248.9"/>
<path d="M801.5 314 804.4 312.9 807.2 311.6 810.5 310.3 813.2 309.8 816 309.8 818.2 308.7 822 308.7 825 307.9 828.3 307.8 830.2 308.8 833.1 309.6 835.6 310 837.5 309.7 840.1 309.7 842.8 309.6 845.9 310.3 849.1 311.2 852.7 311.3 853.8 309.5 856.1 308.2 858 306.8 859.9 304.3 862.3 303.2 863.9 300.4 865.5 298.7 867.8 297.6 871 296.4 873.4 294.7 875.3 295.3 878.5 295.8 881 297.2 883.4 297.3 885.1 297.3 888.6 298.6 890.3 298.8 892.6 299.4 895.7 299.9 897.8 300.8 900.9 300.8 902.9 300.8 905.7 300.9 908.5 302.4 910.3 304.1 912.8 305.2 916.1 306.8"/>
<path d="M588.2 402 590.2 404.6 593.4 406.7 595.5 408.1 598.5 410.3 601.1 412 603.1 414.6 604.6 417 606.7 420.1 608 422.2 610.9 423.8 613.2 426.3 614.7 428 617.4 429.9 620.1 431.2 623.3 433.2 626.7 433.5 630.7 433.7"/>
<path d="M640 421.6 636.9 423.6 634.4 426.6 633.4 428.8 631.8 431.9 630.6 434.6 628.4 436.7 627.7 439.1 625.6 441.8 623.4 444.3 621.2 445.3 618.9 447 615.4 448.2 614.5 450.9 613.1 454 612.2 457.3 611.8 460.4 611.3 464.1"/>
<path d="M640 422.1 642.6 422 645.1 420.6 647.6 420 649.8 420.1 652.7 419 654.7 419.2 657.9 419.2 660.2 417.9 662.3 416.2 664.3 413.2 666.4 413.3 669.6 414.5 672 415 674.4 415.2 677.6 415.4 679.6 412.9 682.3 411.1 684 408.1 686.2 405 688.2 402.4"/>
</g>
<g fill="none" stroke="#fbf600" stroke-width="2.6" stroke-linejoin="round" stroke-linecap="round">
<path d="M802.1 315.1 799.9 317.5 798 320.3 795.3 322.5 793.2 324 791.4 324.2 788.8 325.9 787 327.1 784.1 328.1 781.9 329 779.9 330.5 777.9 331.7 775.2 334.1 773.3 335.6 770.6 336.6 768.3 337.9 765.8 338.5 762.9 340 760.3 341 758.3 342 756 342.4 752.6 342.9 750.6 343.9 747.6 345 745.9 345.1 743.3 346.3 740.4 347.7 737.8 348.5 735 350.6 732.8 349.8 730.1 349.9 726.2 349 725.8 351.5 725.1 355.3 723.8 357.7 723.1 360.8 721.6 362.6 720.9 365.8 717.1 366 714.9 366.8 711.7 367.5 710.3 370.3 709.3 372.3 707.4 375.9 706.4 377.5 705.2 380.3 702.9 382.7"/>
<path d="M815.9 393.5 818.4 392.3 821.3 391.6 823.6 391.3 826.2 390.3 828.9 391.8 831.4 391.7 833.5 393.5 837.2 391.8 839.6 391.4"/>
<path d="M840 391.7 842.2 392.6 845.4 392.4 847.6 393.8 849.9 394.1 852.9 395 855.4 394.8 857.8 395 859.6 395.6 863.1 396 865.6 396 867.2 396.8 870.2 397.2 872.8 395.9 874.8 395.8 877.4 394.8 880.4 394.2 883 393.6 885.5 392.5 887.7 391 890.4 389.9 893.3 390.8 897.4 391.1 899.9 390.6 902.5 389.7 904.6 389.5 907.8 389.4 909.9 388.8 912.3 388.7 914.9 388.3 917.4 387.9 919.5 385.2 921.8 383.8 924 381.7 925.3 378.6 927.7 376.7 931 375 933.1 372.8 934.5 370.8 935.6 368.5 938.2 366.9 940.2 365 943.6 363.7 945.9 362.6 947.5 361.4 950.5 359.1 953.1 358.4 955.8 356 959.1 355.8 962 355.8 964.4 355.2 968.3 355.7 970.4 356 973 356.7 975.8 357.4 978.7 359.5 981.6 359.8 984.4 361.4 985.9 363.3 988.3 363.7 990.9 365.8 992.9 364.8 996 364.9 998.5 364.5 1000.9 363.7 1003.5 363.8 1007.2 364.4 1010.2 364.3 1013 364.9 1015.6 365.3 1018.5 366.9 1020.4 368.3 1023.7 366.9 1026.7 366.1 1029.6 365.4 1032.4 364.2 1033.6 366.7 1035 370.4 1036.1 372.4 1038.2 375.6 1040.3 377.4"/>
<path d="M1021.9 362.8 1024 364.3 1027 365.8 1029.8 366.8 1032.2 367.8 1034.4 370 1035.5 373.1 1037 375.3 1038.3 377.9 1039.4 380.4 1040.3 383.2 1042.5 386.6 1043.7 388.8 1044.1 391.8 1045.9 394.1 1047.5 396.4 1049 399.5 1050.8 402.5"/>
<path d="M1049.6 402 1050.7 403.7 1052.9 406.4 1054.8 408.8 1056.5 411.3 1058.7 413.5 1062.2 414.5 1064.8 415.1 1067.2 415.4 1070.2 417.1 1072.3 417.8 1075.2 418.5 1075 421.1 1075.6 423.4 1072.5 424.9 1070 426.7 1069.6 429.4 1069.7 432.3 1069.5 434.9 1070.6 437.5 1071.1 439.9 1072.3 441.9 1073.5 444.7 1074.3 447.3 1074.9 449.7 1076 452 1074.9 454.3 1074.8 457.5 1074.4 459.9 1073.4 462.8 1073.5 465.7 1073.2 468.2 1076 469.8 1077.2 472.4 1079.9 473.7 1081.9 475.8 1083.4 478.3 1085.3 480.4"/>
<path d="M1067.2 415.8 1068.7 412.7 1070.1 410 1072.9 408.5 1075.3 409 1078.1 408.3 1081 407 1084.1 407.9 1087.2 408.5 1090 409.4 1091.6 411.8 1091.9 414.4 1093.3 417.5 1094.6 419.9 1096.1 422.2 1097.1 424.1 1099 426.3 1101.3 428.3 1104.1 429.3 1104.8 433.2 1106.3 436.4 1106.8 439.3 1106.8 441.9 1107.2 444.5 1108.8 447.2 1109.8 449.5 1111.4 451.9 1112.6 454.7 1113.1 457.5 1114.5 460 1114.9 462.4 1116.5 465.3 1117.5 466.9 1118.8 470 1120.4 471.8 1120.7 475.1 1122.5 477.6 1123.4 481.1 1124.8 483.5 1126.1 486.9 1127 489.6 1129.1 491.7 1129.9 495.2 1131.6 497.1 1134.3 500.4 1136.5 502.1 1137.9 505.2 1139.9 508.4"/>
</g>
<g fill="#9c4a0c">
<rect x="479" y="13.8" width="5" height="5"/>
<rect x="595" y="9" width="5" height="5"/>
<rect x="503.8" y="88.7" width="5" height="5"/>
<rect x="516.1" y="189.7" width="5" height="5"/>
<rect x="608.1" y="176.9" width="5" height="5"/>
<rect x="645" y="15.8" width="5" height="5"/>
<rect x="705.8" y="26.4" width="5" height="5"/>
<rect x="738" y="42.7" width="5" height="5"/>
<rect x="662.6" y="71.9" width="5" height="5"/>
<rect x="687.8" y="139.7" width="5" height="5"/>
<rect x="904.1" y="141.5" width="5" height="5"/>
<rect x="895.8" y="185.7" width="5" height="5"/>
<rect x="599.1" y="251.8" width="5" height="5"/>
<rect x="559.9" y="380.4" width="5" height="5"/>
<rect x="715.9" y="240.7" width="5" height="5"/>
<rect x="728.5" y="339.7" width="5" height="5"/>
<rect x="695.3" y="386.7" width="5" height="5"/>
<rect x="787" y="394.2" width="5" height="5"/>
<rect x="919.9" y="214.8" width="5" height="5"/>
<rect x="925.9" y="241.7" width="5" height="5"/>
<rect x="842.4" y="248.7" width="5" height="5"/>
<rect x="842.2" y="344.9" width="5" height="5"/>
<rect x="979.5" y="357.3" width="5" height="5"/>
<rect x="1043.8" y="285.7" width="5" height="5"/>
<rect x="1082.3" y="300.5" width="5" height="5"/>
<rect x="1040.8" y="386.7" width="5" height="5"/>
<rect x="502.1" y="422.9" width="5" height="5"/>
<rect x="560.1" y="489.2" width="5" height="5"/>
<rect x="578.7" y="533.9" width="5" height="5"/>
<rect x="605.8" y="542.7" width="5" height="5"/>
<rect x="565.9" y="557.8" width="5" height="5"/>
<rect x="622.7" y="529.1" width="5" height="5"/>
<rect x="625.9" y="566.6" width="5" height="5"/>
<rect x="447" y="476.1" width="5" height="5"/>
<rect x="631" y="430.9" width="5" height="5"/>
<rect x="706.6" y="515.8" width="5" height="5"/>
<rect x="802.8" y="490" width="5" height="5"/>
<rect x="917.9" y="427.6" width="5" height="5"/>
<rect x="905.8" y="491.7" width="5" height="5"/>
<rect x="981.2" y="513.8" width="5" height="5"/>
<rect x="1023.9" y="578.9" width="5" height="5"/>
<rect x="1103.4" y="434.7" width="5" height="5"/>
<rect x="1168.4" y="449.8" width="5" height="5"/>
<rect x="1131.8" y="562.8" width="5" height="5"/>
<rect x="1210.9" y="562.8" width="5" height="5"/>
<rect x="1201.1" y="527.6" width="5" height="5"/>
<rect x="443.8" y="657.6" width="5" height="5"/>
<rect x="621.2" y="609.6" width="5" height="5"/>
<rect x="663.4" y="633" width="5" height="5"/>
<rect x="717.9" y="678.2" width="5" height="5"/>
<rect x="669.7" y="709.6" width="5" height="5"/>
<rect x="780.7" y="730.2" width="5" height="5"/>
<rect x="676.4" y="786.2" width="5" height="5"/>
<rect x="822.2" y="646.8" width="5" height="5"/>
<rect x="930.5" y="700.8" width="5" height="5"/>
<rect x="1092.3" y="601.6" width="5" height="5"/>
<rect x="1048.8" y="716.4" width="5" height="5"/>
<rect x="1131.8" y="749.8" width="5" height="5"/>
</g>
<g>
<rect x="481.8" y="1.4" width="4.400" height="7.200" fill="#000"/><rect x="483" y="2.5" width="2" height="2" fill="#fff"/><rect x="483" y="5.5" width="2" height="2" fill="#6cc4e8"/>
<rect x="481.8" y="24.5" width="4.400" height="7.200" fill="#000"/><rect x="483" y="25.6" width="2" height="2" fill="#fff"/><rect x="483" y="28.6" width="2" height="2" fill="#6cc4e8"/>
<rect x="505.6" y="24.5" width="4.400" height="7.200" fill="#000"/><rect x="506.8" y="25.6" width="2" height="2" fill="#fff"/><rect x="506.8" y="28.6" width="2" height="2" fill="#6cc4e8"/>
<rect x="570.7" y="18" width="4.400" height="7.200" fill="#000"/><rect x="571.9" y="19.1" width="2" height="2" fill="#fff"/><rect x="571.9" y="22.1" width="2" height="2" fill="#6cc4e8"/>
<rect x="570.7" y="22.5" width="4.400" height="7.200" fill="#000"/><rect x="571.9" y="23.6" width="2" height="2" fill="#fff"/><rect x="571.9" y="26.6" width="2" height="2" fill="#6cc4e8"/>
<rect x="591.8" y="17.5" width="4.400" height="7.200" fill="#000"/><rect x="593" y="18.6" width="2" height="2" fill="#fff"/><rect x="593" y="21.6" width="2" height="2" fill="#6cc4e8"/>
<rect x="600.6" y="8.5" width="4.400" height="7.200" fill="#000"/><rect x="601.8" y="9.6" width="2" height="2" fill="#fff"/><rect x="601.8" y="12.6" width="2" height="2" fill="#6cc4e8"/>
<rect x="564.7" y="47.6" width="4.400" height="7.200" fill="#000"/><rect x="565.9" y="48.7" width="2" height="2" fill="#fff"/><rect x="565.9" y="51.7" width="2" height="2" fill="#6cc4e8"/>
<rect x="585.8" y="43.6" width="4.400" height="7.200" fill="#000"/><rect x="587" y="44.7" width="2" height="2" fill="#fff"/><rect x="587" y="47.7" width="2" height="2" fill="#6cc4e8"/>
<rect x="612.7" y="45.4" width="4.400" height="7.200" fill="#000"/><rect x="613.9" y="46.5" width="2" height="2" fill="#fff"/><rect x="613.9" y="49.5" width="2" height="2" fill="#6cc4e8"/>
<rect x="625.7" y="35.6" width="4.400" height="7.200" fill="#000"/><rect x="626.9" y="36.7" width="2" height="2" fill="#fff"/><rect x="626.9" y="39.7" width="2" height="2" fill="#6cc4e8"/>
<rect x="578.8" y="70.8" width="4.400" height="7.200" fill="#000"/><rect x="580" y="71.9" width="2" height="2" fill="#fff"/><rect x="580" y="74.9" width="2" height="2" fill="#6cc4e8"/>
<rect x="636.3" y="79.3" width="4.400" height="7.200" fill="#000"/><rect x="637.5" y="80.4" width="2" height="2" fill="#fff"/><rect x="637.5" y="83.4" width="2" height="2" fill="#6cc4e8"/>
<rect x="496.6" y="78.8" width="4.400" height="7.200" fill="#000"/><rect x="497.8" y="79.9" width="2" height="2" fill="#fff"/><rect x="497.8" y="82.9" width="2" height="2" fill="#6cc4e8"/>
<rect x="508.9" y="76.8" width="4.400" height="7.200" fill="#000"/><rect x="510.1" y="77.9" width="2" height="2" fill="#fff"/><rect x="510.1" y="80.9" width="2" height="2" fill="#6cc4e8"/>
<rect x="516.7" y="90.6" width="4.400" height="7.200" fill="#000"/><rect x="517.9" y="91.7" width="2" height="2" fill="#fff"/><rect x="517.9" y="94.7" width="2" height="2" fill="#6cc4e8"/>
<rect x="553.6" y="110.7" width="4.400" height="7.200" fill="#000"/><rect x="554.8" y="111.8" width="2" height="2" fill="#fff"/><rect x="554.8" y="114.8" width="2" height="2" fill="#6cc4e8"/>
<rect x="531.8" y="131.6" width="4.400" height="7.200" fill="#000"/><rect x="533" y="132.7" width="2" height="2" fill="#fff"/><rect x="533" y="135.7" width="2" height="2" fill="#6cc4e8"/>
<rect x="488.8" y="171.5" width="4.400" height="7.200" fill="#000"/><rect x="490" y="172.6" width="2" height="2" fill="#fff"/><rect x="490" y="175.6" width="2" height="2" fill="#6cc4e8"/>
<rect x="514.9" y="190.6" width="4.400" height="7.200" fill="#000"/><rect x="516.1" y="191.7" width="2" height="2" fill="#fff"/><rect x="516.1" y="194.7" width="2" height="2" fill="#6cc4e8"/>
<rect x="740.8" y="0.4" width="4.400" height="7.200" fill="#000"/><rect x="742" y="1.5" width="2" height="2" fill="#fff"/><rect x="742" y="4.5" width="2" height="2" fill="#6cc4e8"/>
<rect x="646.8" y="41.6" width="4.400" height="7.200" fill="#000"/><rect x="648" y="42.7" width="2" height="2" fill="#fff"/><rect x="648" y="45.7" width="2" height="2" fill="#6cc4e8"/>
<rect x="662.7" y="38.6" width="4.400" height="7.200" fill="#000"/><rect x="663.9" y="39.7" width="2" height="2" fill="#fff"/><rect x="663.9" y="42.7" width="2" height="2" fill="#6cc4e8"/>
<rect x="648.9" y="50.7" width="4.400" height="7.200" fill="#000"/><rect x="650.1" y="51.8" width="2" height="2" fill="#fff"/><rect x="650.1" y="54.8" width="2" height="2" fill="#6cc4e8"/>
<rect x="661.7" y="66.7" width="4.400" height="7.200" fill="#000"/><rect x="662.9" y="67.8" width="2" height="2" fill="#fff"/><rect x="662.9" y="70.8" width="2" height="2" fill="#6cc4e8"/>
<rect x="644.6" y="81.3" width="4.400" height="7.200" fill="#000"/><rect x="645.8" y="82.4" width="2" height="2" fill="#fff"/><rect x="645.8" y="85.4" width="2" height="2" fill="#6cc4e8"/>
<rect x="641.8" y="91.4" width="4.400" height="7.200" fill="#000"/><rect x="643" y="92.5" width="2" height="2" fill="#fff"/><rect x="643" y="95.5" width="2" height="2" fill="#6cc4e8"/>
<rect x="637.8" y="79.3" width="4.400" height="7.200" fill="#000"/><rect x="639" y="80.4" width="2" height="2" fill="#fff"/><rect x="639" y="83.4" width="2" height="2" fill="#6cc4e8"/>
<rect x="760.7" y="55.9" width="4.400" height="7.200" fill="#000"/><rect x="761.9" y="57" width="2" height="2" fill="#fff"/><rect x="761.9" y="60" width="2" height="2" fill="#6cc4e8"/>
<rect x="749.6" y="69.8" width="4.400" height="7.200" fill="#000"/><rect x="750.8" y="70.9" width="2" height="2" fill="#fff"/><rect x="750.8" y="73.9" width="2" height="2" fill="#6cc4e8"/>
<rect x="768.7" y="96.6" width="4.400" height="7.200" fill="#000"/><rect x="769.9" y="97.7" width="2" height="2" fill="#fff"/><rect x="769.9" y="100.7" width="2" height="2" fill="#6cc4e8"/>
<rect x="806.6" y="75.8" width="4.400" height="7.200" fill="#000"/><rect x="807.8" y="76.9" width="2" height="2" fill="#fff"/><rect x="807.8" y="79.9" width="2" height="2" fill="#6cc4e8"/>
<rect x="808.9" y="79.6" width="4.400" height="7.200" fill="#000"/><rect x="810.1" y="80.7" width="2" height="2" fill="#fff"/><rect x="810.1" y="83.7" width="2" height="2" fill="#6cc4e8"/>
<rect x="733.8" y="124.5" width="4.400" height="7.200" fill="#000"/><rect x="735" y="125.6" width="2" height="2" fill="#fff"/><rect x="735" y="128.6" width="2" height="2" fill="#6cc4e8"/>
<rect x="726.7" y="140.9" width="4.400" height="7.200" fill="#000"/><rect x="727.9" y="142" width="2" height="2" fill="#fff"/><rect x="727.9" y="145" width="2" height="2" fill="#6cc4e8"/>
<rect x="747.6" y="141.6" width="4.400" height="7.200" fill="#000"/><rect x="748.8" y="142.7" width="2" height="2" fill="#fff"/><rect x="748.8" y="145.7" width="2" height="2" fill="#6cc4e8"/>
<rect x="798.6" y="128.8" width="4.400" height="7.200" fill="#000"/><rect x="799.8" y="129.9" width="2" height="2" fill="#fff"/><rect x="799.8" y="132.9" width="2" height="2" fill="#6cc4e8"/>
<rect x="809.7" y="132.6" width="4.400" height="7.200" fill="#000"/><rect x="810.9" y="133.7" width="2" height="2" fill="#fff"/><rect x="810.9" y="136.7" width="2" height="2" fill="#6cc4e8"/>
<rect x="823.7" y="125.8" width="4.400" height="7.200" fill="#000"/><rect x="824.9" y="126.9" width="2" height="2" fill="#fff"/><rect x="824.9" y="129.9" width="2" height="2" fill="#6cc4e8"/>
<rect x="841.8" y="94.9" width="4.400" height="7.200" fill="#000"/><rect x="843" y="96" width="2" height="2" fill="#fff"/><rect x="843" y="99" width="2" height="2" fill="#6cc4e8"/>
<rect x="922.7" y="134.8" width="4.400" height="7.200" fill="#000"/><rect x="923.9" y="135.9" width="2" height="2" fill="#fff"/><rect x="923.9" y="138.9" width="2" height="2" fill="#6cc4e8"/>
<rect x="907.4" y="143.6" width="4.400" height="7.200" fill="#000"/><rect x="908.6" y="144.7" width="2" height="2" fill="#fff"/><rect x="908.6" y="147.7" width="2" height="2" fill="#6cc4e8"/>
<rect x="893.6" y="146.9" width="4.400" height="7.200" fill="#000"/><rect x="894.8" y="148" width="2" height="2" fill="#fff"/><rect x="894.8" y="151" width="2" height="2" fill="#6cc4e8"/>
<rect x="890.6" y="153.7" width="4.400" height="7.200" fill="#000"/><rect x="891.8" y="154.8" width="2" height="2" fill="#fff"/><rect x="891.8" y="157.8" width="2" height="2" fill="#6cc4e8"/>
<rect x="914.7" y="158.7" width="4.400" height="7.200" fill="#000"/><rect x="915.9" y="159.8" width="2" height="2" fill="#fff"/><rect x="915.9" y="162.8" width="2" height="2" fill="#6cc4e8"/>
<rect x="875.5" y="162" width="4.400" height="7.200" fill="#000"/><rect x="876.7" y="163.1" width="2" height="2" fill="#fff"/><rect x="876.7" y="166.1" width="2" height="2" fill="#6cc4e8"/>
<rect x="875.5" y="176.8" width="4.400" height="7.200" fill="#000"/><rect x="876.7" y="177.9" width="2" height="2" fill="#fff"/><rect x="876.7" y="180.9" width="2" height="2" fill="#6cc4e8"/>
<rect x="864.7" y="181.8" width="4.400" height="7.200" fill="#000"/><rect x="865.9" y="182.9" width="2" height="2" fill="#fff"/><rect x="865.9" y="185.9" width="2" height="2" fill="#6cc4e8"/>
<rect x="901.9" y="183.8" width="4.400" height="7.200" fill="#000"/><rect x="903.1" y="184.9" width="2" height="2" fill="#fff"/><rect x="903.1" y="187.9" width="2" height="2" fill="#6cc4e8"/>
<rect x="923.7" y="184.6" width="4.400" height="7.200" fill="#000"/><rect x="924.9" y="185.7" width="2" height="2" fill="#fff"/><rect x="924.9" y="188.7" width="2" height="2" fill="#6cc4e8"/>
<rect x="1010.7" y="192.6" width="4.400" height="7.200" fill="#000"/><rect x="1011.9" y="193.7" width="2" height="2" fill="#fff"/><rect x="1011.9" y="196.7" width="2" height="2" fill="#6cc4e8"/>
<rect x="1032.8" y="190.9" width="4.400" height="7.200" fill="#000"/><rect x="1034" y="192" width="2" height="2" fill="#fff"/><rect x="1034" y="195" width="2" height="2" fill="#6cc4e8"/>
<rect x="896.6" y="198.4" width="4.400" height="7.200" fill="#000"/><rect x="897.8" y="199.5" width="2" height="2" fill="#fff"/><rect x="897.8" y="202.5" width="2" height="2" fill="#6cc4e8"/>
<rect x="1032.8" y="191.4" width="4.400" height="7.200" fill="#000"/><rect x="1034" y="192.5" width="2" height="2" fill="#fff"/><rect x="1034" y="195.5" width="2" height="2" fill="#6cc4e8"/>
<rect x="1051.9" y="190.6" width="4.400" height="7.200" fill="#000"/><rect x="1053.1" y="191.7" width="2" height="2" fill="#fff"/><rect x="1053.1" y="194.7" width="2" height="2" fill="#6cc4e8"/>
<rect x="1055.7" y="189.9" width="4.400" height="7.200" fill="#000"/><rect x="1056.9" y="191" width="2" height="2" fill="#fff"/><rect x="1056.9" y="194" width="2" height="2" fill="#6cc4e8"/>
<rect x="1059.4" y="191.9" width="4.400" height="7.200" fill="#000"/><rect x="1060.6" y="193" width="2" height="2" fill="#fff"/><rect x="1060.6" y="196" width="2" height="2" fill="#6cc4e8"/>
<rect x="444.8" y="203.4" width="4.400" height="7.200" fill="#000"/><rect x="446" y="204.5" width="2" height="2" fill="#fff"/><rect x="446" y="207.5" width="2" height="2" fill="#6cc4e8"/>
<rect x="544.8" y="214" width="4.400" height="7.200" fill="#000"/><rect x="546" y="215.1" width="2" height="2" fill="#fff"/><rect x="546" y="218.1" width="2" height="2" fill="#6cc4e8"/>
<rect x="557.9" y="215" width="4.400" height="7.200" fill="#000"/><rect x="559.1" y="216.1" width="2" height="2" fill="#fff"/><rect x="559.1" y="219.1" width="2" height="2" fill="#6cc4e8"/>
<rect x="625" y="236.6" width="4.400" height="7.200" fill="#000"/><rect x="626.2" y="237.7" width="2" height="2" fill="#fff"/><rect x="626.2" y="240.7" width="2" height="2" fill="#6cc4e8"/>
<rect x="637.8" y="236.6" width="4.400" height="7.200" fill="#000"/><rect x="639" y="237.7" width="2" height="2" fill="#fff"/><rect x="639" y="240.7" width="2" height="2" fill="#6cc4e8"/>
<rect x="617.7" y="251.7" width="4.400" height="7.200" fill="#000"/><rect x="618.9" y="252.8" width="2" height="2" fill="#fff"/><rect x="618.9" y="255.8" width="2" height="2" fill="#6cc4e8"/>
<rect x="583.8" y="270.8" width="4.400" height="7.200" fill="#000"/><rect x="585" y="271.9" width="2" height="2" fill="#fff"/><rect x="585" y="274.9" width="2" height="2" fill="#6cc4e8"/>
<rect x="633.8" y="283.8" width="4.400" height="7.200" fill="#000"/><rect x="635" y="284.9" width="2" height="2" fill="#fff"/><rect x="635" y="287.9" width="2" height="2" fill="#6cc4e8"/>
<rect x="450.9" y="334.8" width="4.400" height="7.200" fill="#000"/><rect x="452.1" y="335.9" width="2" height="2" fill="#fff"/><rect x="452.1" y="338.9" width="2" height="2" fill="#6cc4e8"/>
<rect x="475.5" y="335.6" width="4.400" height="7.200" fill="#000"/><rect x="476.7" y="336.7" width="2" height="2" fill="#fff"/><rect x="476.7" y="339.7" width="2" height="2" fill="#6cc4e8"/>
<rect x="543.8" y="351.2" width="4.400" height="7.200" fill="#000"/><rect x="545" y="352.3" width="2" height="2" fill="#fff"/><rect x="545" y="355.3" width="2" height="2" fill="#6cc4e8"/>
<rect x="536.8" y="357.4" width="4.400" height="7.200" fill="#000"/><rect x="538" y="358.5" width="2" height="2" fill="#fff"/><rect x="538" y="361.5" width="2" height="2" fill="#6cc4e8"/>
<rect x="493.6" y="366.5" width="4.400" height="7.200" fill="#000"/><rect x="494.8" y="367.6" width="2" height="2" fill="#fff"/><rect x="494.8" y="370.6" width="2" height="2" fill="#6cc4e8"/>
<rect x="553.9" y="379.3" width="4.400" height="7.200" fill="#000"/><rect x="555.1" y="380.4" width="2" height="2" fill="#fff"/><rect x="555.1" y="383.4" width="2" height="2" fill="#6cc4e8"/>
<rect x="558.9" y="381.1" width="4.400" height="7.200" fill="#000"/><rect x="560.1" y="382.2" width="2" height="2" fill="#fff"/><rect x="560.1" y="385.2" width="2" height="2" fill="#6cc4e8"/>
<rect x="498.9" y="398.4" width="4.400" height="7.200" fill="#000"/><rect x="500.1" y="399.5" width="2" height="2" fill="#fff"/><rect x="500.1" y="402.5" width="2" height="2" fill="#6cc4e8"/>
<rect x="639.1" y="236.6" width="4.400" height="7.200" fill="#000"/><rect x="640.3" y="237.7" width="2" height="2" fill="#fff"/><rect x="640.3" y="240.7" width="2" height="2" fill="#6cc4e8"/>
<rect x="675.5" y="236.6" width="4.400" height="7.200" fill="#000"/><rect x="676.7" y="237.7" width="2" height="2" fill="#fff"/><rect x="676.7" y="240.7" width="2" height="2" fill="#6cc4e8"/>
<rect x="688.8" y="236.6" width="4.400" height="7.200" fill="#000"/><rect x="690" y="237.7" width="2" height="2" fill="#fff"/><rect x="690" y="240.7" width="2" height="2" fill="#6cc4e8"/>
<rect x="815.7" y="264.7" width="4.400" height="7.200" fill="#000"/><rect x="816.9" y="265.8" width="2" height="2" fill="#fff"/><rect x="816.9" y="268.8" width="2" height="2" fill="#6cc4e8"/>
<rect x="815.7" y="305.7" width="4.400" height="7.200" fill="#000"/><rect x="816.9" y="306.8" width="2" height="2" fill="#fff"/><rect x="816.9" y="309.8" width="2" height="2" fill="#6cc4e8"/>
<rect x="779.8" y="324.5" width="4.400" height="7.200" fill="#000"/><rect x="781" y="325.6" width="2" height="2" fill="#fff"/><rect x="781" y="328.6" width="2" height="2" fill="#6cc4e8"/>
<rect x="725.7" y="337.3" width="4.400" height="7.200" fill="#000"/><rect x="726.9" y="338.4" width="2" height="2" fill="#fff"/><rect x="726.9" y="341.4" width="2" height="2" fill="#6cc4e8"/>
<rect x="721" y="344.6" width="4.400" height="7.200" fill="#000"/><rect x="722.2" y="345.7" width="2" height="2" fill="#fff"/><rect x="722.2" y="348.7" width="2" height="2" fill="#6cc4e8"/>
<rect x="727" y="343.4" width="4.400" height="7.200" fill="#000"/><rect x="728.2" y="344.5" width="2" height="2" fill="#fff"/><rect x="728.2" y="347.5" width="2" height="2" fill="#6cc4e8"/>
<rect x="828" y="365.5" width="4.400" height="7.200" fill="#000"/><rect x="829.2" y="366.6" width="2" height="2" fill="#fff"/><rect x="829.2" y="369.6" width="2" height="2" fill="#6cc4e8"/>
<rect x="707.6" y="369.8" width="4.400" height="7.200" fill="#000"/><rect x="708.8" y="370.9" width="2" height="2" fill="#fff"/><rect x="708.8" y="373.9" width="2" height="2" fill="#6cc4e8"/>
<rect x="698.9" y="376.8" width="4.400" height="7.200" fill="#000"/><rect x="700.1" y="377.9" width="2" height="2" fill="#fff"/><rect x="700.1" y="380.9" width="2" height="2" fill="#6cc4e8"/>
<rect x="691.8" y="384.6" width="4.400" height="7.200" fill="#000"/><rect x="693" y="385.7" width="2" height="2" fill="#fff"/><rect x="693" y="388.7" width="2" height="2" fill="#6cc4e8"/>
<rect x="788.6" y="392.6" width="4.400" height="7.200" fill="#000"/><rect x="789.8" y="393.7" width="2" height="2" fill="#fff"/><rect x="789.8" y="396.7" width="2" height="2" fill="#6cc4e8"/>
<rect x="786.5" y="396.9" width="4.400" height="7.200" fill="#000"/><rect x="787.7" y="398" width="2" height="2" fill="#fff"/><rect x="787.7" y="401" width="2" height="2" fill="#6cc4e8"/>
<rect x="896.8" y="201.4" width="4.400" height="7.200" fill="#000"/><rect x="898" y="202.5" width="2" height="2" fill="#fff"/><rect x="898" y="205.5" width="2" height="2" fill="#6cc4e8"/>
<rect x="914.9" y="212.7" width="4.400" height="7.200" fill="#000"/><rect x="916.1" y="213.8" width="2" height="2" fill="#fff"/><rect x="916.1" y="216.8" width="2" height="2" fill="#6cc4e8"/>
<rect x="1001.1" y="204.7" width="4.400" height="7.200" fill="#000"/><rect x="1002.3" y="205.8" width="2" height="2" fill="#fff"/><rect x="1002.3" y="208.8" width="2" height="2" fill="#6cc4e8"/>
<rect x="924" y="239.4" width="4.400" height="7.200" fill="#000"/><rect x="925.2" y="240.5" width="2" height="2" fill="#fff"/><rect x="925.2" y="243.5" width="2" height="2" fill="#6cc4e8"/>
<rect x="912.7" y="247.4" width="4.400" height="7.200" fill="#000"/><rect x="913.9" y="248.5" width="2" height="2" fill="#fff"/><rect x="913.9" y="251.5" width="2" height="2" fill="#6cc4e8"/>
<rect x="848.6" y="248.7" width="4.400" height="7.200" fill="#000"/><rect x="849.8" y="249.8" width="2" height="2" fill="#fff"/><rect x="849.8" y="252.8" width="2" height="2" fill="#6cc4e8"/>
<rect x="1026.5" y="278.8" width="4.400" height="7.200" fill="#000"/><rect x="1027.7" y="279.9" width="2" height="2" fill="#fff"/><rect x="1027.7" y="282.9" width="2" height="2" fill="#6cc4e8"/>
<rect x="913.7" y="303.4" width="4.400" height="7.200" fill="#000"/><rect x="914.9" y="304.5" width="2" height="2" fill="#fff"/><rect x="914.9" y="307.5" width="2" height="2" fill="#6cc4e8"/>
<rect x="849.6" y="307.7" width="4.400" height="7.200" fill="#000"/><rect x="850.8" y="308.8" width="2" height="2" fill="#fff"/><rect x="850.8" y="311.8" width="2" height="2" fill="#6cc4e8"/>
<rect x="965.7" y="347.9" width="4.400" height="7.200" fill="#000"/><rect x="966.9" y="349" width="2" height="2" fill="#fff"/><rect x="966.9" y="352" width="2" height="2" fill="#6cc4e8"/>
<rect x="933.8" y="364.5" width="4.400" height="7.200" fill="#000"/><rect x="935" y="365.6" width="2" height="2" fill="#fff"/><rect x="935" y="368.6" width="2" height="2" fill="#6cc4e8"/>
<rect x="984.8" y="360.7" width="4.400" height="7.200" fill="#000"/><rect x="986" y="361.8" width="2" height="2" fill="#fff"/><rect x="986" y="364.8" width="2" height="2" fill="#6cc4e8"/>
<rect x="1010.7" y="360.5" width="4.400" height="7.200" fill="#000"/><rect x="1011.9" y="361.6" width="2" height="2" fill="#fff"/><rect x="1011.9" y="364.6" width="2" height="2" fill="#6cc4e8"/>
<rect x="1030.5" y="359.5" width="4.400" height="7.200" fill="#000"/><rect x="1031.7" y="360.6" width="2" height="2" fill="#fff"/><rect x="1031.7" y="363.6" width="2" height="2" fill="#6cc4e8"/>
<rect x="894.8" y="387.3" width="4.400" height="7.200" fill="#000"/><rect x="896" y="388.4" width="2" height="2" fill="#fff"/><rect x="896" y="391.4" width="2" height="2" fill="#6cc4e8"/>
<rect x="915.9" y="392.6" width="4.400" height="7.200" fill="#000"/><rect x="917.1" y="393.7" width="2" height="2" fill="#fff"/><rect x="917.1" y="396.7" width="2" height="2" fill="#6cc4e8"/>
<rect x="1063.7" y="203.4" width="4.400" height="7.200" fill="#000"/><rect x="1064.9" y="204.5" width="2" height="2" fill="#fff"/><rect x="1064.9" y="207.5" width="2" height="2" fill="#6cc4e8"/>
<rect x="1043.9" y="249.9" width="4.400" height="7.200" fill="#000"/><rect x="1045.1" y="251" width="2" height="2" fill="#fff"/><rect x="1045.1" y="254" width="2" height="2" fill="#6cc4e8"/>
<rect x="1053.9" y="254.7" width="4.400" height="7.200" fill="#000"/><rect x="1055.1" y="255.8" width="2" height="2" fill="#fff"/><rect x="1055.1" y="258.8" width="2" height="2" fill="#6cc4e8"/>
<rect x="1074.8" y="253.4" width="4.400" height="7.200" fill="#000"/><rect x="1076" y="254.5" width="2" height="2" fill="#fff"/><rect x="1076" y="257.5" width="2" height="2" fill="#6cc4e8"/>
<rect x="1044.9" y="278" width="4.400" height="7.200" fill="#000"/><rect x="1046.1" y="279.1" width="2" height="2" fill="#fff"/><rect x="1046.1" y="282.1" width="2" height="2" fill="#6cc4e8"/>
<rect x="1047.9" y="280.1" width="4.400" height="7.200" fill="#000"/><rect x="1049.1" y="281.2" width="2" height="2" fill="#fff"/><rect x="1049.1" y="284.2" width="2" height="2" fill="#6cc4e8"/>
<rect x="1041.6" y="283.8" width="4.400" height="7.200" fill="#000"/><rect x="1042.8" y="284.9" width="2" height="2" fill="#fff"/><rect x="1042.8" y="287.9" width="2" height="2" fill="#6cc4e8"/>
<rect x="1041.6" y="292.6" width="4.400" height="7.200" fill="#000"/><rect x="1042.8" y="293.7" width="2" height="2" fill="#fff"/><rect x="1042.8" y="296.7" width="2" height="2" fill="#6cc4e8"/>
<rect x="1104.7" y="272.5" width="4.400" height="7.200" fill="#000"/><rect x="1105.9" y="273.6" width="2" height="2" fill="#fff"/><rect x="1105.9" y="276.6" width="2" height="2" fill="#6cc4e8"/>
<rect x="1162.5" y="271.5" width="4.400" height="7.200" fill="#000"/><rect x="1163.7" y="272.6" width="2" height="2" fill="#fff"/><rect x="1163.7" y="275.6" width="2" height="2" fill="#6cc4e8"/>
<rect x="1157.7" y="284.8" width="4.400" height="7.200" fill="#000"/><rect x="1158.9" y="285.9" width="2" height="2" fill="#fff"/><rect x="1158.9" y="288.9" width="2" height="2" fill="#6cc4e8"/>
<rect x="1188.6" y="300.7" width="4.400" height="7.200" fill="#000"/><rect x="1189.8" y="301.8" width="2" height="2" fill="#fff"/><rect x="1189.8" y="304.8" width="2" height="2" fill="#6cc4e8"/>
<rect x="1197.6" y="300.4" width="4.400" height="7.200" fill="#000"/><rect x="1198.8" y="301.5" width="2" height="2" fill="#fff"/><rect x="1198.8" y="304.5" width="2" height="2" fill="#6cc4e8"/>
<rect x="1109.7" y="307.7" width="4.400" height="7.200" fill="#000"/><rect x="1110.9" y="308.8" width="2" height="2" fill="#fff"/><rect x="1110.9" y="311.8" width="2" height="2" fill="#6cc4e8"/>
<rect x="1123.5" y="318.5" width="4.400" height="7.200" fill="#000"/><rect x="1124.7" y="319.6" width="2" height="2" fill="#fff"/><rect x="1124.7" y="322.6" width="2" height="2" fill="#6cc4e8"/>
<rect x="1072.8" y="310.5" width="4.400" height="7.200" fill="#000"/><rect x="1074" y="311.6" width="2" height="2" fill="#fff"/><rect x="1074" y="314.6" width="2" height="2" fill="#6cc4e8"/>
<rect x="1179.8" y="346.6" width="4.400" height="7.200" fill="#000"/><rect x="1181" y="347.7" width="2" height="2" fill="#fff"/><rect x="1181" y="350.7" width="2" height="2" fill="#6cc4e8"/>
<rect x="1180.8" y="350.4" width="4.400" height="7.200" fill="#000"/><rect x="1182" y="351.5" width="2" height="2" fill="#fff"/><rect x="1182" y="354.5" width="2" height="2" fill="#6cc4e8"/>
<rect x="1176.5" y="355.9" width="4.400" height="7.200" fill="#000"/><rect x="1177.7" y="357" width="2" height="2" fill="#fff"/><rect x="1177.7" y="360" width="2" height="2" fill="#6cc4e8"/>
<rect x="1152.7" y="349.7" width="4.400" height="7.200" fill="#000"/><rect x="1153.9" y="350.8" width="2" height="2" fill="#fff"/><rect x="1153.9" y="353.8" width="2" height="2" fill="#6cc4e8"/>
<rect x="1156.9" y="359.5" width="4.400" height="7.200" fill="#000"/><rect x="1158.1" y="360.6" width="2" height="2" fill="#fff"/><rect x="1158.1" y="363.6" width="2" height="2" fill="#6cc4e8"/>
<rect x="1128.8" y="356.4" width="4.400" height="7.200" fill="#000"/><rect x="1130" y="357.5" width="2" height="2" fill="#fff"/><rect x="1130" y="360.5" width="2" height="2" fill="#6cc4e8"/>
<rect x="1216.7" y="359.7" width="4.400" height="7.200" fill="#000"/><rect x="1217.9" y="360.8" width="2" height="2" fill="#fff"/><rect x="1217.9" y="363.8" width="2" height="2" fill="#6cc4e8"/>
<rect x="1224.8" y="374.5" width="4.400" height="7.200" fill="#000"/><rect x="1226" y="375.6" width="2" height="2" fill="#fff"/><rect x="1226" y="378.6" width="2" height="2" fill="#6cc4e8"/>
<rect x="1031.1" y="359.5" width="4.400" height="7.200" fill="#000"/><rect x="1032.3" y="360.6" width="2" height="2" fill="#fff"/><rect x="1032.3" y="363.6" width="2" height="2" fill="#6cc4e8"/>
<rect x="1041.6" y="384.8" width="4.400" height="7.200" fill="#000"/><rect x="1042.8" y="385.9" width="2" height="2" fill="#fff"/><rect x="1042.8" y="388.9" width="2" height="2" fill="#6cc4e8"/>
<rect x="498.6" y="400.9" width="4.400" height="7.200" fill="#000"/><rect x="499.8" y="402" width="2" height="2" fill="#fff"/><rect x="499.8" y="405" width="2" height="2" fill="#6cc4e8"/>
<rect x="484.8" y="457.9" width="4.400" height="7.200" fill="#000"/><rect x="486" y="459" width="2" height="2" fill="#fff"/><rect x="486" y="462" width="2" height="2" fill="#6cc4e8"/>
<rect x="475.5" y="465.7" width="4.400" height="7.200" fill="#000"/><rect x="476.7" y="466.8" width="2" height="2" fill="#fff"/><rect x="476.7" y="469.8" width="2" height="2" fill="#6cc4e8"/>
<rect x="446.8" y="471.8" width="4.400" height="7.200" fill="#000"/><rect x="448" y="472.9" width="2" height="2" fill="#fff"/><rect x="448" y="475.9" width="2" height="2" fill="#6cc4e8"/>
<rect x="470" y="492.6" width="4.400" height="7.200" fill="#000"/><rect x="471.2" y="493.7" width="2" height="2" fill="#fff"/><rect x="471.2" y="496.7" width="2" height="2" fill="#6cc4e8"/>
<rect x="490.8" y="501.7" width="4.400" height="7.200" fill="#000"/><rect x="492" y="502.8" width="2" height="2" fill="#fff"/><rect x="492" y="505.8" width="2" height="2" fill="#6cc4e8"/>
<rect x="511.9" y="520.8" width="4.400" height="7.200" fill="#000"/><rect x="513.1" y="521.9" width="2" height="2" fill="#fff"/><rect x="513.1" y="524.9" width="2" height="2" fill="#6cc4e8"/>
<rect x="517.7" y="540.9" width="4.400" height="7.200" fill="#000"/><rect x="518.9" y="542" width="2" height="2" fill="#fff"/><rect x="518.9" y="545" width="2" height="2" fill="#6cc4e8"/>
<rect x="524.7" y="540.9" width="4.400" height="7.200" fill="#000"/><rect x="525.9" y="542" width="2" height="2" fill="#fff"/><rect x="525.9" y="545" width="2" height="2" fill="#6cc4e8"/>
<rect x="548.6" y="518.8" width="4.400" height="7.200" fill="#000"/><rect x="549.8" y="519.9" width="2" height="2" fill="#fff"/><rect x="549.8" y="522.9" width="2" height="2" fill="#6cc4e8"/>
<rect x="573.7" y="465.7" width="4.400" height="7.200" fill="#000"/><rect x="574.9" y="466.8" width="2" height="2" fill="#fff"/><rect x="574.9" y="469.8" width="2" height="2" fill="#6cc4e8"/>
<rect x="581.8" y="466.7" width="4.400" height="7.200" fill="#000"/><rect x="583" y="467.8" width="2" height="2" fill="#fff"/><rect x="583" y="470.8" width="2" height="2" fill="#6cc4e8"/>
<rect x="559.7" y="488.3" width="4.400" height="7.200" fill="#000"/><rect x="560.9" y="489.4" width="2" height="2" fill="#fff"/><rect x="560.9" y="492.4" width="2" height="2" fill="#6cc4e8"/>
<rect x="571.7" y="531.8" width="4.400" height="7.200" fill="#000"/><rect x="572.9" y="532.9" width="2" height="2" fill="#fff"/><rect x="572.9" y="535.9" width="2" height="2" fill="#6cc4e8"/>
<rect x="584.8" y="537.3" width="4.400" height="7.200" fill="#000"/><rect x="586" y="538.4" width="2" height="2" fill="#fff"/><rect x="586" y="541.4" width="2" height="2" fill="#6cc4e8"/>
<rect x="608.7" y="545.9" width="4.400" height="7.200" fill="#000"/><rect x="609.9" y="547" width="2" height="2" fill="#fff"/><rect x="609.9" y="550" width="2" height="2" fill="#6cc4e8"/>
<rect x="627.7" y="556.7" width="4.400" height="7.200" fill="#000"/><rect x="628.9" y="557.8" width="2" height="2" fill="#fff"/><rect x="628.9" y="560.8" width="2" height="2" fill="#6cc4e8"/>
<rect x="618.7" y="563.7" width="4.400" height="7.200" fill="#000"/><rect x="619.9" y="564.8" width="2" height="2" fill="#fff"/><rect x="619.9" y="567.8" width="2" height="2" fill="#6cc4e8"/>
<rect x="584.8" y="585.6" width="4.400" height="7.200" fill="#000"/><rect x="586" y="586.7" width="2" height="2" fill="#fff"/><rect x="586" y="589.7" width="2" height="2" fill="#6cc4e8"/>
<rect x="599.9" y="595.1" width="4.400" height="7.200" fill="#000"/><rect x="601.1" y="596.2" width="2" height="2" fill="#fff"/><rect x="601.1" y="599.2" width="2" height="2" fill="#6cc4e8"/>
<rect x="604.4" y="594.4" width="4.400" height="7.200" fill="#000"/><rect x="605.6" y="595.5" width="2" height="2" fill="#fff"/><rect x="605.6" y="598.5" width="2" height="2" fill="#6cc4e8"/>
<rect x="619" y="463.5" width="4.400" height="7.200" fill="#000"/><rect x="620.2" y="464.6" width="2" height="2" fill="#fff"/><rect x="620.2" y="467.6" width="2" height="2" fill="#6cc4e8"/>
<rect x="612.9" y="427.8" width="4.400" height="7.200" fill="#000"/><rect x="614.1" y="428.9" width="2" height="2" fill="#fff"/><rect x="614.1" y="431.9" width="2" height="2" fill="#6cc4e8"/>
<rect x="628" y="421" width="4.400" height="7.200" fill="#000"/><rect x="629.2" y="422.1" width="2" height="2" fill="#fff"/><rect x="629.2" y="425.1" width="2" height="2" fill="#6cc4e8"/>
<rect x="628" y="429.8" width="4.400" height="7.200" fill="#000"/><rect x="629.2" y="430.9" width="2" height="2" fill="#fff"/><rect x="629.2" y="433.9" width="2" height="2" fill="#6cc4e8"/>
<rect x="637.8" y="589.4" width="4.400" height="7.200" fill="#000"/><rect x="639" y="590.5" width="2" height="2" fill="#fff"/><rect x="639" y="593.5" width="2" height="2" fill="#6cc4e8"/>
<rect x="685.5" y="414.7" width="4.400" height="7.200" fill="#000"/><rect x="686.7" y="415.8" width="2" height="2" fill="#fff"/><rect x="686.7" y="418.8" width="2" height="2" fill="#6cc4e8"/>
<rect x="786.8" y="399.7" width="4.400" height="7.200" fill="#000"/><rect x="788" y="400.8" width="2" height="2" fill="#fff"/><rect x="788" y="403.8" width="2" height="2" fill="#6cc4e8"/>
<rect x="825" y="406.7" width="4.400" height="7.200" fill="#000"/><rect x="826.2" y="407.8" width="2" height="2" fill="#fff"/><rect x="826.2" y="410.8" width="2" height="2" fill="#6cc4e8"/>
<rect x="773.7" y="446.4" width="4.400" height="7.200" fill="#000"/><rect x="774.9" y="447.5" width="2" height="2" fill="#fff"/><rect x="774.9" y="450.5" width="2" height="2" fill="#6cc4e8"/>
<rect x="720.7" y="495.6" width="4.400" height="7.200" fill="#000"/><rect x="721.9" y="496.7" width="2" height="2" fill="#fff"/><rect x="721.9" y="499.7" width="2" height="2" fill="#6cc4e8"/>
<rect x="705.6" y="515.5" width="4.400" height="7.200" fill="#000"/><rect x="706.8" y="516.6" width="2" height="2" fill="#fff"/><rect x="706.8" y="519.6" width="2" height="2" fill="#6cc4e8"/>
<rect x="684.8" y="530.6" width="4.400" height="7.200" fill="#000"/><rect x="686" y="531.7" width="2" height="2" fill="#fff"/><rect x="686" y="534.7" width="2" height="2" fill="#6cc4e8"/>
<rect x="695.6" y="529.6" width="4.400" height="7.200" fill="#000"/><rect x="696.8" y="530.7" width="2" height="2" fill="#fff"/><rect x="696.8" y="533.7" width="2" height="2" fill="#6cc4e8"/>
<rect x="700.6" y="534.6" width="4.400" height="7.200" fill="#000"/><rect x="701.8" y="535.7" width="2" height="2" fill="#fff"/><rect x="701.8" y="538.7" width="2" height="2" fill="#6cc4e8"/>
<rect x="648.6" y="539.6" width="4.400" height="7.200" fill="#000"/><rect x="649.8" y="540.7" width="2" height="2" fill="#fff"/><rect x="649.8" y="543.7" width="2" height="2" fill="#6cc4e8"/>
<rect x="751.6" y="516.5" width="4.400" height="7.200" fill="#000"/><rect x="752.8" y="517.6" width="2" height="2" fill="#fff"/><rect x="752.8" y="520.6" width="2" height="2" fill="#6cc4e8"/>
<rect x="755.4" y="521.5" width="4.400" height="7.200" fill="#000"/><rect x="756.6" y="522.6" width="2" height="2" fill="#fff"/><rect x="756.6" y="525.6" width="2" height="2" fill="#6cc4e8"/>
<rect x="802.9" y="488.3" width="4.400" height="7.200" fill="#000"/><rect x="804.1" y="489.4" width="2" height="2" fill="#fff"/><rect x="804.1" y="492.4" width="2" height="2" fill="#6cc4e8"/>
<rect x="825.7" y="494.6" width="4.400" height="7.200" fill="#000"/><rect x="826.9" y="495.7" width="2" height="2" fill="#fff"/><rect x="826.9" y="498.7" width="2" height="2" fill="#6cc4e8"/>
<rect x="828" y="539.6" width="4.400" height="7.200" fill="#000"/><rect x="829.2" y="540.7" width="2" height="2" fill="#fff"/><rect x="829.2" y="543.7" width="2" height="2" fill="#6cc4e8"/>
<rect x="729.5" y="553.4" width="4.400" height="7.200" fill="#000"/><rect x="730.7" y="554.5" width="2" height="2" fill="#fff"/><rect x="730.7" y="557.5" width="2" height="2" fill="#6cc4e8"/>
<rect x="730.5" y="559.2" width="4.400" height="7.200" fill="#000"/><rect x="731.7" y="560.3" width="2" height="2" fill="#fff"/><rect x="731.7" y="563.3" width="2" height="2" fill="#6cc4e8"/>
<rect x="805.6" y="561.7" width="4.400" height="7.200" fill="#000"/><rect x="806.8" y="562.8" width="2" height="2" fill="#fff"/><rect x="806.8" y="565.8" width="2" height="2" fill="#6cc4e8"/>
<rect x="654.6" y="577.5" width="4.400" height="7.200" fill="#000"/><rect x="655.8" y="578.6" width="2" height="2" fill="#fff"/><rect x="655.8" y="581.6" width="2" height="2" fill="#6cc4e8"/>
<rect x="639.1" y="589.4" width="4.400" height="7.200" fill="#000"/><rect x="640.3" y="590.5" width="2" height="2" fill="#fff"/><rect x="640.3" y="593.5" width="2" height="2" fill="#6cc4e8"/>
<rect x="708.9" y="598.4" width="4.400" height="7.200" fill="#000"/><rect x="710.1" y="599.5" width="2" height="2" fill="#fff"/><rect x="710.1" y="602.5" width="2" height="2" fill="#6cc4e8"/>
<rect x="852.9" y="474.5" width="4.400" height="7.200" fill="#000"/><rect x="854.1" y="475.6" width="2" height="2" fill="#fff"/><rect x="854.1" y="478.6" width="2" height="2" fill="#6cc4e8"/>
<rect x="875.7" y="477.8" width="4.400" height="7.200" fill="#000"/><rect x="876.9" y="478.9" width="2" height="2" fill="#fff"/><rect x="876.9" y="481.9" width="2" height="2" fill="#6cc4e8"/>
<rect x="886.8" y="480.6" width="4.400" height="7.200" fill="#000"/><rect x="888" y="481.7" width="2" height="2" fill="#fff"/><rect x="888" y="484.7" width="2" height="2" fill="#6cc4e8"/>
<rect x="979" y="513.7" width="4.400" height="7.200" fill="#000"/><rect x="980.2" y="514.8" width="2" height="2" fill="#fff"/><rect x="980.2" y="517.8" width="2" height="2" fill="#6cc4e8"/>
<rect x="855.9" y="543.6" width="4.400" height="7.200" fill="#000"/><rect x="857.1" y="544.7" width="2" height="2" fill="#fff"/><rect x="857.1" y="547.7" width="2" height="2" fill="#6cc4e8"/>
<rect x="951.6" y="545.6" width="4.400" height="7.200" fill="#000"/><rect x="952.8" y="546.7" width="2" height="2" fill="#fff"/><rect x="952.8" y="549.7" width="2" height="2" fill="#6cc4e8"/>
<rect x="1007.9" y="544.6" width="4.400" height="7.200" fill="#000"/><rect x="1009.1" y="545.7" width="2" height="2" fill="#fff"/><rect x="1009.1" y="548.7" width="2" height="2" fill="#6cc4e8"/>
<rect x="1030.8" y="570.8" width="4.400" height="7.200" fill="#000"/><rect x="1032" y="571.9" width="2" height="2" fill="#fff"/><rect x="1032" y="574.9" width="2" height="2" fill="#6cc4e8"/>
<rect x="1023.7" y="583.8" width="4.400" height="7.200" fill="#000"/><rect x="1024.9" y="584.9" width="2" height="2" fill="#fff"/><rect x="1024.9" y="587.9" width="2" height="2" fill="#6cc4e8"/>
<rect x="1056.7" y="410.2" width="4.400" height="7.200" fill="#000"/><rect x="1057.9" y="411.3" width="2" height="2" fill="#fff"/><rect x="1057.9" y="414.3" width="2" height="2" fill="#6cc4e8"/>
<rect x="1079" y="403.4" width="4.400" height="7.200" fill="#000"/><rect x="1080.2" y="404.5" width="2" height="2" fill="#fff"/><rect x="1080.2" y="407.5" width="2" height="2" fill="#6cc4e8"/>
<rect x="1103.7" y="432.3" width="4.400" height="7.200" fill="#000"/><rect x="1104.9" y="433.4" width="2" height="2" fill="#fff"/><rect x="1104.9" y="436.4" width="2" height="2" fill="#6cc4e8"/>
<rect x="1082.6" y="478.6" width="4.400" height="7.200" fill="#000"/><rect x="1083.8" y="479.7" width="2" height="2" fill="#fff"/><rect x="1083.8" y="482.7" width="2" height="2" fill="#6cc4e8"/>
<rect x="1137.8" y="506.4" width="4.400" height="7.200" fill="#000"/><rect x="1139" y="507.5" width="2" height="2" fill="#fff"/><rect x="1139" y="510.5" width="2" height="2" fill="#6cc4e8"/>
<rect x="1109.7" y="529.3" width="4.400" height="7.200" fill="#000"/><rect x="1110.9" y="530.4" width="2" height="2" fill="#fff"/><rect x="1110.9" y="533.4" width="2" height="2" fill="#6cc4e8"/>
<rect x="1078.8" y="548.7" width="4.400" height="7.200" fill="#000"/><rect x="1080" y="549.8" width="2" height="2" fill="#fff"/><rect x="1080" y="552.8" width="2" height="2" fill="#6cc4e8"/>
<rect x="1055.7" y="554.4" width="4.400" height="7.200" fill="#000"/><rect x="1056.9" y="555.5" width="2" height="2" fill="#fff"/><rect x="1056.9" y="558.5" width="2" height="2" fill="#6cc4e8"/>
<rect x="1044.9" y="569.5" width="4.400" height="7.200" fill="#000"/><rect x="1046.1" y="570.6" width="2" height="2" fill="#fff"/><rect x="1046.1" y="573.6" width="2" height="2" fill="#6cc4e8"/>
<rect x="1031.1" y="570.5" width="4.400" height="7.200" fill="#000"/><rect x="1032.3" y="571.6" width="2" height="2" fill="#fff"/><rect x="1032.3" y="574.6" width="2" height="2" fill="#6cc4e8"/>
<rect x="1118.5" y="549.4" width="4.400" height="7.200" fill="#000"/><rect x="1119.7" y="550.5" width="2" height="2" fill="#fff"/><rect x="1119.7" y="553.5" width="2" height="2" fill="#6cc4e8"/>
<rect x="1100.9" y="557.4" width="4.400" height="7.200" fill="#000"/><rect x="1102.1" y="558.5" width="2" height="2" fill="#fff"/><rect x="1102.1" y="561.5" width="2" height="2" fill="#6cc4e8"/>
<rect x="1153.7" y="574.5" width="4.400" height="7.200" fill="#000"/><rect x="1154.9" y="575.6" width="2" height="2" fill="#fff"/><rect x="1154.9" y="578.6" width="2" height="2" fill="#6cc4e8"/>
<rect x="1167.5" y="446.6" width="4.400" height="7.200" fill="#000"/><rect x="1168.7" y="447.7" width="2" height="2" fill="#fff"/><rect x="1168.7" y="450.7" width="2" height="2" fill="#6cc4e8"/>
<rect x="1169.7" y="449.9" width="4.400" height="7.200" fill="#000"/><rect x="1170.9" y="451" width="2" height="2" fill="#fff"/><rect x="1170.9" y="454" width="2" height="2" fill="#6cc4e8"/>
<rect x="1204.9" y="427.8" width="4.400" height="7.200" fill="#000"/><rect x="1206.1" y="428.9" width="2" height="2" fill="#fff"/><rect x="1206.1" y="431.9" width="2" height="2" fill="#6cc4e8"/>
<rect x="1214.7" y="433.6" width="4.400" height="7.200" fill="#000"/><rect x="1215.9" y="434.7" width="2" height="2" fill="#fff"/><rect x="1215.9" y="437.7" width="2" height="2" fill="#6cc4e8"/>
<rect x="1222.8" y="403.4" width="4.400" height="7.200" fill="#000"/><rect x="1224" y="404.5" width="2" height="2" fill="#fff"/><rect x="1224" y="407.5" width="2" height="2" fill="#6cc4e8"/>
<rect x="1198.6" y="530.6" width="4.400" height="7.200" fill="#000"/><rect x="1199.8" y="531.7" width="2" height="2" fill="#fff"/><rect x="1199.8" y="534.7" width="2" height="2" fill="#6cc4e8"/>
<rect x="1212.7" y="559.5" width="4.400" height="7.200" fill="#000"/><rect x="1213.9" y="560.6" width="2" height="2" fill="#fff"/><rect x="1213.9" y="563.6" width="2" height="2" fill="#6cc4e8"/>
<rect x="1092.6" y="598.4" width="4.400" height="7.200" fill="#000"/><rect x="1093.8" y="599.5" width="2" height="2" fill="#fff"/><rect x="1093.8" y="602.5" width="2" height="2" fill="#6cc4e8"/>
<rect x="463.7" y="607.7" width="4.400" height="7.200" fill="#000"/><rect x="464.9" y="608.8" width="2" height="2" fill="#fff"/><rect x="464.9" y="611.8" width="2" height="2" fill="#6cc4e8"/>
<rect x="485.5" y="638.6" width="4.400" height="7.200" fill="#000"/><rect x="486.7" y="639.7" width="2" height="2" fill="#fff"/><rect x="486.7" y="642.7" width="2" height="2" fill="#6cc4e8"/>
<rect x="442.8" y="649.7" width="4.400" height="7.200" fill="#000"/><rect x="444" y="650.8" width="2" height="2" fill="#fff"/><rect x="444" y="653.8" width="2" height="2" fill="#6cc4e8"/>
<rect x="546.6" y="622.6" width="4.400" height="7.200" fill="#000"/><rect x="547.8" y="623.7" width="2" height="2" fill="#fff"/><rect x="547.8" y="626.7" width="2" height="2" fill="#6cc4e8"/>
<rect x="561.7" y="629.6" width="4.400" height="7.200" fill="#000"/><rect x="562.9" y="630.7" width="2" height="2" fill="#fff"/><rect x="562.9" y="633.7" width="2" height="2" fill="#6cc4e8"/>
<rect x="599.9" y="595.4" width="4.400" height="7.200" fill="#000"/><rect x="601.1" y="596.5" width="2" height="2" fill="#fff"/><rect x="601.1" y="599.5" width="2" height="2" fill="#6cc4e8"/>
<rect x="604.4" y="594.7" width="4.400" height="7.200" fill="#000"/><rect x="605.6" y="595.8" width="2" height="2" fill="#fff"/><rect x="605.6" y="598.8" width="2" height="2" fill="#6cc4e8"/>
<rect x="630.8" y="610.8" width="4.400" height="7.200" fill="#000"/><rect x="632" y="611.9" width="2" height="2" fill="#fff"/><rect x="632" y="614.9" width="2" height="2" fill="#6cc4e8"/>
<rect x="609.9" y="631.6" width="4.400" height="7.200" fill="#000"/><rect x="611.1" y="632.7" width="2" height="2" fill="#fff"/><rect x="611.1" y="635.7" width="2" height="2" fill="#6cc4e8"/>
<rect x="604.6" y="652.5" width="4.400" height="7.200" fill="#000"/><rect x="605.8" y="653.6" width="2" height="2" fill="#fff"/><rect x="605.8" y="656.6" width="2" height="2" fill="#6cc4e8"/>
<rect x="562.7" y="680.6" width="4.400" height="7.200" fill="#000"/><rect x="563.9" y="681.7" width="2" height="2" fill="#fff"/><rect x="563.9" y="684.7" width="2" height="2" fill="#6cc4e8"/>
<rect x="619.7" y="710.5" width="4.400" height="7.200" fill="#000"/><rect x="620.9" y="711.6" width="2" height="2" fill="#fff"/><rect x="620.9" y="714.6" width="2" height="2" fill="#6cc4e8"/>
<rect x="708.9" y="600.7" width="4.400" height="7.200" fill="#000"/><rect x="710.1" y="601.8" width="2" height="2" fill="#fff"/><rect x="710.1" y="604.8" width="2" height="2" fill="#6cc4e8"/>
<rect x="687.8" y="623.8" width="4.400" height="7.200" fill="#000"/><rect x="689" y="624.9" width="2" height="2" fill="#fff"/><rect x="689" y="627.9" width="2" height="2" fill="#6cc4e8"/>
<rect x="642.8" y="632.6" width="4.400" height="7.200" fill="#000"/><rect x="644" y="633.7" width="2" height="2" fill="#fff"/><rect x="644" y="636.7" width="2" height="2" fill="#6cc4e8"/>
<rect x="663.7" y="632.6" width="4.400" height="7.200" fill="#000"/><rect x="664.9" y="633.7" width="2" height="2" fill="#fff"/><rect x="664.9" y="636.7" width="2" height="2" fill="#6cc4e8"/>
<rect x="771.7" y="646.7" width="4.400" height="7.200" fill="#000"/><rect x="772.9" y="647.8" width="2" height="2" fill="#fff"/><rect x="772.9" y="650.8" width="2" height="2" fill="#6cc4e8"/>
<rect x="762.7" y="664.5" width="4.400" height="7.200" fill="#000"/><rect x="763.9" y="665.6" width="2" height="2" fill="#fff"/><rect x="763.9" y="668.6" width="2" height="2" fill="#6cc4e8"/>
<rect x="771.7" y="666.5" width="4.400" height="7.200" fill="#000"/><rect x="772.9" y="667.6" width="2" height="2" fill="#fff"/><rect x="772.9" y="670.6" width="2" height="2" fill="#6cc4e8"/>
<rect x="832.8" y="648.7" width="4.400" height="7.200" fill="#000"/><rect x="834" y="649.8" width="2" height="2" fill="#fff"/><rect x="834" y="652.8" width="2" height="2" fill="#6cc4e8"/>
<rect x="837.8" y="635.6" width="4.400" height="7.200" fill="#000"/><rect x="839" y="636.7" width="2" height="2" fill="#fff"/><rect x="839" y="639.7" width="2" height="2" fill="#6cc4e8"/>
<rect x="691.8" y="673.6" width="4.400" height="7.200" fill="#000"/><rect x="693" y="674.7" width="2" height="2" fill="#fff"/><rect x="693" y="677.7" width="2" height="2" fill="#6cc4e8"/>
<rect x="718.5" y="673.6" width="4.400" height="7.200" fill="#000"/><rect x="719.7" y="674.7" width="2" height="2" fill="#fff"/><rect x="719.7" y="677.7" width="2" height="2" fill="#6cc4e8"/>
<rect x="687.8" y="688.6" width="4.400" height="7.200" fill="#000"/><rect x="689" y="689.7" width="2" height="2" fill="#fff"/><rect x="689" y="692.7" width="2" height="2" fill="#6cc4e8"/>
<rect x="684.5" y="691.9" width="4.400" height="7.200" fill="#000"/><rect x="685.7" y="693" width="2" height="2" fill="#fff"/><rect x="685.7" y="696" width="2" height="2" fill="#6cc4e8"/>
<rect x="756.6" y="690.9" width="4.400" height="7.200" fill="#000"/><rect x="757.8" y="692" width="2" height="2" fill="#fff"/><rect x="757.8" y="695" width="2" height="2" fill="#6cc4e8"/>
<rect x="766.7" y="702.7" width="4.400" height="7.200" fill="#000"/><rect x="767.9" y="703.8" width="2" height="2" fill="#fff"/><rect x="767.9" y="706.8" width="2" height="2" fill="#6cc4e8"/>
<rect x="669.7" y="706.7" width="4.400" height="7.200" fill="#000"/><rect x="670.9" y="707.8" width="2" height="2" fill="#fff"/><rect x="670.9" y="710.8" width="2" height="2" fill="#6cc4e8"/>
<rect x="727.7" y="707.5" width="4.400" height="7.200" fill="#000"/><rect x="728.9" y="708.6" width="2" height="2" fill="#fff"/><rect x="728.9" y="711.6" width="2" height="2" fill="#6cc4e8"/>
<rect x="779.8" y="728.6" width="4.400" height="7.200" fill="#000"/><rect x="781" y="729.7" width="2" height="2" fill="#fff"/><rect x="781" y="732.7" width="2" height="2" fill="#6cc4e8"/>
<rect x="810.7" y="731.9" width="4.400" height="7.200" fill="#000"/><rect x="811.9" y="733" width="2" height="2" fill="#fff"/><rect x="811.9" y="736" width="2" height="2" fill="#6cc4e8"/>
<rect x="658.9" y="753" width="4.400" height="7.200" fill="#000"/><rect x="660.1" y="754.1" width="2" height="2" fill="#fff"/><rect x="660.1" y="757.1" width="2" height="2" fill="#6cc4e8"/>
<rect x="686.8" y="753" width="4.400" height="7.200" fill="#000"/><rect x="688" y="754.1" width="2" height="2" fill="#fff"/><rect x="688" y="757.1" width="2" height="2" fill="#6cc4e8"/>
<rect x="675.5" y="773.8" width="4.400" height="7.200" fill="#000"/><rect x="676.7" y="774.9" width="2" height="2" fill="#fff"/><rect x="676.7" y="777.9" width="2" height="2" fill="#6cc4e8"/>
<rect x="665.7" y="783.9" width="4.400" height="7.200" fill="#000"/><rect x="666.9" y="785" width="2" height="2" fill="#fff"/><rect x="666.9" y="788" width="2" height="2" fill="#6cc4e8"/>
<rect x="676.7" y="783.9" width="4.400" height="7.200" fill="#000"/><rect x="677.9" y="785" width="2" height="2" fill="#fff"/><rect x="677.9" y="788" width="2" height="2" fill="#6cc4e8"/>
<rect x="806.9" y="788.4" width="4.400" height="7.200" fill="#000"/><rect x="808.1" y="789.5" width="2" height="2" fill="#fff"/><rect x="808.1" y="792.5" width="2" height="2" fill="#6cc4e8"/>
<rect x="896.8" y="609.7" width="4.400" height="7.200" fill="#000"/><rect x="898" y="610.8" width="2" height="2" fill="#fff"/><rect x="898" y="613.8" width="2" height="2" fill="#6cc4e8"/>
<rect x="839.1" y="635.6" width="4.400" height="7.200" fill="#000"/><rect x="840.3" y="636.7" width="2" height="2" fill="#fff"/><rect x="840.3" y="639.7" width="2" height="2" fill="#6cc4e8"/>
<rect x="895.1" y="639.4" width="4.400" height="7.200" fill="#000"/><rect x="896.3" y="640.5" width="2" height="2" fill="#fff"/><rect x="896.3" y="643.5" width="2" height="2" fill="#6cc4e8"/>
<rect x="940.8" y="630.6" width="4.400" height="7.200" fill="#000"/><rect x="942" y="631.7" width="2" height="2" fill="#fff"/><rect x="942" y="634.7" width="2" height="2" fill="#6cc4e8"/>
<rect x="1001.9" y="670.6" width="4.400" height="7.200" fill="#000"/><rect x="1003.1" y="671.7" width="2" height="2" fill="#fff"/><rect x="1003.1" y="674.7" width="2" height="2" fill="#6cc4e8"/>
<rect x="929.5" y="695.4" width="4.400" height="7.200" fill="#000"/><rect x="930.7" y="696.5" width="2" height="2" fill="#fff"/><rect x="930.7" y="699.5" width="2" height="2" fill="#6cc4e8"/>
<rect x="934.8" y="697.9" width="4.400" height="7.200" fill="#000"/><rect x="936" y="699" width="2" height="2" fill="#fff"/><rect x="936" y="702" width="2" height="2" fill="#6cc4e8"/>
<rect x="936.8" y="713.8" width="4.400" height="7.200" fill="#000"/><rect x="938" y="714.9" width="2" height="2" fill="#fff"/><rect x="938" y="717.9" width="2" height="2" fill="#6cc4e8"/>
<rect x="970.7" y="715.5" width="4.400" height="7.200" fill="#000"/><rect x="971.9" y="716.6" width="2" height="2" fill="#fff"/><rect x="971.9" y="719.6" width="2" height="2" fill="#6cc4e8"/>
<rect x="979.8" y="743.7" width="4.400" height="7.200" fill="#000"/><rect x="981" y="744.8" width="2" height="2" fill="#fff"/><rect x="981" y="747.8" width="2" height="2" fill="#6cc4e8"/>
<rect x="987.8" y="748.7" width="4.400" height="7.200" fill="#000"/><rect x="989" y="749.8" width="2" height="2" fill="#fff"/><rect x="989" y="752.8" width="2" height="2" fill="#6cc4e8"/>
<rect x="896.6" y="780.6" width="4.400" height="7.200" fill="#000"/><rect x="897.8" y="781.7" width="2" height="2" fill="#fff"/><rect x="897.8" y="784.7" width="2" height="2" fill="#6cc4e8"/>
<rect x="843.3" y="787.1" width="4.400" height="7.200" fill="#000"/><rect x="844.5" y="788.2" width="2" height="2" fill="#fff"/><rect x="844.5" y="791.2" width="2" height="2" fill="#6cc4e8"/>
<rect x="1007.9" y="782.9" width="4.400" height="7.200" fill="#000"/><rect x="1009.1" y="784" width="2" height="2" fill="#fff"/><rect x="1009.1" y="787" width="2" height="2" fill="#6cc4e8"/>
<rect x="1033.8" y="781.9" width="4.400" height="7.200" fill="#000"/><rect x="1035" y="783" width="2" height="2" fill="#fff"/><rect x="1035" y="786" width="2" height="2" fill="#6cc4e8"/>
<rect x="1092.6" y="601" width="4.400" height="7.200" fill="#000"/><rect x="1093.8" y="602.1" width="2" height="2" fill="#fff"/><rect x="1093.8" y="605.1" width="2" height="2" fill="#6cc4e8"/>
<rect x="1109.7" y="607.7" width="4.400" height="7.200" fill="#000"/><rect x="1110.9" y="608.8" width="2" height="2" fill="#fff"/><rect x="1110.9" y="611.8" width="2" height="2" fill="#6cc4e8"/>
<rect x="1180.6" y="607.7" width="4.400" height="7.200" fill="#000"/><rect x="1181.8" y="608.8" width="2" height="2" fill="#fff"/><rect x="1181.8" y="611.8" width="2" height="2" fill="#6cc4e8"/>
<rect x="1228.3" y="605.5" width="4.400" height="7.200" fill="#000"/><rect x="1229.5" y="606.6" width="2" height="2" fill="#fff"/><rect x="1229.5" y="609.6" width="2" height="2" fill="#6cc4e8"/>
<rect x="1153.7" y="625.6" width="4.400" height="7.200" fill="#000"/><rect x="1154.9" y="626.7" width="2" height="2" fill="#fff"/><rect x="1154.9" y="629.7" width="2" height="2" fill="#6cc4e8"/>
<rect x="1089.6" y="633.6" width="4.400" height="7.200" fill="#000"/><rect x="1090.8" y="634.7" width="2" height="2" fill="#fff"/><rect x="1090.8" y="637.7" width="2" height="2" fill="#6cc4e8"/>
<rect x="1050.9" y="639.6" width="4.400" height="7.200" fill="#000"/><rect x="1052.1" y="640.7" width="2" height="2" fill="#fff"/><rect x="1052.1" y="643.7" width="2" height="2" fill="#6cc4e8"/>
<rect x="1129.8" y="653.5" width="4.400" height="7.200" fill="#000"/><rect x="1131" y="654.6" width="2" height="2" fill="#fff"/><rect x="1131" y="657.6" width="2" height="2" fill="#6cc4e8"/>
<rect x="1133.6" y="672.6" width="4.400" height="7.200" fill="#000"/><rect x="1134.8" y="673.7" width="2" height="2" fill="#fff"/><rect x="1134.8" y="676.7" width="2" height="2" fill="#6cc4e8"/>
<rect x="1134.6" y="681.6" width="4.400" height="7.200" fill="#000"/><rect x="1135.8" y="682.7" width="2" height="2" fill="#fff"/><rect x="1135.8" y="685.7" width="2" height="2" fill="#6cc4e8"/>
<rect x="1095.6" y="694.4" width="4.400" height="7.200" fill="#000"/><rect x="1096.8" y="695.5" width="2" height="2" fill="#fff"/><rect x="1096.8" y="698.5" width="2" height="2" fill="#6cc4e8"/>
<rect x="1175.8" y="696.4" width="4.400" height="7.200" fill="#000"/><rect x="1177" y="697.5" width="2" height="2" fill="#fff"/><rect x="1177" y="700.5" width="2" height="2" fill="#6cc4e8"/>
<rect x="1220.8" y="707.5" width="4.400" height="7.200" fill="#000"/><rect x="1222" y="708.6" width="2" height="2" fill="#fff"/><rect x="1222" y="711.6" width="2" height="2" fill="#6cc4e8"/>
<rect x="1164.7" y="718.8" width="4.400" height="7.200" fill="#000"/><rect x="1165.9" y="719.9" width="2" height="2" fill="#fff"/><rect x="1165.9" y="722.9" width="2" height="2" fill="#6cc4e8"/>
<rect x="1054.4" y="718.8" width="4.400" height="7.200" fill="#000"/><rect x="1055.6" y="719.9" width="2" height="2" fill="#fff"/><rect x="1055.6" y="722.9" width="2" height="2" fill="#6cc4e8"/>
<rect x="1066.7" y="739.9" width="4.400" height="7.200" fill="#000"/><rect x="1067.9" y="741" width="2" height="2" fill="#fff"/><rect x="1067.9" y="744" width="2" height="2" fill="#6cc4e8"/>
<rect x="1078.8" y="741.7" width="4.400" height="7.200" fill="#000"/><rect x="1080" y="742.8" width="2" height="2" fill="#fff"/><rect x="1080" y="745.8" width="2" height="2" fill="#6cc4e8"/>
<rect x="1131.6" y="738.6" width="4.400" height="7.200" fill="#000"/><rect x="1132.8" y="739.7" width="2" height="2" fill="#fff"/><rect x="1132.8" y="742.7" width="2" height="2" fill="#6cc4e8"/>
<rect x="1134.6" y="742.7" width="4.400" height="7.200" fill="#000"/><rect x="1135.8" y="743.8" width="2" height="2" fill="#fff"/><rect x="1135.8" y="746.8" width="2" height="2" fill="#6cc4e8"/>
<rect x="1127.8" y="745.7" width="4.400" height="7.200" fill="#000"/><rect x="1129" y="746.8" width="2" height="2" fill="#fff"/><rect x="1129" y="749.8" width="2" height="2" fill="#6cc4e8"/>
<rect x="1158.7" y="766.8" width="4.400" height="7.200" fill="#000"/><rect x="1159.9" y="767.9" width="2" height="2" fill="#fff"/><rect x="1159.9" y="770.9" width="2" height="2" fill="#6cc4e8"/>
<rect x="1152.7" y="774.6" width="4.400" height="7.200" fill="#000"/><rect x="1153.9" y="775.7" width="2" height="2" fill="#fff"/><rect x="1153.9" y="778.7" width="2" height="2" fill="#6cc4e8"/>
<rect x="1141.6" y="781.9" width="4.400" height="7.200" fill="#000"/><rect x="1142.8" y="783" width="2" height="2" fill="#fff"/><rect x="1142.8" y="786" width="2" height="2" fill="#6cc4e8"/>
<rect x="1033.6" y="781.9" width="4.400" height="7.200" fill="#000"/><rect x="1034.8" y="783" width="2" height="2" fill="#fff"/><rect x="1034.8" y="786" width="2" height="2" fill="#6cc4e8"/>
</g>
<g font-family="'Liberation Sans',sans-serif" font-size="9.700" fill="#787878" stroke="#787878" stroke-width="0.45">
<text x="487.2" y="19" font-size="9.900" text-anchor="start">Boulogne-sur-Mer</text>
<text x="544.3" y="8.4" font-size="9.900" text-anchor="start">Saint-Omer</text>
<text x="460.6" y="101.4" font-size="9.900" text-anchor="start">Montreuil</text>
<text x="524.7" y="195.4" font-size="9.900" text-anchor="start">Abbeville</text>
<text x="568.6" y="188.3" font-size="9.900" text-anchor="start">Doullens</text>
<text x="621.4" y="12.4" font-size="9.900" text-anchor="start">Hazebrouck</text>
<text x="712.4" y="39.3" font-size="9.900" text-anchor="start">Armentières</text>
<text x="727.4" y="56.4" font-size="9.200" text-anchor="start">LILLE</text>
<text x="668.9" y="84.6" font-size="9.900" text-anchor="start">Béthune</text>
<text x="673.9" y="137.3" font-size="9.200" text-anchor="start">ARRAS</text>
<text x="856.3" y="138.6" font-size="9.900" text-anchor="start">Maubeuge</text>
<text x="896.5" y="177.5" font-size="9.900" text-anchor="start">Avesnes-sur-Helpe</text>
<text x="562.4" y="263.7" font-size="9.200" text-anchor="start">AMIENS</text>
<text x="564.9" y="380" font-size="9.200" text-anchor="start">BEAUVAIS</text>
<text x="723.7" y="246.1" font-size="9.900" text-anchor="start">Péronne</text>
<text x="733.5" y="336.6" font-size="9.900" text-anchor="start">Noyon</text>
<text x="697.8" y="401.4" font-size="9.900" text-anchor="start">Compiègne</text>
<text x="769.4" y="389.3" font-size="9.900" text-anchor="start">Soissons</text>
<text x="925.9" y="214.2" font-size="9.900" text-anchor="start">Fourmies</text>
<text x="931.7" y="252.6" font-size="9.900" text-anchor="start">Hirson</text>
<text x="832.9" y="262.9" font-size="9.900" text-anchor="start">Guise</text>
<text x="830.9" y="342.3" font-size="9.200" text-anchor="start">LAON</text>
<text x="949.8" y="370.5" font-size="9.900" text-anchor="start">Rethel</text>
<text x="988.8" y="276.3" font-size="9.200" text-anchor="start">CHARLEVILLE-MÉZIÈRES</text>
<text x="1089.8" y="300.4" font-size="9.900" text-anchor="start">Sedan</text>
<text x="1002.1" y="387.1" font-size="9.900" text-anchor="start">Vouziers</text>
<text x="508.6" y="422.2" font-size="9.900" text-anchor="start">Gisors</text>
<text x="565.6" y="500.4" font-size="9.200" text-anchor="start">PONTOISE</text>
<text x="583.7" y="533.6" font-size="9.200" text-anchor="start">NANTERRE</text>
<text x="610.9" y="541.8" font-size="9.200" text-anchor="start">PARIS</text>
<text x="508.6" y="575" font-size="9.200" text-anchor="start">VERSAILLES</text>
<text x="627.2" y="527.8" font-size="9.200" text-anchor="start">BOBIGNY</text>
<text x="633.5" y="565.7" font-size="9.200" text-anchor="start">CRÉTEIL</text>
<text x="445.5" y="474.5" font-size="9.900" text-anchor="end">Vernon</text>
<text x="638.5" y="442.7" font-size="9.900" text-anchor="start">Creil</text>
<text x="676.4" y="515.2" font-size="9.900" text-anchor="start">Meaux</text>
<text x="748.5" y="485.3" font-size="9.900" text-anchor="start">Château-Thierry</text>
<text x="906.1" y="424.3" font-size="9.900" text-anchor="start">Reims</text>
<text x="890.3" y="508.4" font-size="9.900" text-anchor="start">Épernay</text>
<text x="858.8" y="533.1" font-size="9.200" text-anchor="start">CHÂLONS-EN-CHAMPAGNE</text>
<text x="948" y="583.3" font-size="9.900" text-anchor="start">Vitry-le-François</text>
<text x="1003.4" y="438.8" font-size="9.900" text-anchor="start">Varennes-en-Argonne</text>
<text x="1177.7" y="456.9" font-size="9.900" text-anchor="start">Verdun</text>
<text x="1136.8" y="561.9" font-size="9.200" text-anchor="start">BAR-LE-DUC</text>
<text x="1161.4" y="575.3" font-size="9.900" text-anchor="start">Commercy</text>
<text x="1207.9" y="526.8" font-size="9.900" text-anchor="start">Saint-Mihiel</text>
<text x="449.5" y="669.5" font-size="9.200" text-anchor="start">CHARTRES</text>
<text x="595.8" y="623" font-size="9.200" text-anchor="start">ÉVRY</text>
<text x="668.9" y="645.2" font-size="9.200" text-anchor="start">MELUN</text>
<text x="725.9" y="684.8" font-size="9.900" text-anchor="start">Montereau-Fault-Yonne</text>
<text x="675.9" y="721.3" font-size="9.900" text-anchor="start">Nemours</text>
<text x="787.5" y="730.1" font-size="9.900" text-anchor="start">Sens</text>
<text x="684.5" y="791.6" font-size="9.900" text-anchor="start">Montargis</text>
<text x="830.5" y="650.7" font-size="9.900" text-anchor="start">Nogent-sur-Seine</text>
<text x="892.3" y="712.5" font-size="9.200" text-anchor="start">TROYES</text>
<text x="1068.4" y="597.7" font-size="9.900" text-anchor="start">Saint-Dizier</text>
<text x="1054.6" y="716" font-size="9.900" text-anchor="start">Bar-sur-Aube</text>
<text x="1079" y="761.5" font-size="9.200" text-anchor="start">CHAUMONT</text>
</g>
<g font-family="'Liberation Mono',monospace" font-size="15" fill="#969696" text-anchor="middle">
<text x="574.4" y="108.8">62</text>
<text x="796.3" y="148">59</text>
<text x="576.4" y="212.9">80</text>
<text x="463.1" y="298.3">76</text>
<text x="662.6" y="374.9">60</text>
<text x="995.3" y="344.3">08</text>
<text x="529.7" y="479.4">95</text>
<text x="511.6" y="559.8">78</text>
<text x="642.5" y="581.8">94</text>
<text x="955.1" y="564.9">51</text>
<text x="1207.9" y="494.5">55</text>
<text x="563.1" y="670.2">91</text>
<text x="476.4" y="707.9">28</text>
<text x="750.1" y="640">77</text>
<text x="998.8" y="728">10</text>
<text x="1128.2" y="783.2">52</text>
</g>
<defs><linearGradient id="lg" x1="0" y1="0" x2="0" y2="1"><stop offset="0" stop-color="#e2231a"/><stop offset="0.33" stop-color="#e2231a"/><stop offset="0.34" stop-color="#f4e300"/><stop offset="0.62" stop-color="#f4e300"/><stop offset="0.63" stop-color="#2fbf4f"/><stop offset="1" stop-color="#27b7a0"/></linearGradient></defs>
<rect x="1152.5" y="11" width="71.5" height="18.5" fill="#fff"/>
<text x="1156.300" y="26" font-family="'Liberation Sans',sans-serif" font-weight="bold" font-size="14" fill="#454545" textLength="65" lengthAdjust="spacingAndGlyphs">V<tspan fill="url(#lg)">I</tspan>GICRUES</text>
<rect x="1164.300" y="12.100" width="2.800" height="4.500" fill="#e2231a"/><path d="M1162.600 27l1.300-2h3.800l1.800 2z" fill="#27a59a"/>
<rect x="443.800" y="773.500" width="132" height="16.500" fill="#fff"/>
<text x="445.500" y="785.300" font-family="'Liberation Sans',sans-serif" font-size="11" fill="#000" textLength="125.500" lengthAdjust="spacing">Carte n° : 17122019_10</text>

</svg>
</body></html>
